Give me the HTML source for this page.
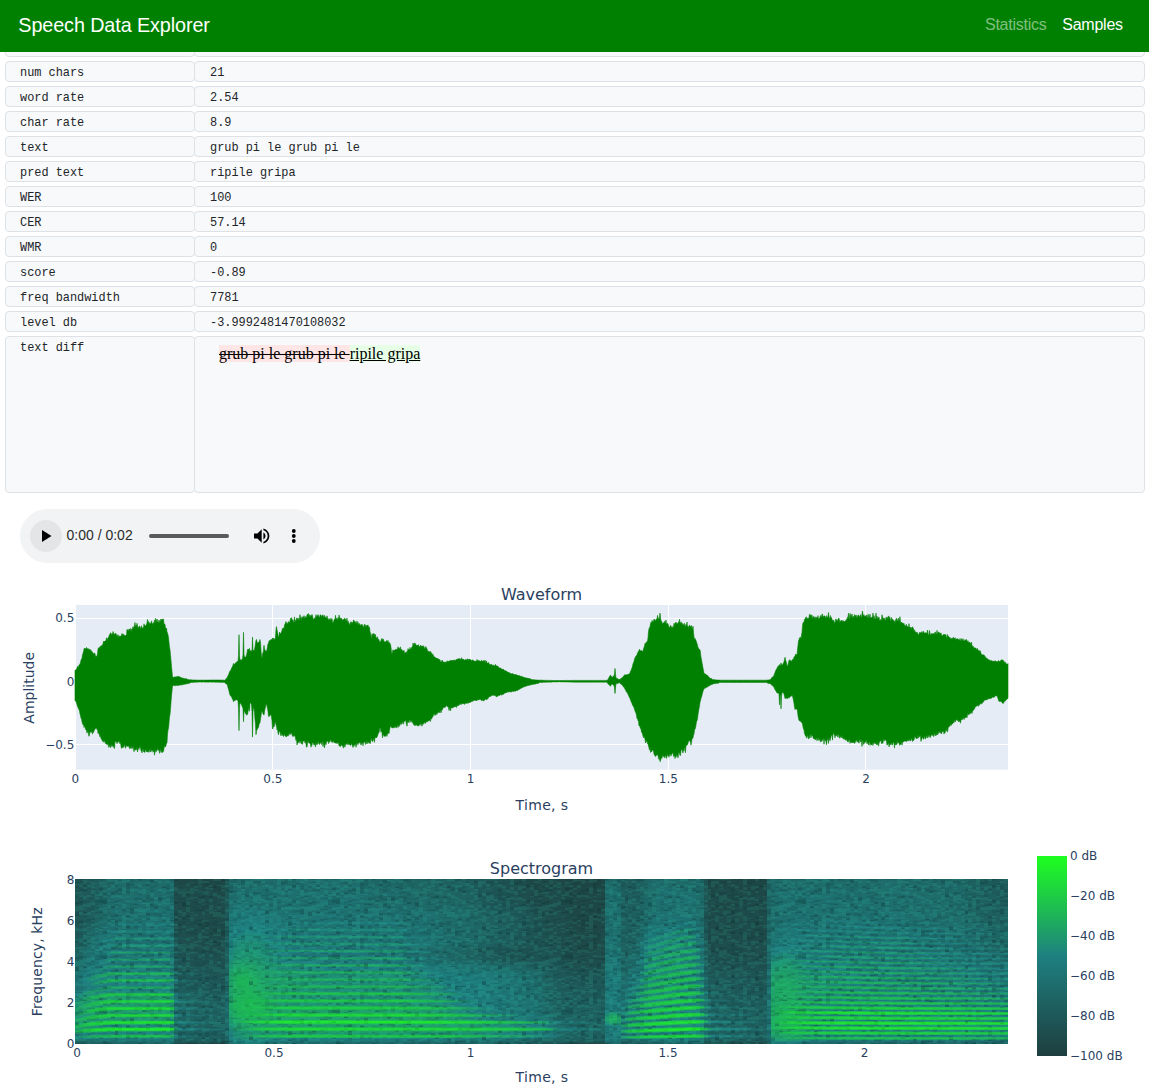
<!DOCTYPE html>
<html lang="en">
<head>
<meta charset="utf-8">
<title>Speech Data Explorer</title>
<style>
html,body{margin:0;padding:0;background:#fff;}
body{width:1149px;height:1085px;position:relative;overflow:hidden;font-family:"Liberation Sans",sans-serif;color:#212529;}
#nav{position:absolute;left:0;top:0;width:1149px;height:52px;background:#008000;z-index:5;}
#brand{position:absolute;left:18.3px;top:11px;font-size:19.8px;line-height:28px;color:#fff;white-space:nowrap;letter-spacing:-0.1px;}
.nl{position:absolute;top:14px;font-size:16px;line-height:22px;white-space:nowrap;}
#n1{left:985px;color:rgba(255,255,255,.5);letter-spacing:-0.25px;}
#n2{left:1062.3px;color:#fff;letter-spacing:-0.25px;}
.c{position:absolute;box-sizing:border-box;height:21px;background:#f8f9fa;border:1px solid #dee2e6;border-radius:4px;font-family:"Liberation Mono",monospace;font-size:11.9px;line-height:19px;color:#212529;white-space:pre;padding:2px 0 0 14px;}
.k{left:5px;width:190px;}
.v{left:194px;width:951px;padding-left:15px;}
#diff{position:absolute;left:219px;top:345px;font-family:"Liberation Serif",serif;font-size:16px;line-height:17px;height:17px;color:#000;white-space:pre;}
#diff del{background:#ffe6e6;text-decoration:line-through;}
#diff ins{background:#e6ffe6;text-decoration:underline;}
#audio{position:absolute;left:20px;top:509px;width:300px;height:54px;border-radius:27px;background:#f1f3f4;}
#audio .pc{position:absolute;left:10px;top:11px;width:32px;height:32px;border-radius:16px;background:#e4e5e6;}
#audio .tm{position:absolute;left:46.5px;top:18px;font-size:14px;line-height:16px;color:#2b2b2b;white-space:nowrap;}
#audio .sl{position:absolute;left:129px;top:25px;width:80px;height:4px;border-radius:2px;background:#5a5a5a;}
svg{position:absolute;left:0;top:0;}
.pt{font-family:"DejaVu Sans","Liberation Sans",sans-serif;fill:#2a3f5f;}
</style>
</head>
<body>
<div id="nav">
  <div id="brand">Speech Data Explorer</div>
  <div class="nl" id="n1">Statistics</div>
  <div class="nl" id="n2">Samples</div>
</div>

<div class="c k" style="top:36px"> </div><div class="c v" style="top:36px"> </div>
<div class="c k" style="top:61px">num chars</div><div class="c v" style="top:61px">21</div>
<div class="c k" style="top:86px">word rate</div><div class="c v" style="top:86px">2.54</div>
<div class="c k" style="top:111px">char rate</div><div class="c v" style="top:111px">8.9</div>
<div class="c k" style="top:136px">text</div><div class="c v" style="top:136px">grub pi le grub pi le</div>
<div class="c k" style="top:161px">pred text</div><div class="c v" style="top:161px">ripile gripa</div>
<div class="c k" style="top:186px">WER</div><div class="c v" style="top:186px">100</div>
<div class="c k" style="top:211px">CER</div><div class="c v" style="top:211px">57.14</div>
<div class="c k" style="top:236px">WMR</div><div class="c v" style="top:236px">0</div>
<div class="c k" style="top:261px">score</div><div class="c v" style="top:261px">-0.89</div>
<div class="c k" style="top:286px">freq bandwidth</div><div class="c v" style="top:286px">7781</div>
<div class="c k" style="top:311px">level db</div><div class="c v" style="top:311px">-3.9992481470108032</div>
<div class="c k" style="top:336px;height:157px">text diff</div><div class="c v" style="top:336px;height:157px"> </div>
<div id="diff"><del>grub pi le grub pi le </del><ins>ripile gripa</ins></div>

<div id="audio">
  <div class="pc"></div>
  <div class="tm">0:00 / 0:02</div>
  <div class="sl"></div>
  <svg width="300" height="54" viewBox="0 0 300 54">
    <path d="M22 21 L22 33 L31.5 27 Z" fill="#000"/>
    <g transform="translate(231.5,16.8) scale(0.85)" fill="#000"><path d="M3 9v6h4l5 5V4L7 9H3zm13.500 3c0-1.770-1.020-3.290-2.500-4.030v8.050c1.480-.730 2.500-2.250 2.500-4.020zM14 3.230v2.060c2.890.860 5 3.540 5 6.710s-2.110 5.850-5 6.710v2.060c4.010-.910 7-4.490 7-8.770s-2.990-7.860-7-8.770z"/></g>
    <circle cx="273.8" cy="22" r="1.9" fill="#000"/><circle cx="273.8" cy="27" r="1.9" fill="#000"/><circle cx="273.8" cy="32" r="1.9" fill="#000"/>
  </svg>
</div>

<!-- PLOTS -->
<svg id="plots" width="1149" height="1085" viewBox="0 0 1149 1085">
  <!-- waveform -->
  <rect x="76" y="605" width="932" height="164.700" fill="#e5ecf6"/>
  <g stroke="#fff" stroke-width="1" fill="none" shape-rendering="crispEdges">
    <path d="M272.500 605V769.700M470.500 605V769.700M668.500 605V769.700M865.500 605V769.700"/>
    <path d="M76 618.500H1008M76 744.500H1008"/>
    <path d="M76 681.500H1008" stroke-width="2"/>
  </g>
  <g id="wave"><path d="M75 670.6 75.5 670 76 669.8 76.5 668.9 77 668.1 77.5 666.4 78 667.3 78.5 666.7 79 664.9 79.5 664.9 80 663.9 80.5 662.6 81 660.3 81.5 659.1 82 658.2 82.5 654.8 83 653.4 83.5 651.6 84 649.3 84.5 648 85 648.5 85.5 648.8 86 649 86.5 647.4 87 648.6 87.5 649.1 88 648.4 88.5 649.3 89 649.4 89.5 648.9 90 650.4 90.5 650 91 649.8 91.5 652.2 92 651.5 92.5 652.5 93 652.8 93.5 653.6 94 654.7 94.5 652.8 95 654 95.5 656 96 656.5 96.5 656.3 97 655.7 97.5 653.7 98 649.3 98.5 647.8 99 649 99.5 646.9 100 648.1 100.5 645.9 101 646.4 101.5 645.6 102 645.8 102.5 645 103 643.7 103.5 641.2 104 641.8 104.5 641.6 105 641.1 105.5 640.7 106 640.4 106.5 637.8 107 641.3 107.5 638.3 108 637.8 108.5 637.8 109 635.9 109.5 634.7 110 634.3 110.5 632.8 111 633.1 111.5 634.5 112 634.5 112.5 634.1 113 631.5 113.5 633.1 114 634.2 114.5 634.4 115 633.5 115.5 633.5 116 633.3 116.5 636.1 117 635.2 117.5 636.4 118 634.6 118.5 637.2 119 637 119.5 635.7 120 636.2 120.5 636.6 121 635.8 121.5 635.1 122 633.5 122.5 635.9 123 633.8 123.5 635.1 124 635.2 124.5 634.9 125 635.9 125.5 635.8 126 635.1 126.5 635.1 127 629.4 127.5 630.3 128 629.8 128.5 631.6 129 628.9 129.5 629.7 130 629.3 130.5 628.4 131 631.9 131.5 629.2 132 629.5 132.5 628.6 133 626.7 133.5 629.3 134 626.7 134.5 625.4 135 622.5 135.5 627.4 136 625.1 136.5 626.4 137 623.2 137.5 625.9 138 628.9 138.5 626.8 139 627.9 139.5 626.1 140 626.4 140.5 628.5 141 628.6 141.5 625.7 142 627.7 142.5 628.4 143 627.5 143.5 627.8 144 623.8 144.5 625.7 145 625.4 145.5 626.1 146 625.2 146.5 624.4 147 623 147.5 619.4 148 622.2 148.5 621.5 149 624.1 149.5 622.6 150 624.6 150.5 623.3 151 623.5 151.5 620.9 152 623 152.5 623.5 153 624.7 153.5 622.6 154 623.4 154.5 620.2 155 623.9 155.5 618.3 156 620 156.5 622.9 157 619 157.5 621.2 158 622.3 158.5 622.8 159 620 159.5 622 160 622.5 160.5 619.9 161 619 161.5 620.5 162 619.3 162.5 620.3 163 618.7 163.5 619.3 164 623.8 164.5 623.9 165 624.5 165.5 627.6 166 629.3 166.5 628 167 631.9 167.5 632.9 168 634.9 168.5 637.6 169 642.8 169.5 646.9 170 649.9 170.5 655.2 171 660.5 171.5 666.5 172 671.5 172.5 676.8 173 677.3 173.5 677.4 174 677.2 174.5 676.9 175 676.9 175.5 676.9 176 676.8 176.5 676.8 177 676.4 177.5 676.5 178 676.4 178.5 676.4 179 676.5 179.5 676.8 180 677.2 180.5 677.3 181 677.4 181.5 677.7 182 678 182.5 678 183 678.2 183.5 678.3 184 678.5 184.5 678.6 185 678.7 185.5 678.7 186 678.8 186.5 678.7 187 678.9 187.5 679.5 188 679.5 188.5 679.6 189 679.7 189.5 679.7 190 679.7 190.5 679.8 191 679.9 191.5 679.8 192 679.9 192.5 679.9 193 679.9 193.5 680 194 680 194.5 680 195 680.1 195.5 680 196 680.1 196.5 680.1 197 680.2 197.5 680.1 198 680.2 198.5 680.2 199 680.1 199.5 680.1 200 680.1 200.5 680.2 201 680.2 201.5 680.1 202 680.1 202.5 680.1 203 680.2 203.5 680.2 204 680.1 204.5 680.2 205 680.1 205.5 680.1 206 680.1 206.5 680.1 207 680 207.5 680.1 208 680 208.5 680.1 209 680.1 209.5 680.1 210 680.1 210.5 680 211 680.1 211.5 680 212 680.1 212.5 680 213 680 213.5 680 214 680 214.5 680 215 679.9 215.5 680 216 680 216.5 680 217 680 217.5 680 218 680 218.5 680.1 219 680 219.5 680 220 680 220.5 680.1 221 680.1 221.5 680.1 222 680.2 222.5 680.1 223 680.2 223.5 680.1 224 680.2 224.5 680.2 225 680 225.5 679.7 226 678.7 226.5 678.2 227 677.8 227.5 677 228 675.6 228.5 674.9 229 673.6 229.5 671.7 230 671.6 230.5 670.6 231 669.5 231.5 668.5 232 667.1 232.5 666.8 233 665.2 233.5 663.4 234 664.7 234.5 664.1 235 663.5 235.5 663.3 236 662.6 236.5 662 237 661.5 237.5 661.4 238 661.8 238.5 655.5 239 634.7 239.5 655.5 240 661.2 240.5 659.6 241 660 241.5 660.6 242 659 242.5 659.4 243 654.2 243.5 632.3 244 654.2 244.5 657.4 245 657 245.5 657.3 246 656.4 246.5 655.1 247 652.9 247.5 649.6 248 649 248.5 649.6 249 648.8 249.5 648.4 250 651.7 250.5 650.6 251 651.6 251.5 650.6 252 651.8 252.5 637.1 253 650.9 253.5 650.2 254 651 254.5 649.8 255 647 255.5 643.3 256 640.3 256.5 639.4 257 641.9 257.5 643.6 258 642.4 258.5 643 259 641.6 259.5 641.5 260 639.5 260.5 642.7 261 650.4 261.5 657.1 262 657.9 262.5 653.2 263 653.5 263.5 650.1 264 645.2 264.5 649.2 265 649.8 265.5 651 266 651.1 266.5 651.4 267 649.5 267.5 646.5 268 643.6 268.5 643.7 269 640.8 269.5 640.7 270 640.4 270.5 640 271 639.8 271.5 639.2 272 640.3 272.5 637.9 273 640.5 273.5 638 274 639.1 274.5 639.8 275 638.6 275.5 637.4 276 629.8 276.5 626.6 277 629.9 277.5 632.1 278 635.2 278.5 637.3 279 635.7 279.5 632.1 280 634.1 280.5 633.7 281 633 281.5 631.8 282 630.4 282.5 628.4 283 629.5 283.5 627.8 284 629.2 284.5 625 285 624.1 285.5 622.9 286 621.5 286.5 624.7 287 622.6 287.5 623.7 288 624.1 288.5 621.7 289 621.7 289.5 622.7 290 621.3 290.5 618.4 291 619.5 291.5 617.7 292 619.4 292.5 619.9 293 619.9 293.5 622.7 294 621.3 294.5 616.9 295 623 295.5 620.4 296 620.8 296.5 618.3 297 618.1 297.5 618.2 298 621.2 298.5 618.3 299 620.7 299.5 618.8 300 614.6 300.5 620.5 301 616.6 301.5 619.9 302 618.2 302.5 617.2 303 616.6 303.5 618.4 304 615.6 304.5 617.8 305 618.8 305.5 616.6 306 617 306.5 618 307 614.8 307.5 614.3 308 613.9 308.5 613.6 309 617.3 309.5 614.8 310 617.5 310.5 615.3 311 615.9 311.5 615.9 312 614.4 312.5 616 313 618.2 313.5 619.7 314 619.1 314.5 618 315 619.1 315.5 616.9 316 614.7 316.5 617.9 317 615.7 317.5 616.1 318 614.6 318.5 616.3 319 616.7 319.5 618 320 614.9 320.5 615 321 615.3 321.5 617 322 615.4 322.5 614.8 323 616.4 323.5 617.4 324 615.1 324.5 615.9 325 616.8 325.5 617.3 326 617.5 326.5 618.6 327 615.8 327.5 618 328 619.3 328.5 620.4 329 618.5 329.5 619.3 330 620.2 330.5 620.1 331 618.2 331.5 621 332 618.7 332.5 622.4 333 622.5 333.5 622.3 334 620.1 334.5 619.3 335 618.9 335.5 615.2 336 619.8 336.5 618.3 337 619.5 337.5 619.6 338 617.6 338.5 620.1 339 614.9 339.5 616.8 340 618.7 340.5 618.3 341 618.6 341.5 618.1 342 619.8 342.5 621.1 343 619.2 343.5 620 344 619.8 344.5 618 345 618.7 345.5 619.1 346 621 346.5 620.8 347 618.1 347.5 622.9 348 620.9 348.5 622.7 349 622.9 349.5 624.8 350 624.7 350.5 622.4 351 621.6 351.5 623.9 352 622 352.5 624.1 353 622.3 353.5 620.1 354 620.4 354.5 621.9 355 621.3 355.5 622.6 356 623.4 356.5 622.9 357 621 357.5 624.4 358 622.3 358.5 625.9 359 623.5 359.5 623.7 360 625.6 360.5 625.2 361 624.5 361.5 626 362 624.1 362.5 626.6 363 625.5 363.5 627.2 364 627.6 364.5 624.1 365 627.8 365.5 624.8 366 627.7 366.5 625.5 367 625.3 367.5 625.4 368 624.9 368.5 627.1 369 627.5 369.5 627.1 370 631.7 370.5 633.3 371 636.3 371.5 638.8 372 633.7 372.5 635.2 373 633.7 373.5 633.5 374 636.2 374.5 633.8 375 635 375.5 634.7 376 638.1 376.5 637.7 377 638.4 377.5 636.8 378 639.8 378.5 639.2 379 639.7 379.5 641.8 380 642.6 380.5 641.2 381 641.1 381.5 638.9 382 638.6 382.5 640 383 638.8 383.5 639.8 384 641.9 384.5 641.7 385 642 385.5 641.8 386 641.9 386.5 640.5 387 641.1 387.5 642.3 388 640.3 388.5 642.9 389 643.1 389.5 642.3 390 644 390.5 644.3 391 647.4 391.5 652.8 392 653.7 392.5 651.9 393 649.7 393.5 651.6 394 650.1 394.5 650.8 395 650.1 395.5 649.3 396 649.9 396.5 649.8 397 648.8 397.5 649.4 398 646.8 398.5 648.7 399 647.9 399.5 649.4 400 647.6 400.5 646.8 401 650.6 401.5 649.5 402 649.5 402.5 651.5 403 650.8 403.5 651.1 404 650.3 404.5 653.2 405 653.5 405.5 652.3 406 653.1 406.5 652.3 407 651.2 407.5 651.6 408 648.6 408.5 650 409 649.2 409.5 650.6 410 647.4 410.5 648.9 411 649.5 411.5 647.9 412 646.8 412.5 647.2 413 643 413.5 644.5 414 645.2 414.5 643.1 415 643.1 415.5 643.9 416 644.7 416.5 645.2 417 646.1 417.5 645 418 646 418.5 644.6 419 647.1 419.5 646.5 420 647.3 420.5 645.1 421 645.9 421.5 646.2 422 646 422.5 645.9 423 647.5 423.5 645.7 424 646.6 424.5 648.6 425 648.6 425.5 647.2 426 646.6 426.5 648.7 427 648.4 427.5 651 428 651.4 428.5 651.3 429 651.3 429.5 651.9 430 652.1 430.5 651.2 431 653.3 431.5 652.8 432 654.4 432.5 653.9 433 654.5 433.5 655.7 434 657.2 434.5 656.9 435 657.1 435.5 657.7 436 657.9 436.5 658.1 437 658.6 437.5 658 438 658.9 438.5 659.1 439 660.1 439.5 659.5 440 659.7 440.5 661.6 441 661.9 441.5 661.9 442 660.1 442.5 660.5 443 661.9 443.5 662 444 662.3 444.5 662.3 445 662 445.5 662.2 446 662.1 446.5 662.4 447 660.8 447.5 661.5 448 660.9 448.5 661.4 449 661.3 449.5 660.9 450 661.1 450.5 660.4 451 660.5 451.5 661 452 660.1 452.5 660.9 453 660.1 453.5 660.1 454 660.7 454.5 660.3 455 660.5 455.5 659.9 456 660.2 456.5 659.1 457 659.6 457.5 659.8 458 658.6 458.5 659.1 459 658.8 459.5 658.4 460 659.1 460.5 659.5 461 658.8 461.5 657.7 462 660 462.5 658.8 463 659.5 463.5 659.5 464 659.5 464.5 660.4 465 659.7 465.5 659.4 466 660 466.5 659.9 467 659.7 467.5 658.7 468 659.2 468.5 660.2 469 659 469.5 659.3 470 659.9 470.5 659.3 471 660.8 471.5 660.5 472 660.4 472.5 660 473 660.1 473.5 660.9 474 660.6 474.5 661.6 475 660.9 475.5 661.3 476 661.1 476.5 661.6 477 659.5 477.5 660.4 478 660.7 478.5 660.5 479 660.5 479.5 661.1 480 660.7 480.5 661.7 481 660.9 481.5 660.4 482 660.6 482.5 661.2 483 661.6 483.5 660.7 484 660.6 484.5 661.8 485 660.1 485.5 661.8 486 662.5 486.5 660.9 487 662.9 487.5 663.1 488 663.6 488.5 662.4 489 663.5 489.5 664.4 490 664.3 490.5 664.8 491 664.2 491.5 664.4 492 665.4 492.5 665.1 493 665.5 493.5 665.2 494 665.3 494.5 665.7 495 666 495.5 664.3 496 665.5 496.5 666 497 665.9 497.5 666.1 498 666.3 498.5 667.3 499 667.5 499.5 667.9 500 668 500.5 668.1 501 668.4 501.5 669.1 502 669 502.5 669.1 503 669.6 503.5 669.6 504 669.8 504.5 670.6 505 670.7 505.5 670.8 506 670.9 506.5 671 507 671.8 507.5 672.2 508 671.9 508.5 672.5 509 672.5 509.5 672.7 510 673.3 510.5 673.5 511 673.7 511.5 673.8 512 673.6 512.5 673.5 513 674.1 513.5 674.3 514 674.3 514.5 674.6 515 674.6 515.5 674.6 516 674.8 516.5 674.8 517 674.9 517.5 675.3 518 675.5 518.5 675.6 519 675.6 519.5 675.7 520 676.1 520.5 676.3 521 676.3 521.5 676.4 522 676.5 522.5 676.7 523 676.9 523.5 677.3 524 677.2 524.5 677.5 525 677.7 525.5 677.8 526 678 526.5 678 527 678.1 527.5 678.3 528 678.3 528.5 678.5 529 678.5 529.5 678.5 530 678.7 530.5 678.8 531 679.6 531.5 679.6 532 679.7 532.5 679.6 533 679.7 533.5 679.7 534 679.8 534.5 679.8 535 679.9 535.5 679.9 536 679.8 536.5 680 537 680 537.5 680.1 538 680 538.5 680.1 539 680.1 539.5 680.2 540 680.2 540.5 680.2 541 680.2 541.5 680.1 542 680.3 542.5 680.3 543 680.3 543.5 680.3 544 680.3 544.5 680.3 545 680.4 545.5 680.3 546 680.4 546.5 680.4 547 680.4 547.5 680.4 548 680.4 548.5 680.4 549 680.4 549.5 680.4 550 680.4 550.5 680.4 551 680.4 551.5 680.4 552 680.5 552.5 680.5 553 680.4 553.5 680.5 554 680.5 554.5 680.4 555 680.5 555.5 680.5 556 680.5 556.5 680.5 557 680.5 557.5 680.5 558 680.5 558.5 680.5 559 680.5 559.5 680.5 560 680.5 560.5 680.5 561 680.5 561.5 680.5 562 680.5 562.5 680.5 563 680.5 563.5 680.5 564 680.5 564.5 680.5 565 680.5 565.5 680.4 566 680.5 566.5 680.5 567 680.5 567.5 680.4 568 680.5 568.5 680.5 569 680.5 569.5 680.4 570 680.4 570.5 680.5 571 680.4 571.5 680.4 572 680.5 572.5 680.4 573 680.4 573.5 680.4 574 680.4 574.5 680.4 575 680.4 575.5 680.4 576 680.4 576.5 680.4 577 680.4 577.5 680.4 578 680.4 578.5 680.4 579 680.4 579.5 680.4 580 680.4 580.5 680.4 581 680.4 581.5 680.4 582 680.4 582.5 680.4 583 680.4 583.5 680.4 584 680.4 584.5 680.4 585 680.4 585.5 680.4 586 680.4 586.5 680.4 587 680.4 587.5 680.4 588 680.4 588.5 680.4 589 680.4 589.5 680.4 590 680.4 590.5 680.4 591 680.4 591.5 680.4 592 680.4 592.5 680.4 593 680.4 593.5 680.4 594 680.4 594.5 680.4 595 680.4 595.5 680.4 596 680.4 596.5 680.4 597 680.4 597.5 680.4 598 680.4 598.5 680.4 599 680.4 599.5 680.4 600 680.4 600.5 680.4 601 680.4 601.5 680.4 602 680.4 602.5 680.4 603 680.4 603.5 680.4 604 680.4 604.5 680.4 605 680.4 605.5 680.4 606 680.4 606.5 680.4 607 680.2 607.5 679.9 608 679.6 608.5 678.3 609 677.4 609.5 676.6 610 675.9 610.5 675 611 675.9 611.5 676.5 612 677.4 612.5 677.1 613 676.5 613.5 676.1 614 676.3 614.5 674.2 615 668.5 615.5 674.2 616 678.3 616.5 678.2 617 678.4 617.5 678.7 618 678.7 618.5 679.5 619 679.5 619.5 679.5 620 679.5 620.5 678.7 621 678.6 621.5 678.3 622 678.1 622.5 677.3 623 676.7 623.5 676.2 624 675.4 624.5 675 625 674.9 625.5 674.8 626 675.1 626.5 674.8 627 674.8 627.5 674.6 628 674.3 628.5 674.2 629 674.1 629.5 673.8 630 673 630.5 671.3 631 670.5 631.5 669.1 632 667.7 632.5 666.3 633 663.9 633.5 662.4 634 661.5 634.5 659.2 635 657.8 635.5 656.9 636 655.7 636.5 656 637 654.9 637.5 652.8 638 653 638.5 651 639 650.7 639.5 649.2 640 650.6 640.5 651.3 641 650.2 641.5 650.8 642 651.1 642.5 651.5 643 650.7 643.5 648.8 644 647.4 644.5 645.9 645 643.5 645.5 644.2 646 642.3 646.5 642.2 647 641.7 647.5 641.1 648 638 648.5 631.6 649 628.9 649.5 627.4 650 626.7 650.5 623.8 651 622.3 651.5 623.4 652 620.4 652.5 620.9 653 622.3 653.5 621.4 654 619.1 654.5 619.3 655 621.3 655.5 620.2 656 619.7 656.5 618.7 657 619.9 657.5 615.4 658 617.5 658.5 618.3 659 619.7 659.5 617.3 660 613.1 660.5 617.6 661 621.3 661.5 621.1 662 622.6 662.5 623.3 663 623.3 663.5 622.9 664 622.9 664.5 621.3 665 623.4 665.5 622.3 666 620 666.5 624.2 667 624.2 667.5 623.4 668 623.4 668.5 625.8 669 626.9 669.5 627.9 670 626.9 670.5 625.1 671 627.6 671.5 627.3 672 626.3 672.5 627.4 673 627.4 673.5 627.1 674 623.3 674.5 626.3 675 623.3 675.5 622.5 676 622.7 676.5 622.6 677 624.5 677.5 623.5 678 623.6 678.5 621.7 679 623.4 679.5 619.2 680 622.8 680.5 624 681 621.8 681.5 624.2 682 622.8 682.5 624.5 683 624.9 683.5 624.4 684 623.6 684.5 623.5 685 626.7 685.5 626 686 624.4 686.5 626 687 622 687.5 627.6 688 626 688.5 628.7 689 626.4 689.5 625.1 690 625.4 690.5 627 691 626.1 691.5 625.7 692 627.5 692.5 630.3 693 626.2 693.5 632.4 694 637.1 694.5 639.5 695 638.4 695.5 639.6 696 640.6 696.5 642.1 697 643.4 697.5 645.4 698 647.2 698.5 648.3 699 649.1 699.5 649.5 700 649.8 700.5 652.8 701 657.4 701.5 659.4 702 662.7 702.5 665 703 668.2 703.5 670.5 704 673.4 704.5 673.7 705 673.6 705.5 674.1 706 674.6 706.5 675 707 675.2 707.5 675.4 708 675.7 708.5 676.7 709 677.2 709.5 677.6 710 678.3 710.5 678.5 711 678.5 711.5 678.6 712 678.7 712.5 679.5 713 679.7 713.5 679.6 714 679.7 714.5 679.7 715 679.8 715.5 679.8 716 679.9 716.5 679.9 717 679.9 717.5 680 718 680 718.5 680.1 719 680 719.5 680.1 720 680.2 720.5 680.2 721 680.2 721.5 680.2 722 680.2 722.5 680.2 723 680.2 723.5 680.2 724 680.2 724.5 680.2 725 680.2 725.5 680.1 726 680.2 726.5 680.2 727 680.2 727.5 680.2 728 680.2 728.5 680.2 729 680.2 729.5 680.2 730 680.2 730.5 680.2 731 680.2 731.5 680.2 732 680.2 732.5 680.2 733 680.2 733.5 680.2 734 680.2 734.5 680.1 735 680.2 735.5 680.2 736 680.2 736.5 680.2 737 680.2 737.5 680.2 738 680.2 738.5 680.2 739 680.2 739.5 680.2 740 680.1 740.5 680.2 741 680.2 741.5 680.2 742 680.2 742.5 680.2 743 680.2 743.5 680.2 744 680.2 744.5 680.1 745 680.2 745.5 680.2 746 680.2 746.5 680.2 747 680.2 747.5 680.2 748 680.2 748.5 680.2 749 680.2 749.5 680.2 750 680.2 750.5 680.2 751 680.2 751.5 680.2 752 680.2 752.5 680.2 753 680.2 753.5 680.2 754 680.2 754.5 680.2 755 680.2 755.5 680.2 756 680.2 756.5 680.2 757 680.2 757.5 680.2 758 680.2 758.5 680.1 759 680.2 759.5 680.2 760 680.2 760.5 680.2 761 680.2 761.5 680.2 762 680.2 762.5 680.2 763 680.2 763.5 680.2 764 680.2 764.5 680.2 765 680.2 765.5 680.2 766 680.2 766.5 680.2 767 680.1 767.5 680 768 679.9 768.5 679.9 769 679.9 769.5 679.8 770 679.8 770.5 679.6 771 678.5 771.5 678.1 772 677.5 772.5 677.1 773 676.7 773.5 676.2 774 675.2 774.5 673.7 775 672.6 775.5 671.1 776 670.1 776.5 668.9 777 668.6 777.5 667 778 666.6 778.5 665.9 779 665.2 779.5 664.5 780 666 780.5 665.5 781 662.9 781.5 664.9 782 664.7 782.5 665.1 783 663.8 783.5 663 784 661.8 784.5 659.7 785 657.3 785.5 659.9 786 661.2 786.5 663.2 787 665.5 787.5 666.4 788 664.7 788.5 662.4 789 660.7 789.5 659.7 790 661.1 790.5 660.6 791 660.6 791.5 661.2 792 661 792.5 659.2 793 659.9 793.5 659.2 794 656.9 794.5 656.6 795 656.5 795.5 654 796 655.2 796.5 654.7 797 654.8 797.5 649.8 798 645.3 798.5 640.8 799 639.8 799.5 637.7 800 639.6 800.5 637 801 639.6 801.5 634.7 802 632.4 802.5 626.3 803 622.5 803.5 622.5 804 622.1 804.5 619.4 805 618.9 805.5 617.7 806 617.6 806.5 616.8 807 619.2 807.5 618.3 808 618.7 808.5 618.2 809 617.5 809.5 614.3 810 614.8 810.5 616.4 811 614.5 811.5 618.3 812 615.2 812.5 618.3 813 618.3 813.5 616.4 814 616.8 814.5 619.1 815 616.7 815.5 617.8 816 619.4 816.5 616.9 817 617.8 817.5 618 818 615.6 818.5 619.9 819 618.1 819.5 618.9 820 617.1 820.5 615.5 821 616.4 821.5 616.9 822 614.1 822.5 614 823 617.8 823.5 616.3 824 616 824.5 615.9 825 616.1 825.5 618.1 826 618.3 826.5 615.6 827 617.7 827.5 616.9 828 616.5 828.5 612.4 829 616.7 829.5 618.6 830 618.1 830.5 615.6 831 618.9 831.5 617.5 832 619.3 832.5 620.3 833 621.1 833.5 620.1 834 621.4 834.5 622.7 835 623.4 835.5 619.9 836 618.7 836.5 621.4 837 620 837.5 621.7 838 619 838.5 618.4 839 618.1 839.5 621.2 840 621.5 840.5 621.6 841 620.4 841.5 621.3 842 620.1 842.5 621.4 843 621.4 843.5 620.9 844 621.1 844.5 621.6 845 621.8 845.5 620.6 846 621.5 846.5 618.9 847 619.6 847.5 617.2 848 617 848.5 613.2 849 618.9 849.5 618.1 850 613.3 850.5 617.8 851 614.8 851.5 618.5 852 613.9 852.5 617.7 853 616.6 853.5 616.5 854 618.4 854.5 614.5 855 616.2 855.5 615.6 856 614.9 856.5 615.7 857 618.6 857.5 616.7 858 615 858.5 615.1 859 616.1 859.5 616.2 860 617.6 860.5 614.6 861 617.5 861.5 616.9 862 613.9 862.5 611 863 614.8 863.5 615.8 864 614.7 864.5 617 865 616.1 865.5 615.8 866 616.9 866.5 615 867 617.9 867.5 617.3 868 614.2 868.5 616 869 618.6 869.5 616.8 870 614.1 870.5 617.8 871 618 871.5 617.4 872 617.4 872.5 616.9 873 613.1 873.5 619.2 874 615.6 874.5 618.7 875 618.8 875.5 619.3 876 613.1 876.5 619.5 877 616.1 877.5 619.1 878 618.4 878.5 617.5 879 616.9 879.5 619.9 880 621.3 880.5 619.5 881 621.6 881.5 618.9 882 614.7 882.5 616.4 883 619.7 883.5 618.3 884 617.9 884.5 618.2 885 620 885.5 621.2 886 617.4 886.5 618.6 887 616.9 887.5 619 888 617.6 888.5 615.9 889 619.2 889.5 616.7 890 617.8 890.5 620.4 891 620.8 891.5 617.5 892 618.8 892.5 620 893 619.6 893.5 620.2 894 621.1 894.5 621.2 895 622.9 895.5 620.3 896 619 896.5 618.2 897 621.6 897.5 620.6 898 618.8 898.5 618.2 899 622.1 899.5 619.4 900 616.7 900.5 622 901 622.6 901.5 622.3 902 623.3 902.5 622.8 903 623.2 903.5 624.1 904 623.3 904.5 625.9 905 625.4 905.5 626.8 906 624.5 906.5 624.6 907 626.8 907.5 626.5 908 626.7 908.5 627.5 909 623.6 909.5 628.6 910 627 910.5 628.4 911 627.1 911.5 629.9 912 627.3 912.5 627.1 913 627.4 913.5 628.9 914 631.4 914.5 629.8 915 632.2 915.5 631.7 916 632.4 916.5 631.9 917 633.5 917.5 632.6 918 634.7 918.5 634.7 919 634 919.5 632.5 920 632.4 920.5 633.1 921 632.4 921.5 633.1 922 631.4 922.5 633.5 923 632.6 923.5 631.3 924 632.9 924.5 633 925 632.9 925.5 633 926 632.6 926.5 633.3 927 632.7 927.5 630 928 634.1 928.5 635.6 929 633.7 929.5 630.4 930 633.3 930.5 635.4 931 634.6 931.5 633.3 932 634.3 932.5 633.6 933 634.2 933.5 633.5 934 634.8 934.5 632.6 935 635.6 935.5 631.9 936 633.8 936.5 634.5 937 630.3 937.5 635 938 632.1 938.5 632 939 632.9 939.5 632.7 940 633.8 940.5 633.5 941 632.8 941.5 634.9 942 636 942.5 635.8 943 635.2 943.5 634.5 944 634.2 944.5 635.7 945 634 945.5 635.7 946 634.8 946.5 638.1 947 637.3 947.5 634.5 948 636.9 948.5 636.3 949 636.7 949.5 638.2 950 637.3 950.5 639.4 951 638.3 951.5 639.6 952 638 952.5 639.5 953 637.7 953.5 637.2 954 638.7 954.5 638.5 955 637.7 955.5 640.2 956 638.4 956.5 639.4 957 638.9 957.5 638.7 958 639.2 958.5 639.4 959 640.1 959.5 640.4 960 638.4 960.5 640.7 961 640.4 961.5 638.6 962 641.3 962.5 639.6 963 638.7 963.5 640.8 964 640.7 964.5 640.9 965 639.5 965.5 640.6 966 639.8 966.5 639.6 967 641.4 967.5 641.7 968 640.6 968.5 643.3 969 641.9 969.5 642.3 970 642.7 970.5 642.9 971 644.5 971.5 642.1 972 646 972.5 646.2 973 645.9 973.5 647 974 647.7 974.5 647.8 975 648.5 975.5 647.9 976 648.1 976.5 649.5 977 649.4 977.5 648.4 978 650.5 978.5 650.7 979 650.2 979.5 652.3 980 650.6 980.5 651.6 981 653.3 981.5 654.3 982 654.8 982.5 654.9 983 654.8 983.5 655.1 984 654.7 984.5 655.6 985 657.3 985.5 656.7 986 658.1 986.5 658.3 987 659 987.5 658.7 988 659 988.5 660 989 660.3 989.5 659.7 990 661 990.5 660.6 991 661.1 991.5 660.7 992 660.5 992.5 661.1 993 661.7 993.5 661.1 994 661 994.5 660.9 995 661.6 995.5 660.7 996 661.9 996.5 661.3 997 662 997.5 661.5 998 661.7 998.5 660.5 999 660.8 999.5 661.6 1000 661.4 1000.5 661 1001 660 1001.5 659.8 1002 661 1002.5 659.9 1003 659.8 1003.5 661 1004 661.6 1004.5 662.1 1005 662.4 1005.5 662.4 1006 663.7 1006.5 664 1007 664.1 1007.5 664.8 1008 663.5 L1008 697.8 1007.5 698.9 1007 699.1 1006.5 699.4 1006 699.4 1005.5 700.9 1005 701.1 1004.5 701.2 1004 701.9 1003.5 703.3 1003 703.3 1002.5 703.1 1002 702.7 1001.5 701.6 1001 701.5 1000.5 701.5 1000 701.3 999.5 701.3 999 701.5 998.5 700 998 698.6 997.5 697 997 696.3 996.5 695.7 996 695.9 995.5 695.7 995 696.1 994.5 697.1 994 696.9 993.5 697.5 993 697.1 992.5 697 992 697.8 991.5 698 991 698.4 990.5 698.7 990 697.9 989.5 698.5 989 698.7 988.5 699.2 988 698.6 987.5 699.4 987 699.4 986.5 699.8 986 699.9 985.5 699.9 985 700 984.5 700.2 984 700.6 983.5 701.9 983 701.5 982.5 703.1 982 703.5 981.5 703.7 981 703.4 980.5 703.6 980 703.9 979.5 705.2 979 704.3 978.5 706.3 978 705.7 977.5 705.6 977 705.7 976.5 705.9 976 706.5 975.5 707 975 707.1 974.5 709.1 974 709.5 973.5 709.9 973 710.5 972.5 711.5 972 713.5 971.5 712 971 712.5 970.5 713 970 714.1 969.5 713.4 969 714.4 968.5 715.1 968 713.6 967.5 714.3 967 717.7 966.5 716.5 966 717.4 965.5 717.9 965 717.2 964.5 718.2 964 719.6 963.5 716.7 963 718.7 962.5 719.6 962 717.7 961.5 719.8 961 720.2 960.5 723.2 960 720.5 959.5 721.6 959 720.7 958.5 721.8 958 719.6 957.5 720.6 957 719.7 956.5 719.8 956 719.9 955.5 721.7 955 720.7 954.5 720.6 954 722.7 953.5 721.7 953 723.1 952.5 724 952 724 951.5 724.1 951 725.7 950.5 723.3 950 725.5 949.5 726.5 949 726.4 948.5 726.8 948 728.8 947.5 732.1 947 728 946.5 731.1 946 729.3 945.5 731.1 945 733.1 944.5 732.3 944 734.1 943.5 730.8 943 731.2 942.5 731.7 942 731.6 941.5 733.9 941 732 940.5 733.3 940 730.2 939.5 732.6 939 732.3 938.5 732.4 938 734.3 937.5 734.8 937 731.9 936.5 735.3 936 733.2 935.5 735.8 935 733.9 934.5 733.2 934 736.3 933.5 736.5 933 733.4 932.5 735.6 932 735 931.5 734.9 931 734.9 930.5 737.5 930 736.1 929.5 734.2 929 737.5 928.5 734.8 928 736.1 927.5 737.9 927 735.2 926.5 736.1 926 738.6 925.5 738.9 925 736.8 924.5 736.2 924 738.9 923.5 739.2 923 738.1 922.5 736.2 922 738.8 921.5 739 921 741.4 920.5 736.7 920 735.5 919.5 736.5 919 737.4 918.5 737.6 918 734.7 917.5 738.5 917 737.2 916.5 738.9 916 738.2 915.5 737.6 915 736.3 914.5 737.5 914 739.9 913.5 740.5 913 740.5 912.5 741.5 912 739 911.5 738.5 911 740.3 910.5 741.1 910 738.9 909.5 738.9 909 741.2 908.5 739.8 908 740.6 907.5 739.4 907 741.4 906.5 741.2 906 741.6 905.5 741.2 905 740.7 904.5 740.9 904 741.6 903.5 742 903 740.9 902.5 742.6 902 745.2 901.5 741.8 901 743.7 900.5 744.5 900 743.9 899.5 745.3 899 741.5 898.5 743.2 898 741.6 897.5 742 897 744 896.5 744.8 896 742.1 895.5 745 895 742.4 894.5 748.1 894 742.2 893.5 742.6 893 743 892.5 745.1 892 744 891.5 742.1 891 745 890.5 744.1 890 742.9 889.5 745.6 889 746.9 888.5 742 888 744.3 887.5 743.9 887 745.2 886.5 741.4 886 740.4 885.5 740.1 885 739.2 884.5 741.1 884 739.3 883.5 738.9 883 743.3 882.5 743.2 882 742.4 881.5 743.7 881 739.9 880.5 741.1 880 741.6 879.5 741.8 879 743.6 878.5 746.1 878 741 877.5 744.7 877 742.8 876.5 744.7 876 744.1 875.5 743.7 875 741.5 874.5 743.2 874 743.5 873.5 742.4 873 745.5 872.5 741.9 872 744.9 871.5 744.8 871 743.9 870.5 743 870 745.4 869.5 741.2 869 742.3 868.5 744.9 868 743.7 867.5 741.4 867 743.8 866.5 740.5 866 740 865.5 742.5 865 742 864.5 742.3 864 744.2 863.5 744.2 863 739.9 862.5 741.4 862 746.4 861.5 741.5 861 740.3 860.5 742.1 860 739.1 859.5 739.5 859 743.2 858.5 741.9 858 742.2 857.5 740.1 857 742.1 856.5 739.7 856 739.9 855.5 741.4 855 743.1 854.5 743.4 854 741.6 853.5 742.7 853 741.7 852.5 743 852 742.1 851.5 742.8 851 741.5 850.5 742.1 850 743.4 849.5 739.7 849 739.4 848.5 741.8 848 741.5 847.5 741.6 847 741 846.5 739 846 739.6 845.5 739.9 845 740 844.5 737.7 844 738.8 843.5 738.9 843 738.6 842.5 738 842 735.5 841.5 737.7 841 734.9 840.5 737.4 840 735 839.5 738.1 839 737.7 838.5 734.5 838 734.3 837.5 737 837 734.2 836.5 735.5 836 735.8 835.5 734.7 835 737.8 834.5 734.7 834 734.8 833.5 732.8 833 733.5 832.5 740.1 832 735 831.5 735.1 831 736.4 830.5 738.4 830 740.8 829.5 739.1 829 738 828.5 743.4 828 737.3 827.5 740 827 740.5 826.5 744.7 826 741.5 825.5 741 825 738.9 824.5 739.1 824 744.3 823.5 738.6 823 738.7 822.5 740.5 822 739.7 821.5 741.5 821 739.6 820.5 742.1 820 739 819.5 739.5 819 740.6 818.5 739 818 737.4 817.5 739.6 817 740.8 816.5 737.3 816 739.8 815.5 739.3 815 739.7 814.5 738.4 814 739 813.5 738.6 813 736.9 812.5 735.3 812 736.1 811.5 733.8 811 737.8 810.5 735.1 810 734.6 809.5 738.2 809 734.6 808.5 739.1 808 736.2 807.5 735.6 807 737.5 806.5 738.1 806 735 805.5 736.2 805 734.5 804.5 733.8 804 729.2 803.5 729.2 803 726.8 802.5 724.1 802 722.9 801.5 722.5 801 720.5 800.5 721.7 800 720.6 799.5 721 799 720.2 798.5 718.5 798 715.6 797.5 711.4 797 708.8 796.5 709 796 708.9 795.5 708.8 795 709.6 794.5 707.1 794 703.2 793.5 700.6 793 698.1 792.5 696.5 792 694.8 791.5 696.1 791 696.3 790.5 696 790 697.1 789.5 697.6 789 697.6 788.5 697.8 788 698.3 787.5 698.5 787 698 786.5 698 786 698.6 785.5 697.9 785 698.4 784.5 695.9 784 694.2 783.5 692.9 783 692.4 782.5 692.4 782 692.8 781.5 696.3 781 708.9 780.5 696.3 780 694.1 779.5 704.8 779 694.1 778.5 693.4 778 692.7 777.5 692.9 777 693.1 776.5 691.9 776 691.1 775.5 690.5 775 689.6 774.5 688.6 774 687.3 773.5 686.8 773 686.1 772.5 685.7 772 685.2 771.5 684.8 771 684.4 770.5 683.8 770 683.7 769.5 683.6 769 683.5 768.5 683.4 768 683.3 767.5 683.2 767 682.5 766.5 682.5 766 682.4 765.5 682.4 765 682.5 764.5 682.4 764 682.5 763.5 682.4 763 682.5 762.5 682.5 762 682.5 761.5 682.4 761 682.5 760.5 682.5 760 682.5 759.5 682.4 759 682.5 758.5 682.5 758 682.5 757.5 682.4 757 682.4 756.5 682.5 756 682.4 755.5 682.4 755 682.5 754.5 682.5 754 682.4 753.5 682.5 753 682.4 752.5 682.4 752 682.5 751.5 682.5 751 682.4 750.5 682.4 750 682.5 749.5 682.4 749 682.4 748.5 682.5 748 682.4 747.5 682.5 747 682.4 746.5 682.4 746 682.4 745.5 682.4 745 682.4 744.5 682.5 744 682.4 743.5 682.4 743 682.4 742.5 682.4 742 682.5 741.5 682.5 741 682.5 740.5 682.5 740 682.4 739.5 682.4 739 682.4 738.5 682.5 738 682.5 737.5 682.4 737 682.4 736.5 682.5 736 682.4 735.5 682.5 735 682.5 734.5 682.5 734 682.5 733.5 682.5 733 682.5 732.5 682.4 732 682.4 731.5 682.4 731 682.4 730.5 682.5 730 682.5 729.5 682.4 729 682.4 728.5 682.4 728 682.5 727.5 682.5 727 682.4 726.5 682.4 726 682.4 725.5 682.4 725 682.4 724.5 682.4 724 682.5 723.5 682.4 723 682.5 722.5 682.4 722 682.5 721.5 682.4 721 682.5 720.5 682.4 720 682.5 719.5 682.5 719 682.5 718.5 683.3 718 683.2 717.5 683.3 717 683.3 716.5 683.3 716 683.5 715.5 683.5 715 683.6 714.5 683.6 714 683.8 713.5 683.8 713 683.9 712.5 684.2 712 684.4 711.5 684.6 711 684.8 710.5 685 710 685.3 709.5 685.7 709 686.1 708.5 686.1 708 686.6 707.5 687 707 687 706.5 687.2 706 687.6 705.5 688.2 705 687.8 704.5 688.5 704 688.8 703.5 690.1 703 691.3 702.5 692.9 702 695 701.5 697.3 701 698.3 700.5 700.8 700 702.1 699.5 706.3 699 708.6 698.5 711.4 698 714.5 697.5 718.5 697 720.9 696.5 721.4 696 725 695.5 727.8 695 729.4 694.5 729.8 694 734.1 693.5 734.9 693 738.1 692.5 738.1 692 739.3 691.5 741.9 691 745.2 690.5 741.7 690 741.5 689.5 740.9 689 740.1 688.5 741.8 688 742.9 687.5 744.7 687 745.3 686.5 745.6 686 744.6 685.5 752.7 685 746.7 684.5 748.3 684 751.1 683.5 749.6 683 753 682.5 751.5 682 749.2 681.5 749.6 681 750.8 680.5 755.4 680 755.6 679.5 753.8 679 752.3 678.5 753.4 678 757.9 677.5 755 677 756.3 676.5 753.3 676 757.2 675.5 755.9 675 758.6 674.5 755 674 755.6 673.5 756.4 673 753.2 672.5 752.4 672 753.9 671.5 754 671 756.1 670.5 754.6 670 754.1 669.5 754.9 669 757.3 668.5 755.6 668 756 667.5 753.8 667 756.1 666.5 758.3 666 758.1 665.5 754.4 665 756 664.5 757.6 664 757.2 663.5 756.7 663 755.2 662.5 755 662 758.3 661.5 756.7 661 759.2 660.5 760.5 660 761.8 659.5 757.4 659 759.4 658.5 758.1 658 755.6 657.5 753.7 657 755.5 656.5 755 656 755.2 655.5 756.5 655 756.1 654.5 754.8 654 754.5 653.5 750.6 653 750.4 652.5 750 652 750.7 651.5 752 651 751.5 650.5 752.5 650 746.4 649.5 750.1 649 747.9 648.5 745.9 648 744.1 647.5 743.7 647 740.8 646.5 741.1 646 742.2 645.5 743 645 738.8 644.5 738 644 735.6 643.5 737.8 643 736.1 642.5 733.7 642 732.9 641.5 731.9 641 729 640.5 728.4 640 727 639.5 725.4 639 725.9 638.5 721.2 638 720.7 637.5 718.3 637 718.7 636.5 715.3 636 713.2 635.5 712.1 635 710.9 634.5 709.2 634 707.7 633.5 706.7 633 705.4 632.5 705.3 632 702.9 631.5 702.7 631 701.1 630.5 700.3 630 698.3 629.5 697.8 629 696.6 628.5 695.5 628 694 627.5 693.6 627 692.2 626.5 692 626 691 625.5 689.8 625 689.2 624.5 688.1 624 687.3 623.5 686.9 623 686 622.5 685.5 622 684.9 621.5 684.4 621 684.1 620.5 683.7 620 683.5 619.5 682.4 619 682.5 618.5 683.2 618 683.4 617.5 683.5 617 683.6 616.5 683.6 616 683.8 615.5 687.9 615 693.5 614.5 687.9 614 685.3 613.5 685.1 613 684.7 612.5 684.2 612 684.1 611.5 684.6 611 685.3 610.5 686.3 610 685.6 609.5 685.3 609 684.7 608.5 684.2 608 683.8 607.5 683.3 607 682.5 606.5 682.2 606 682.2 605.5 682.2 605 682.2 604.5 682.2 604 682.3 603.5 682.3 603 682.2 602.5 682.3 602 682.2 601.5 682.2 601 682.3 600.5 682.2 600 682.2 599.5 682.2 599 682.2 598.5 682.2 598 682.2 597.5 682.3 597 682.2 596.5 682.2 596 682.2 595.5 682.2 595 682.3 594.5 682.2 594 682.3 593.5 682.2 593 682.2 592.5 682.2 592 682.3 591.5 682.2 591 682.2 590.5 682.3 590 682.3 589.5 682.3 589 682.3 588.5 682.2 588 682.2 587.5 682.2 587 682.2 586.5 682.2 586 682.2 585.5 682.2 585 682.2 584.5 682.2 584 682.2 583.5 682.2 583 682.2 582.5 682.3 582 682.3 581.5 682.2 581 682.3 580.5 682.2 580 682.3 579.5 682.3 579 682.2 578.5 682.2 578 682.3 577.5 682.2 577 682.3 576.5 682.2 576 682.2 575.5 682.2 575 682.2 574.5 682.2 574 682.2 573.5 682.2 573 682.2 572.5 682.2 572 682.1 571.5 682.2 571 682.1 570.5 682.1 570 682.1 569.5 682.2 569 682 568.5 682.1 568 682 567.5 682.1 567 682.1 566.5 682.1 566 682 565.5 682 565 682 564.5 682 564 682 563.5 682 563 682 562.5 682 562 682 561.5 682 561 681.9 560.5 681.9 560 681.9 559.5 681.8 559 681.9 558.5 681.9 558 681.9 557.5 682 557 682 556.5 682 556 681.9 555.5 682 555 682 554.5 682 554 682.1 553.5 682 553 682 552.5 682 552 682.1 551.5 682.2 551 682.2 550.5 682.1 550 682.2 549.5 682.2 549 682.1 548.5 682.2 548 682.2 547.5 682.2 547 682.2 546.5 682.2 546 682.3 545.5 682.3 545 682.2 544.5 682.3 544 682.4 543.5 682.3 543 682.4 542.5 682.4 542 682.4 541.5 682.4 541 682.5 540.5 682.4 540 682.4 539.5 682.6 539 683.1 538.5 683.3 538 683.4 537.5 683.4 537 683.6 536.5 683.6 536 683.9 535.5 684 535 684.1 534.5 684.1 534 684.2 533.5 684.3 533 684.5 532.5 684.4 532 684.5 531.5 684.7 531 684.7 530.5 685 530 685 529.5 685.1 529 685.4 528.5 685.5 528 685.5 527.5 685.5 527 685.7 526.5 686.3 526 686 525.5 686.2 525 686.5 524.5 686.7 524 686.8 523.5 687.1 523 687.3 522.5 687.5 522 687.8 521.5 688.2 521 688.2 520.5 688.6 520 688.9 519.5 689.3 519 689.3 518.5 689.6 518 690.3 517.5 690.3 517 690.9 516.5 690.5 516 690.5 515.5 691.2 515 691.1 514.5 691 514 691.5 513.5 691.5 513 691.1 512.5 691.2 512 691.7 511.5 691.9 511 691.7 510.5 692.1 510 691.5 509.5 692 509 691.7 508.5 691.9 508 692.2 507.5 691.8 507 692.6 506.5 692.5 506 692.9 505.5 692.7 505 693 504.5 693 504 693.9 503.5 694.2 503 694.3 502.5 694.5 502 694.8 501.5 695.2 501 694.4 500.5 694.6 500 695.3 499.5 695.6 499 694.9 498.5 695.4 498 696 497.5 696.6 497 695.8 496.5 696.8 496 696.6 495.5 695.7 495 695.6 494.5 695.2 494 695.7 493.5 695.1 493 695.3 492.5 695.3 492 695.2 491.5 695.7 491 696.4 490.5 696.1 490 696.8 489.5 696.5 489 696.7 488.5 697.7 488 698.6 487.5 698 487 699.7 486.5 699 486 699.6 485.5 698.8 485 699.6 484.5 700.2 484 700.7 483.5 700.8 483 700.5 482.5 699.8 482 700.9 481.5 700.4 481 700 480.5 699.5 480 699.1 479.5 699.3 479 700 478.5 700.1 478 699.4 477.5 700.1 477 699.9 476.5 701 476 699.9 475.5 700.5 475 699.8 474.5 700.3 474 700.9 473.5 700.6 473 700.8 472.5 701.5 472 700.6 471.5 702 471 701.4 470.5 701.7 470 703 469.5 701.8 469 702 468.5 703.3 468 702.2 467.5 703.2 467 703.3 466.5 703 466 703.7 465.5 702.5 465 703.4 464.5 704.3 464 704.2 463.5 703.4 463 703.5 462.5 703.6 462 704.3 461.5 704.1 461 703.7 460.5 703.3 460 705.1 459.5 704.3 459 704.9 458.5 705 458 706 457.5 704.5 457 705.9 456.5 707.5 456 705.8 455.5 706.7 455 707.1 454.5 706.7 454 706.4 453.5 707.3 453 707.4 452.5 708 452 708 451.5 707.1 451 708.6 450.5 710.8 450 708.2 449.5 708.3 449 710.5 448.5 707.3 448 706.7 447.5 706.7 447 706 446.5 704.9 446 706.4 445.5 706.8 445 707.5 444.5 707.3 444 707.2 443.5 707.6 443 708 442.5 709.5 442 709.5 441.5 711.1 441 712.9 440.5 710.5 440 710.7 439.5 712.7 439 711.9 438.5 712.7 438 712.1 437.5 712.7 437 714.4 436.5 713.1 436 714.7 435.5 713.7 435 715.6 434.5 713.7 434 714 433.5 714.9 433 716.3 432.5 717.3 432 717.9 431.5 719.1 431 717.3 430.5 721.5 430 720 429.5 720.5 429 719.8 428.5 721.1 428 721.4 427.5 721.1 427 722.2 426.5 720.6 426 722.2 425.5 723.4 425 722.7 424.5 721.4 424 723.6 423.5 722.7 423 724.5 422.5 723.1 422 726.2 421.5 724.3 421 723.7 420.5 723.2 420 725.6 419.5 724.3 419 724.9 418.5 726.1 418 725.6 417.5 726.2 417 724.9 416.5 724.7 416 725.2 415.5 724 415 725.9 414.5 724.3 414 725.2 413.5 724.1 413 723.3 412.5 722.6 412 721.3 411.5 720.1 411 722.4 410.5 720.7 410 720.3 409.5 720.6 409 722.8 408.5 721.9 408 721.3 407.5 722.5 407 726.2 406.5 724.1 406 722 405.5 719.6 405 721.2 404.5 721.2 404 721.2 403.5 724.2 403 720.8 402.5 721.9 402 724 401.5 724.3 401 722.7 400.5 723.2 400 725.3 399.5 724.4 399 726.6 398.5 725.4 398 727.5 397.5 724.5 397 726 396.5 727.8 396 727.8 395.5 726.9 395 726.5 394.5 727.6 394 726.3 393.5 728.2 393 727.2 392.5 728 392 727.9 391.5 727.6 391 725.6 390.5 726.8 390 727.6 389.5 729.9 389 733.6 388.5 732.7 388 733.6 387.5 732.9 387 736.5 386.5 735.2 386 734.4 385.5 736.2 385 736.2 384.5 736.2 384 736.2 383.5 733.9 383 735.4 382.5 737.8 382 732.3 381.5 731 381 732.2 380.5 729.3 380 727.6 379.5 729.7 379 732.8 378.5 732.2 378 734.5 377.5 735.7 377 736.9 376.5 737.9 376 737 375.5 737.9 375 737 374.5 742.3 374 738.3 373.5 739.4 373 741 372.5 741.6 372 740.7 371.5 738.9 371 738.6 370.5 743 370 743.7 369.5 742.6 369 742.6 368.5 741.2 368 743.3 367.5 740.6 367 744 366.5 742.2 366 740.6 365.5 744.5 365 741.9 364.5 742.1 364 742.3 363.5 742.2 363 745.8 362.5 742.6 362 743.3 361.5 743.7 361 745.1 360.5 743.2 360 742.1 359.5 742.8 359 743.3 358.5 742 358 744.8 357.5 742.9 357 742.8 356.5 744.9 356 747.2 355.5 744.1 355 744.6 354.5 744.6 354 746.3 353.5 744.7 353 747.5 352.5 745.5 352 744.6 351.5 742.8 351 745.3 350.5 745.4 350 744 349.5 744.8 349 744.1 348.5 742.9 348 745 347.5 742.2 347 744.3 346.5 744.3 346 743.8 345.5 743.8 345 747.2 344.5 746 344 744.2 343.5 747.9 343 747.6 342.5 744.8 342 745.9 341.5 744.3 341 744.9 340.5 746.5 340 745.5 339.5 746.3 339 745.8 338.5 742 338 743.3 337.5 742.5 337 743.7 336.5 742.9 336 742.4 335.5 743 335 743.3 334.5 742.3 334 742.3 333.5 739.9 333 742.5 332.5 740.4 332 742.5 331.5 740.2 331 741.5 330.5 739.3 330 740.4 329.5 742.3 329 740.6 328.5 743.6 328 741.4 327.5 740.8 327 741.7 326.5 741.1 326 744.8 325.5 743.4 325 743.7 324.5 747.9 324 745 323.5 741 323 746.5 322.5 742.1 322 741.2 321.5 744.6 321 742.2 320.5 742.9 320 742.9 319.5 744.6 319 743.9 318.5 742.6 318 741.5 317.5 744.5 317 741.4 316.5 744.7 316 742.1 315.5 746.9 315 745.6 314.5 743 314 745 313.5 743.3 313 743 312.5 742.1 312 745.3 311.5 744.8 311 747.2 310.5 744.7 310 743.2 309.5 743 309 743.2 308.5 742.4 308 740.6 307.5 743.6 307 747.3 306.5 747 306 744.4 305.5 741.1 305 743 304.5 740.6 304 740.9 303.5 740.9 303 740.9 302.5 744.4 302 743.8 301.5 743.9 301 740.7 300.5 741 300 743.2 299.5 741 299 741 298.5 742.5 298 743.1 297.5 742.2 297 745 296.5 738.5 296 740.5 295.5 738.3 295 735.7 294.5 736.1 294 735.2 293.5 736.3 293 736.6 292.5 736.2 292 734.5 291.5 732.2 291 734 290.5 731.9 290 734.9 289.5 733.3 289 732.9 288.5 735.8 288 735.6 287.5 735.9 287 734.9 286.5 737 286 735.7 285.5 736.4 285 735.9 284.5 733.7 284 735.1 283.5 736.5 283 734.7 282.5 735.5 282 734.3 281.5 733.1 281 735.9 280.5 734 280 731.6 279.5 731.8 279 730.5 278.5 734.8 278 733.1 277.5 728.2 277 729.9 276.5 725.8 276 725 275.5 722.3 275 721.9 274.5 724.9 274 726.9 273.5 724.8 273 728.4 272.5 729 272 720.8 271.5 717.1 271 714.2 270.5 715.2 270 715.2 269.5 715.7 269 716.8 268.5 715.9 268 711.1 267.5 708.4 267 706.2 266.5 704.1 266 704.2 265.5 707.4 265 708.8 264.5 711.7 264 715.1 263.5 714.4 263 713.7 262.5 712.5 262 710.8 261.5 712.3 261 715.9 260.5 719.1 260 722.6 259.5 723.5 259 724.4 258.5 727.5 258 727.3 257.5 729.2 257 729.6 256.5 730.6 256 734.7 255.5 724 255 719.6 254.5 712.4 254 707.7 253.5 707.6 253 711.9 252.5 737.1 252 711.9 251.5 704.7 251 703.4 250.5 702.8 250 703 249.5 711.2 249 707.5 248.5 709.4 248 711.8 247.5 714.6 247 714.1 246.5 715.3 246 713.1 245.5 713.8 245 712.5 244.5 710.9 244 710.6 243.5 721.8 243 708.5 242.5 707.2 242 705.9 241.5 704.5 241 704.2 240.5 703.3 240 702.4 239.5 708.3 239 730.6 238.5 708.3 238 701.1 237.5 700.1 237 699.9 236.5 699.8 236 699.9 235.5 699.8 235 700.7 234.5 699.9 234 700.9 233.5 701.8 233 699.8 232.5 699.3 232 697.7 231.5 697.1 231 696.3 230.5 695.7 230 695.1 229.5 693.2 229 691.1 228.5 689.2 228 687.5 227.5 685.4 227 684.3 226.5 684.1 226 683.8 225.5 683.5 225 682.4 224.5 682.4 224 682.4 223.5 682.4 223 682.4 222.5 682.3 222 682.3 221.5 682.4 221 682.4 220.5 682.4 220 682.3 219.5 682.3 219 682.3 218.5 682.3 218 682.3 217.5 682.3 217 682.2 216.5 682.2 216 682.3 215.5 682.3 215 682.2 214.5 682.2 214 682.3 213.5 682.1 213 682.1 212.5 682.2 212 682.2 211.5 682.2 211 682.1 210.5 682.1 210 682.2 209.5 682.1 209 682.3 208.5 682.2 208 682.1 207.5 682.2 207 682.2 206.5 682.1 206 682.2 205.5 682.2 205 682.1 204.5 682.2 204 682.1 203.5 682.1 203 682.1 202.5 682.1 202 682.2 201.5 682.1 201 682.2 200.5 682.1 200 682.1 199.5 682.1 199 682.1 198.5 682.2 198 682.1 197.5 682.2 197 682.2 196.5 682.2 196 682.2 195.5 682.3 195 682.4 194.5 682.3 194 682.3 193.5 682.4 193 682.4 192.5 682.4 192 682.5 191.5 682.4 191 682.4 190.5 682.4 190 683.1 189.5 683.2 189 683.4 188.5 683.4 188 683.6 187.5 683.7 187 683.7 186.5 683.8 186 684 185.5 684.1 185 684.2 184.5 684.3 184 684.3 183.5 684.5 183 684.5 182.5 684.8 182 684.6 181.5 684.9 181 685 180.5 685 180 685.1 179.5 685.1 179 685.2 178.5 685.4 178 685.4 177.5 685.4 177 685.5 176.5 685.3 176 685.5 175.5 685.7 175 685.4 174.5 685.5 174 685.3 173.5 685.5 173 685.7 172.5 686 172 690.9 171.5 695.8 171 702 170.5 708.6 170 714.6 169.5 716.7 169 722.8 168.5 728.3 168 730.1 167.5 734.3 167 742.6 166.5 743.4 166 745.2 165.5 747 165 745.3 164.5 746.7 164 748 163.5 751.5 163 750.9 162.5 752.1 162 752.9 161.5 749.8 161 752.3 160.5 747.9 160 751.4 159.5 753.3 159 749.5 158.5 750.2 158 750.3 157.5 747.5 157 750.6 156.5 750 156 752.2 155.5 749.3 155 751.8 154.5 755.2 154 749.4 153.5 751.6 153 752.2 152.5 749.2 152 751.1 151.5 748.6 151 751.9 150.5 751.9 150 748.4 149.5 750.1 149 752.2 148.5 749.7 148 752.3 147.5 751 147 752 146.5 751.7 146 749.9 145.5 748.8 145 752.3 144.5 752.3 144 751.8 143.5 751.5 143 748.9 142.5 749.5 142 752.9 141.5 750.9 141 750.9 140.5 746.9 140 747.7 139.5 745.3 139 749.5 138.5 747.9 138 748.8 137.5 752 137 746.7 136.5 749.9 136 748.8 135.5 750.1 135 750 134.5 748.6 134 751.7 133.5 748.3 133 745.9 132.5 748.3 132 748.6 131.5 745.1 131 748.7 130.5 748.1 130 746.7 129.5 748.6 129 746.7 128.5 745.8 128 746.5 127.5 745.8 127 746.5 126.5 745.7 126 745.7 125.5 748.3 125 745.3 124.5 744.3 124 747.3 123.5 747.1 123 746.1 122.5 748.1 122 747.1 121.5 748.4 121 746.2 120.5 742.2 120 743.7 119.5 743.1 119 740.2 118.5 741.9 118 742.3 117.5 742.2 117 743.7 116.5 741.7 116 741.4 115.5 741.6 115 741.8 114.5 748.6 114 744.8 113.5 747.4 113 743.9 112.5 746 112 746.6 111.5 743.4 111 746.9 110.5 747.5 110 745.3 109.5 745.5 109 747.4 108.5 746.7 108 743.6 107.5 744.6 107 743.8 106.5 744.3 106 743.9 105.5 743.5 105 740.8 104.5 740.6 104 742.5 103.5 740.6 103 741.3 102.5 741.2 102 740.1 101.5 738.6 101 738.8 100.5 734.8 100 736.9 99.5 735.1 99 734.2 98.5 731.9 98 733.3 97.5 728.9 97 729.7 96.5 727.5 96 728.5 95.5 728.5 95 728.6 94.5 730.2 94 730.9 93.5 732.6 93 730.6 92.5 734.1 92 732.6 91.5 731.9 91 731.7 90.5 732.3 90 731.8 89.5 734.5 89 736.3 88.5 734.5 88 730.8 87.5 731.2 87 733.1 86.5 729.9 86 730.2 85.5 728.9 85 727 84.5 726.2 84 727.5 83.5 723.8 83 724.9 82.5 723.2 82 721.9 81.5 718.3 81 718.5 80.5 715.4 80 714 79.5 711.2 79 709.3 78.5 709.1 78 707.1 77.5 706.7 77 704.8 76.5 702.7 76 702.3 75.5 699.9 75 700.7Z" fill="#008000" stroke="#008000" stroke-width="0.6" stroke-linejoin="round"/></g><!--/wave-->
  <g class="pt" font-size="12" text-anchor="middle">
    <text x="75.200" y="782.800">0</text><text x="272.900" y="782.800">0.5</text><text x="470.600" y="782.800">1</text><text x="668.300" y="782.800">1.5</text><text x="866" y="782.800">2</text>
  </g>
  <g class="pt" font-size="12" text-anchor="end">
    <text x="74.300" y="622.300">0.5</text><text x="74.300" y="685.600">0</text><text x="74.300" y="748.500">−0.5</text>
  </g>
  <text class="pt" font-size="16" text-anchor="middle" x="541.500" y="599.500">Waveform</text>
  <text class="pt" font-size="14" text-anchor="middle" x="541.900" y="810" letter-spacing="0.35">Time, s</text>
  <text class="pt" font-size="14" text-anchor="middle" transform="translate(34,687.800) rotate(-90)">Amplitude</text>

  <!-- spectrogram -->
  <g id="spec"><defs><clipPath id="spc"><rect x="75" y="879" width="933" height="165"/></clipPath></defs><g clip-path="url(#spc)"><rect x="75" y="879" width="933" height="165" fill="#1e7373"/><g transform="translate(75,879.5) scale(3.95339,1)" shape-rendering="crispEdges" fill="none" stroke-width="1"><path stroke="#1e4545" d="M34 0h4M124 0h10M165 0h10M36 1h2M125 1h9M169 1h6M37 2h1M125 2h9M173 2h2M125 3h9M125 4h9M126 5h7M126 6h7M128 7h4M130 8h2"/><path stroke="#1e4848" d="M26 0h8M115 0h9M160 0h5M26 1h10M115 1h10M160 1h9M26 2h11M115 2h10M160 2h13M26 3h12M116 3h6M123 3h2M160 3h15M26 4h12M116 4h5M123 4h2M160 4h15M27 5h11M117 5h3M123 5h3M133 5h1M160 5h15M29 6h9M117 6h2M124 6h2M133 6h1M160 6h15M31 7h7M124 7h4M132 7h2M160 7h15M33 8h5M124 8h6M132 8h2M162 8h13M34 9h4M124 9h10M164 9h11M34 10h4M124 10h10M166 10h9M35 11h3M124 11h10M167 11h8M35 12h3M124 12h10M168 12h7M36 13h2M125 13h9M169 13h6M36 14h2M125 14h9M171 14h4M37 15h1M125 15h9M172 15h3M37 16h1M125 16h9M173 16h2M125 17h9M174 17h1M125 18h9M125 19h9M125 20h9M125 21h9M125 22h9M125 23h9M125 24h9M125 25h9M125 26h9M125 27h9M125 28h9M125 29h8M126 30h7M126 31h7M126 32h7M126 33h7M126 34h7M126 35h7M126 36h7M126 37h7M126 38h7M126 39h7M126 40h7M126 41h7M126 42h7M126 43h7M126 44h7M126 45h7M126 46h7M126 47h7M126 48h7M126 49h7M126 50h7M126 51h7M127 52h5M128 53h4M129 54h3M130 55h2M131 56h1"/><path stroke="#1e4b4b" d="M25 0h1M113 0h2M25 1h1M113 1h2M25 2h1M113 2h2M25 3h1M114 3h2M122 3h1M25 4h1M114 4h2M121 4h2M25 5h2M114 5h3M120 5h3M25 6h4M114 6h3M119 6h5M25 7h6M114 7h10M25 8h8M115 8h9M160 8h2M26 9h8M115 9h9M160 9h4M26 10h8M115 10h9M160 10h6M26 11h9M115 11h9M160 11h7M26 12h9M115 12h9M160 12h8M26 13h10M115 13h10M160 13h9M26 14h10M115 14h10M160 14h11M26 15h11M115 15h10M160 15h12M26 16h11M115 16h10M160 16h13M26 17h12M115 17h10M160 17h14M26 18h12M116 18h9M160 18h15M26 19h12M116 19h6M123 19h2M160 19h15M26 20h12M116 20h6M123 20h2M160 20h15M26 21h12M116 21h6M123 21h2M160 21h15M26 22h12M116 22h6M123 22h2M160 22h15M26 23h12M116 23h6M123 23h2M160 23h15M26 24h12M117 24h4M123 24h2M160 24h15M26 25h12M117 25h3M123 25h2M160 25h15M26 26h12M123 26h2M160 26h15M26 27h12M123 27h2M160 27h15M26 28h12M123 28h2M160 28h15M26 29h12M123 29h2M133 29h1M160 29h15M26 30h12M123 30h3M133 30h1M160 30h15M27 31h11M123 31h3M133 31h1M160 31h15M27 32h11M123 32h3M133 32h1M160 32h15M27 33h11M123 33h3M133 33h1M160 33h15M27 34h11M123 34h3M133 34h1M160 34h15M27 35h11M123 35h3M133 35h1M160 35h15M27 36h11M123 36h3M133 36h1M160 36h15M28 37h10M123 37h3M133 37h1M160 37h15M29 38h9M123 38h3M133 38h1M160 38h15M28 39h10M123 39h3M133 39h1M160 39h15M28 40h10M123 40h3M133 40h1M160 40h15M28 41h10M123 41h3M133 41h1M160 41h15M28 42h10M123 42h3M133 42h1M160 42h15M29 43h9M123 43h3M133 43h1M160 43h15M29 44h9M123 44h3M133 44h1M160 44h15M31 45h7M124 45h2M133 45h1M160 45h15M30 46h8M124 46h2M133 46h1M160 46h15M29 47h9M124 47h2M133 47h1M160 47h15M30 48h8M124 48h2M133 48h1M160 48h15M30 49h8M124 49h2M133 49h1M160 49h15M30 50h8M124 50h2M133 50h1M160 50h15M31 51h7M124 51h2M133 51h1M160 51h15M33 52h5M124 52h3M132 52h2M160 52h15M33 53h5M124 53h4M132 53h2M160 53h15M32 54h6M124 54h5M132 54h2M160 54h15M32 55h6M124 55h6M132 55h2M162 55h13M33 56h5M124 56h7M132 56h2M163 56h12M34 57h4M124 57h10M165 57h10M35 58h3M124 58h10M166 58h9M37 59h1M124 59h10M167 59h8M36 60h2M125 60h9M169 60h6M36 61h2M125 61h9M170 61h5M37 62h1M125 62h9M172 62h3M125 63h9M174 63h1M125 64h9M125 65h9M125 66h9M126 67h7M126 68h7M126 69h7M126 70h7M126 71h7M127 72h5M128 73h4M130 74h2M131 75h1"/><path stroke="#1e4e4e" d="M109 0h4M110 1h3M110 2h3M111 3h3M111 4h3M112 5h2M112 6h2M112 7h2M113 8h2M25 9h1M113 9h2M25 10h1M113 10h2M25 11h1M113 11h2M25 12h1M113 12h2M25 13h1M113 13h2M25 14h1M113 14h2M25 15h1M113 15h2M25 16h1M113 16h2M25 17h1M113 17h2M25 18h1M113 18h3M25 19h1M113 19h3M122 19h1M25 20h1M114 20h2M122 20h1M25 21h1M114 21h2M122 21h1M25 22h1M114 22h2M122 22h1M25 23h1M114 23h2M122 23h1M114 24h3M121 24h2M25 25h1M115 25h2M120 25h3M25 26h1M115 26h8M25 27h1M116 27h7M25 28h1M116 28h7M25 29h1M116 29h7M25 30h1M117 30h6M26 31h1M117 31h6M26 32h1M118 32h5M25 33h2M118 33h5M25 34h2M118 34h5M25 35h2M118 35h5M25 36h2M118 36h5M25 37h3M118 37h5M26 38h3M118 38h5M26 39h2M118 39h5M25 40h3M119 40h4M25 41h3M119 41h4M25 42h3M119 42h4M25 43h4M119 43h4M26 44h3M119 44h4M26 45h5M119 45h5M26 46h4M119 46h5M25 47h4M119 47h5M25 48h5M119 48h5M25 49h5M119 49h5M25 50h5M119 50h5M26 51h5M119 51h5M28 52h5M119 52h5M27 53h6M120 53h4M26 54h6M120 54h4M26 55h6M120 55h4M160 55h2M26 56h7M120 56h4M160 56h3M26 57h8M121 57h3M160 57h5M27 58h8M121 58h3M160 58h6M30 59h7M121 59h3M160 59h7M29 60h7M122 60h3M160 60h9M26 61h10M122 61h3M160 61h10M26 62h11M122 62h3M160 62h12M26 63h12M123 63h2M160 63h14M26 64h12M123 64h2M160 64h15M29 65h9M123 65h2M160 65h15M32 66h6M123 66h2M160 66h15M31 67h7M123 67h3M133 67h1M160 67h15M27 68h11M123 68h3M133 68h1M160 68h15M28 69h10M123 69h3M133 69h1M160 69h15M29 70h9M123 70h3M133 70h1M161 70h14M30 71h8M124 71h2M133 71h1M161 71h14M32 72h6M124 72h3M132 72h2M160 72h15M35 73h3M124 73h4M132 73h2M160 73h15M34 74h4M124 74h6M132 74h2M161 74h14M33 75h5M124 75h7M132 75h2M163 75h12M34 76h4M124 76h10M165 76h10M35 77h3M124 77h10M168 77h7M36 78h2M125 78h9M170 78h5M37 79h1M125 79h9M172 79h3M125 80h9M174 80h1M125 81h9M125 82h9M126 83h7M126 84h7M128 85h4M131 86h1M27 164h11M126 164h8M160 164h15"/><path stroke="#1e5252" d="M0 0h3M106 0h3M159 0h1M0 1h2M106 1h4M159 1h1M0 2h2M107 2h3M159 2h1M0 3h2M107 3h4M159 3h1M0 4h2M107 4h4M159 4h1M0 5h1M108 5h4M159 5h1M0 6h1M108 6h4M159 6h1M0 7h1M109 7h3M159 7h1M109 8h4M109 9h4M110 10h3M110 11h3M110 12h3M110 13h3M110 14h3M110 15h3M110 16h3M110 17h3M110 18h3M111 19h2M111 20h3M111 21h3M111 22h3M111 23h3M25 24h1M112 24h2M113 25h2M113 26h2M113 27h3M114 28h2M114 29h2M115 30h2M25 31h1M115 31h2M25 32h1M115 32h3M116 33h2M116 34h2M116 35h2M116 36h2M116 37h2M25 38h1M116 38h2M25 39h1M116 39h2M116 40h3M116 41h3M116 42h3M116 43h3M25 44h1M116 44h3M116 45h3M116 46h3M116 47h3M116 48h3M116 49h3M116 50h3M116 51h3M26 52h2M116 52h3M26 53h1M116 53h4M25 54h1M117 54h3M25 55h1M117 55h3M25 56h1M117 56h3M25 57h1M117 57h4M26 58h1M117 58h4M28 59h2M117 59h4M27 60h2M117 60h5M25 61h1M117 61h5M25 62h1M117 62h5M25 63h1M117 63h6M25 64h1M117 64h6M26 65h3M117 65h6M29 66h3M118 66h5M27 67h4M118 67h5M26 68h1M118 68h5M25 69h3M113 69h3M118 69h5M25 70h4M112 70h4M119 70h4M160 70h1M25 71h5M111 71h6M119 71h5M160 71h1M27 72h5M112 72h4M119 72h5M30 73h5M112 73h4M120 73h4M29 74h5M112 74h4M120 74h4M160 74h1M26 75h7M112 75h4M121 75h3M160 75h3M26 76h8M112 76h4M121 76h3M160 76h5M26 77h9M113 77h2M121 77h3M161 77h7M26 78h10M113 78h2M122 78h3M161 78h9M28 79h9M113 79h1M122 79h3M160 79h12M31 80h7M123 80h2M160 80h14M30 81h8M123 81h2M160 81h15M26 82h12M123 82h2M160 82h15M26 83h12M123 83h3M133 83h1M160 83h15M27 84h11M123 84h3M133 84h1M161 84h14M28 85h10M124 85h4M132 85h2M164 85h11M32 86h6M124 86h7M132 86h2M161 86h14M35 87h3M124 87h10M160 87h15M34 88h4M124 88h10M162 88h13M34 89h4M125 89h9M165 89h10M35 90h3M125 90h9M168 90h7M37 91h1M126 91h8M172 91h3M129 92h4M28 163h10M127 163h7M160 163h15M25 164h2M122 164h4"/><path stroke="#1e5555" d="M3 0h1M38 0h1M104 0h2M2 1h2M38 1h1M104 1h2M2 2h2M38 2h1M104 2h3M2 3h2M38 3h1M104 3h3M2 4h2M38 4h1M104 4h3M1 5h3M38 5h1M105 5h3M1 6h2M105 6h3M1 7h2M105 7h4M0 8h3M106 8h3M159 8h1M0 9h3M106 9h3M159 9h1M0 10h3M106 10h4M159 10h1M0 11h3M106 11h4M159 11h1M0 12h2M106 12h4M159 12h1M0 13h2M106 13h4M159 13h1M0 14h2M106 14h4M159 14h1M0 15h2M106 15h4M159 15h1M0 16h2M107 16h3M159 16h1M0 17h2M107 17h3M159 17h1M0 18h2M107 18h3M159 18h1M0 19h2M107 19h4M159 19h1M0 20h2M107 20h4M159 20h1M0 21h2M107 21h4M159 21h1M0 22h2M107 22h4M159 22h1M0 23h2M108 23h3M159 23h1M0 24h2M108 24h4M159 24h1M0 25h2M109 25h4M159 25h1M0 26h2M110 26h3M159 26h1M0 27h2M111 27h2M159 27h1M0 28h1M111 28h3M159 28h1M0 29h1M112 29h2M159 29h1M0 30h1M113 30h2M159 30h1M0 31h1M113 31h2M159 31h1M0 32h1M114 32h1M159 32h1M0 33h1M114 33h2M159 33h1M0 34h1M114 34h2M159 34h1M0 35h1M114 35h2M159 35h1M0 36h1M114 36h2M159 36h1M0 37h1M114 37h2M159 37h1M0 38h1M114 38h2M159 38h1M0 39h1M114 39h2M159 39h1M0 40h1M114 40h2M159 40h1M0 41h1M114 41h2M159 41h1M0 42h1M114 42h2M159 42h1M0 43h1M114 43h2M159 43h1M0 44h1M114 44h2M159 44h1M0 45h1M114 45h2M159 45h1M0 46h1M25 46h1M114 46h2M159 46h1M114 47h2M159 47h1M114 48h2M114 49h2M114 50h2M159 50h1M25 51h1M114 51h2M159 51h1M114 52h2M159 52h1M114 53h2M159 53h1M115 54h2M115 55h2M115 56h2M115 57h2M115 58h2M27 59h1M115 59h2M26 60h1M115 60h2M115 61h2M115 62h2M115 63h2M115 64h2M115 65h2M27 66h2M114 66h4M26 67h1M113 67h5M25 68h1M111 68h7M110 69h3M116 69h2M109 70h3M116 70h3M108 71h3M117 71h2M26 72h1M108 72h4M116 72h3M28 73h2M108 73h4M116 73h4M26 74h3M108 74h4M116 74h4M25 75h1M109 75h3M116 75h5M25 76h1M109 76h3M116 76h5M25 77h1M109 77h4M115 77h6M160 77h1M25 78h1M109 78h4M115 78h7M160 78h1M26 79h2M110 79h3M114 79h8M29 80h2M113 80h3M118 80h5M27 81h3M119 81h4M25 82h1M120 82h3M25 83h1M121 83h2M25 84h2M121 84h2M160 84h1M25 85h3M122 85h2M161 85h3M27 86h5M122 86h2M160 86h1M30 87h5M122 87h2M28 88h6M123 88h1M160 88h2M26 89h8M123 89h2M160 89h5M26 90h9M123 90h2M160 90h8M26 91h11M123 91h3M161 91h11M26 92h12M123 92h6M133 92h1M163 92h12M31 93h7M123 93h11M161 93h14M37 94h1M124 94h10M160 94h15M35 95h3M124 95h10M160 95h15M30 96h8M124 96h10M160 96h15M30 97h8M125 97h9M160 97h15M31 98h7M126 98h8M163 98h12M33 99h5M130 99h4M168 99h7M37 100h1M171 100h4M170 101h5M172 102h3M25 163h3M122 163h5M118 164h4M159 164h1"/><path stroke="#1e5858" d="M4 0h1M102 0h2M138 0h3M231 0h5M4 1h1M102 1h2M139 1h2M232 1h4M4 2h1M102 2h2M139 2h1M233 2h3M4 3h1M103 3h1M139 3h1M234 3h2M4 4h1M103 4h1M235 4h1M4 5h1M103 5h2M235 5h1M3 6h1M38 6h1M103 6h2M3 7h1M38 7h1M103 7h2M3 8h1M38 8h1M104 8h2M3 9h1M38 9h1M104 9h2M3 10h1M38 10h1M104 10h2M3 11h1M38 11h1M104 11h2M2 12h2M38 12h1M104 12h2M2 13h2M38 13h1M104 13h2M2 14h2M38 14h1M104 14h2M2 15h2M38 15h1M104 15h2M2 16h2M38 16h1M104 16h3M2 17h2M38 17h1M104 17h3M2 18h2M38 18h1M104 18h3M2 19h2M38 19h1M104 19h3M2 20h2M38 20h1M104 20h3M2 21h2M38 21h1M104 21h3M2 22h2M38 22h1M104 22h3M2 23h2M38 23h1M104 23h4M2 24h2M38 24h1M105 24h3M2 25h2M38 25h1M105 25h4M2 26h2M38 26h1M106 26h4M2 27h2M38 27h1M107 27h4M1 28h3M38 28h1M108 28h3M1 29h3M38 29h1M108 29h4M1 30h3M38 30h1M109 30h4M1 31h3M38 31h1M110 31h3M1 32h3M38 32h1M111 32h3M1 33h2M38 33h1M111 33h3M1 34h2M38 34h1M111 34h3M1 35h2M38 35h1M111 35h3M1 36h2M38 36h1M111 36h3M1 37h2M38 37h1M112 37h2M1 38h2M38 38h1M112 38h2M1 39h2M38 39h1M112 39h2M1 40h2M38 40h1M112 40h2M1 41h2M38 41h1M112 41h2M1 42h2M112 42h2M1 43h2M112 43h2M1 44h1M112 44h2M1 45h1M25 45h1M112 45h2M1 46h1M112 46h2M0 47h2M112 47h2M0 48h2M112 48h2M159 48h1M0 49h2M112 49h2M159 49h1M0 50h2M112 50h2M0 51h1M112 51h2M0 52h1M112 52h2M0 53h1M112 53h2M0 54h1M113 54h2M159 54h1M0 55h1M113 55h2M159 55h1M0 56h1M113 56h2M0 57h1M113 57h2M159 57h1M25 58h1M113 58h2M159 58h1M26 59h1M113 59h2M159 59h1M113 60h2M159 60h1M113 61h2M159 61h1M113 62h2M113 63h2M113 64h2M112 65h3M159 65h1M26 66h1M111 66h3M159 66h1M109 67h4M159 67h1M108 68h3M159 68h1M106 69h4M105 70h4M105 71h3M105 72h3M27 73h1M105 73h3M159 73h1M105 74h3M105 75h4M105 76h4M105 77h4M106 78h3M107 79h3M27 80h2M109 80h4M116 80h2M26 81h1M112 81h7M113 82h7M118 83h3M118 84h3M119 85h3M26 86h1M120 86h2M28 87h2M120 87h2M26 88h2M121 88h2M25 89h1M121 89h2M25 90h1M121 90h2M25 91h1M121 91h2M160 91h1M121 92h2M161 92h2M29 93h2M122 93h1M33 94h4M122 94h2M31 95h4M122 95h2M26 96h4M122 96h2M26 97h4M122 97h3M26 98h5M123 98h3M161 98h2M26 99h7M123 99h7M163 99h5M31 100h6M123 100h11M163 100h8M36 101h2M123 101h11M160 101h10M32 102h6M123 102h11M160 102h12M27 103h11M124 103h10M160 103h15M27 104h11M124 104h10M160 104h15M27 105h11M124 105h10M161 105h14M28 106h10M126 106h8M166 106h9M31 107h7M128 107h6M170 107h5M34 108h4M131 108h3M162 108h13M33 109h5M133 109h1M160 109h15M33 110h5M162 110h13M34 111h4M165 111h10M35 112h3M169 112h6M37 113h1M172 113h3M31 162h7M133 162h1M160 162h15M118 163h4M159 163h1M0 164h2M38 164h1M113 164h5M138 164h4"/><path stroke="#1e5c5c" d="M5 0h1M100 0h2M141 0h2M229 0h2M5 1h1M100 1h2M138 1h1M141 1h2M229 1h3M5 2h1M100 2h2M138 2h1M140 2h3M229 2h4M5 3h1M100 3h3M138 3h1M140 3h2M229 3h5M101 4h2M138 4h4M230 4h5M101 5h2M138 5h4M230 5h5M4 6h1M101 6h2M138 6h4M230 6h6M4 7h1M101 7h2M138 7h4M230 7h6M4 8h1M102 8h2M138 8h4M230 8h6M4 9h1M102 9h2M138 9h3M231 9h5M4 10h1M102 10h2M138 10h3M231 10h5M4 11h1M102 11h2M139 11h2M231 11h5M4 12h1M102 12h2M139 12h2M232 12h4M4 13h1M102 13h2M139 13h2M232 13h4M4 14h1M102 14h2M139 14h2M232 14h4M4 15h1M102 15h2M139 15h2M233 15h3M4 16h1M102 16h2M139 16h1M233 16h3M4 17h1M102 17h2M139 17h1M233 17h3M4 18h1M102 18h2M139 18h1M233 18h3M4 19h1M103 19h1M139 19h1M234 19h2M4 20h1M103 20h1M139 20h1M234 20h2M4 21h1M103 21h1M139 21h1M234 21h2M4 22h1M103 22h1M139 22h1M234 22h2M4 23h1M103 23h1M139 23h1M234 23h2M4 24h1M103 24h2M139 24h1M234 24h2M4 25h1M103 25h2M139 25h1M235 25h1M4 26h1M104 26h2M139 26h1M234 26h2M4 27h1M104 27h3M139 27h1M234 27h2M4 28h1M105 28h3M234 28h2M4 29h1M105 29h3M235 29h1M106 30h3M235 30h1M106 31h4M235 31h1M107 32h4M235 32h1M3 33h1M108 33h3M235 33h1M3 34h1M108 34h3M3 35h1M108 35h3M3 36h1M108 36h3M235 36h1M3 37h1M108 37h4M235 37h1M3 38h1M108 38h4M3 39h1M108 39h4M3 40h1M108 40h4M3 41h1M108 41h4M3 42h1M38 42h1M108 42h4M3 43h1M38 43h1M108 43h4M2 44h2M38 44h1M108 44h4M2 45h1M38 45h1M108 45h4M2 46h1M38 46h1M108 46h4M2 47h1M38 47h1M108 47h4M2 48h1M38 48h1M108 48h4M2 49h1M38 49h1M108 49h4M2 50h1M38 50h1M109 50h3M1 51h1M38 51h1M109 51h3M1 52h1M38 52h1M109 52h3M1 53h1M25 53h1M38 53h1M109 53h3M1 54h1M38 54h1M109 54h4M1 55h1M38 55h1M109 55h4M1 56h1M38 56h1M109 56h4M159 56h1M1 57h1M38 57h1M109 57h4M0 58h1M38 58h1M110 58h3M0 59h1M38 59h1M110 59h3M0 60h1M38 60h1M110 60h3M0 61h1M38 61h1M110 61h3M0 62h1M38 62h1M110 62h3M159 62h1M0 63h1M38 63h1M110 63h3M0 64h1M38 64h1M110 64h3M0 65h1M25 65h1M38 65h1M108 65h4M38 66h1M107 66h4M38 67h1M106 67h3M38 68h1M105 68h3M38 69h1M104 69h2M159 69h1M103 70h2M103 71h2M103 72h2M159 72h1M26 73h1M103 73h2M103 74h2M159 74h1M103 75h2M159 75h1M103 76h2M159 76h1M103 77h2M104 78h2M104 79h3M26 80h1M106 80h3M159 80h1M108 81h4M159 81h1M111 82h2M159 82h1M113 83h5M115 84h3M116 85h3M160 85h1M117 86h3M27 87h1M118 87h2M159 87h1M118 88h3M159 88h1M119 89h2M119 90h2M120 91h1M25 92h1M120 92h1M27 93h2M120 93h2M160 93h1M31 94h2M121 94h1M29 95h2M121 95h1M121 96h1M121 97h1M121 98h2M160 98h1M121 99h2M161 99h2M29 100h2M121 100h2M161 100h2M32 101h4M121 101h2M30 102h2M121 102h2M26 103h1M122 103h2M26 104h1M122 104h2M26 105h1M122 105h2M160 105h1M26 106h2M122 106h4M163 106h3M27 107h4M122 107h6M165 107h5M29 108h5M122 108h9M160 108h2M28 109h5M123 109h10M26 110h7M123 110h11M160 110h2M26 111h8M123 111h11M160 111h5M26 112h9M123 112h11M161 112h8M26 113h11M123 113h11M166 113h6M33 114h5M124 114h10M170 114h5M124 115h10M164 115h11M35 116h3M124 116h10M160 116h15M30 117h8M125 117h9M160 117h15M30 118h8M127 118h7M160 118h15M31 119h7M129 119h5M161 119h14M32 120h6M131 120h3M168 120h7M133 121h1M172 121h3M172 122h3M165 123h10M35 124h3M167 124h8M36 125h2M170 125h5M37 126h1M173 126h2M37 159h1M172 159h3M36 160h2M170 160h5M35 161h3M169 161h6M25 162h6M123 162h10M0 163h2M38 163h1M114 163h4M138 163h4M2 164h2M108 164h5M142 164h1"/><path stroke="#1e5f5f" d="M6 0h1M94 0h6M143 0h1M227 0h2M6 1h1M95 1h5M143 1h1M227 1h2M6 2h1M96 2h4M227 2h2M97 3h3M142 3h1M228 3h1M5 4h1M98 4h3M142 4h1M228 4h2M5 5h1M99 5h2M142 5h1M228 5h2M5 6h1M99 6h2M142 6h1M228 6h2M5 7h1M99 7h2M142 7h1M228 7h2M5 8h1M99 8h3M142 8h1M229 8h1M5 9h1M100 9h2M141 9h2M229 9h2M5 10h1M100 10h2M141 10h2M229 10h2M5 11h1M100 11h2M138 11h1M141 11h2M229 11h2M5 12h1M100 12h2M138 12h1M141 12h2M229 12h3M5 13h1M100 13h2M138 13h1M141 13h2M229 13h3M5 14h1M100 14h2M138 14h1M141 14h2M229 14h3M5 15h1M100 15h2M138 15h1M141 15h2M229 15h4M5 16h1M100 16h2M138 16h1M140 16h3M229 16h4M5 17h1M100 17h2M138 17h1M140 17h2M229 17h4M5 18h1M100 18h2M138 18h1M140 18h2M229 18h4M5 19h1M100 19h3M138 19h1M140 19h2M229 19h5M5 20h1M100 20h3M138 20h1M140 20h2M229 20h5M5 21h1M100 21h3M138 21h1M140 21h2M229 21h5M100 22h3M138 22h1M140 22h2M229 22h5M101 23h2M138 23h1M140 23h2M229 23h5M101 24h2M138 24h1M140 24h2M230 24h4M102 25h1M138 25h1M140 25h2M230 25h5M102 26h2M138 26h1M140 26h2M229 26h5M103 27h1M138 27h1M140 27h2M229 27h5M103 28h2M138 28h4M229 28h5M103 29h2M138 29h4M230 29h5M4 30h1M104 30h2M138 30h4M230 30h5M4 31h1M104 31h2M138 31h4M230 31h5M4 32h1M104 32h3M138 32h4M230 32h5M4 33h1M105 33h3M138 33h4M230 33h5M4 34h1M105 34h3M138 34h4M230 34h6M4 35h1M105 35h3M138 35h4M230 35h6M4 36h1M105 36h3M138 36h4M230 36h5M4 37h1M105 37h3M138 37h4M230 37h5M4 38h1M105 38h3M138 38h4M230 38h6M4 39h1M105 39h3M138 39h4M232 39h4M4 40h1M105 40h3M138 40h4M233 40h3M4 41h1M105 41h3M138 41h4M231 41h5M4 42h1M105 42h3M138 42h4M233 42h3M4 43h1M105 43h3M138 43h4M235 43h1M105 44h3M138 44h4M3 45h1M105 45h3M138 45h4M3 46h1M105 46h3M138 46h4M3 47h1M105 47h3M138 47h4M3 48h1M105 48h3M138 48h4M105 49h3M138 49h4M105 50h4M138 50h4M2 51h1M105 51h4M138 51h4M2 52h1M25 52h1M105 52h4M138 52h4M2 53h1M105 53h4M138 53h3M2 54h1M105 54h4M138 54h3M2 55h1M105 55h4M138 55h3M106 56h3M138 56h3M106 57h3M138 57h3M1 58h1M106 58h4M139 58h2M1 59h1M106 59h4M139 59h2M1 60h1M25 60h1M106 60h4M139 60h1M1 61h1M106 61h4M139 61h1M1 62h1M107 62h3M139 62h1M1 63h1M107 63h3M139 63h1M159 63h1M1 64h1M106 64h4M139 64h1M159 64h1M1 65h1M105 65h3M139 65h1M0 66h1M104 66h3M0 67h1M25 67h1M104 67h2M0 68h1M103 68h2M0 69h1M102 69h2M38 70h1M101 70h2M38 71h1M101 71h2M25 72h1M38 72h1M101 72h2M38 73h1M101 73h2M38 74h1M101 74h2M38 75h1M101 75h2M38 76h1M101 76h2M38 77h1M102 77h1M38 78h1M102 78h2M25 79h1M38 79h1M102 79h2M159 79h1M38 80h1M103 80h3M38 81h1M105 81h3M38 82h1M107 82h4M38 83h1M110 83h3M159 83h1M38 84h1M112 84h3M38 85h1M114 85h2M115 86h2M26 87h1M116 87h2M116 88h2M117 89h2M159 89h1M118 90h1M159 90h1M118 91h2M119 92h1M160 92h1M26 93h1M119 93h1M29 94h2M119 94h2M159 94h1M28 95h1M120 95h1M159 95h1M25 96h1M120 96h1M159 96h1M25 97h1M120 97h1M159 97h1M25 98h1M120 98h1M25 99h1M120 99h1M28 100h1M120 100h1M31 101h1M120 101h1M28 102h2M120 102h1M25 103h1M121 103h1M25 104h1M121 104h1M25 105h1M121 105h1M25 106h1M121 106h1M161 106h2M26 107h1M121 107h1M161 107h4M27 108h2M121 108h1M26 109h2M121 109h2M25 110h1M121 110h2M25 111h1M121 111h2M25 112h1M121 112h2M160 112h1M121 113h2M163 113h3M30 114h3M122 114h2M166 114h4M35 115h3M122 115h2M161 115h3M31 116h4M122 116h2M26 117h4M122 117h3M26 118h4M122 118h5M26 119h5M122 119h7M160 119h1M27 120h5M122 120h9M165 120h3M34 121h4M123 121h10M170 121h2M123 122h11M167 122h5M35 123h3M123 123h11M160 123h5M28 124h7M123 124h11M160 124h7M27 125h9M123 125h11M160 125h10M27 126h10M123 126h11M160 126h13M29 127h9M124 127h10M167 127h8M124 128h10M172 128h3M124 129h10M172 129h3M125 130h9M161 130h14M30 131h8M127 131h7M160 131h15M30 132h8M129 132h5M160 132h15M31 133h7M131 133h3M161 133h14M32 134h6M132 134h2M169 134h6M132 135h2M174 135h1M133 136h1M174 136h1M133 137h1M169 137h6M32 138h6M133 138h1M161 138h14M32 139h6M133 139h1M161 139h14M32 140h6M161 140h14M33 141h5M170 141h5M172 144h3M32 145h6M162 145h13M31 146h7M133 146h1M161 146h14M30 147h8M133 147h1M161 147h14M32 148h6M171 148h4M174 151h1M29 152h9M131 152h3M161 152h14M26 153h12M129 153h5M161 153h14M26 154h12M128 154h6M161 154h14M27 155h11M128 155h6M167 155h8M32 156h6M132 156h2M174 156h1M34 157h4M132 157h2M29 158h9M128 158h6M171 158h4M26 159h11M124 159h10M160 159h12M26 160h10M123 160h11M160 160h10M26 161h9M123 161h11M160 161h9M120 162h3M2 163h2M109 163h5M142 163h1M4 164h3M104 164h4M143 164h1M175 164h1M229 164h7"/><path stroke="#1e6262" d="M7 0h1M39 0h1M85 0h9M144 0h1M158 0h1M175 0h1M225 0h2M7 1h1M39 1h1M88 1h7M144 1h1M175 1h1M226 1h1M7 2h1M89 2h7M143 2h1M175 2h1M226 2h1M6 3h2M89 3h8M143 3h1M175 3h1M226 3h2M6 4h1M90 4h8M143 4h1M175 4h1M226 4h2M6 5h1M91 5h8M143 5h1M175 5h1M226 5h2M6 6h1M92 6h7M143 6h1M227 6h1M6 7h1M93 7h6M143 7h1M227 7h1M6 8h1M94 8h5M143 8h1M227 8h2M6 9h1M94 9h6M143 9h1M227 9h2M6 10h1M95 10h5M143 10h1M227 10h2M6 11h1M95 11h5M143 11h1M227 11h2M6 12h1M95 12h5M143 12h1M227 12h2M6 13h1M95 13h5M143 13h1M227 13h2M6 14h1M96 14h4M143 14h1M227 14h2M6 15h1M96 15h4M227 15h2M6 16h1M96 16h4M227 16h2M6 17h1M96 17h4M142 17h1M227 17h2M6 18h1M96 18h4M142 18h1M228 18h1M6 19h1M97 19h3M142 19h1M228 19h1M97 20h3M142 20h1M228 20h1M97 21h3M142 21h1M228 21h1M5 22h1M97 22h3M142 22h1M228 22h1M5 23h1M98 23h3M142 23h1M228 23h1M5 24h1M99 24h2M142 24h1M228 24h2M5 25h1M99 25h3M142 25h1M228 25h2M5 26h1M100 26h2M142 26h1M228 26h1M5 27h1M100 27h3M142 27h1M228 27h1M5 28h1M101 28h2M142 28h1M228 28h1M5 29h1M101 29h2M142 29h1M228 29h2M5 30h1M102 30h2M142 30h1M228 30h2M5 31h1M102 31h2M142 31h1M228 31h2M5 32h1M103 32h1M142 32h1M228 32h2M5 33h1M103 33h2M142 33h1M228 33h2M5 34h1M103 34h2M142 34h1M228 34h2M5 35h1M103 35h2M142 35h1M228 35h2M5 36h1M103 36h2M142 36h1M228 36h2M5 37h1M103 37h2M142 37h1M228 37h2M5 38h1M103 38h2M142 38h1M228 38h2M5 39h1M103 39h2M142 39h1M229 39h3M5 40h1M103 40h2M142 40h1M229 40h4M5 41h1M103 41h2M142 41h1M229 41h2M103 42h2M142 42h1M229 42h4M103 43h2M142 43h1M229 43h6M4 44h1M103 44h2M142 44h1M234 44h2M4 45h1M103 45h2M142 45h1M235 45h1M103 46h2M142 46h1M232 46h4M103 47h2M142 47h1M233 47h3M103 48h2M142 48h1M235 48h1M3 49h1M103 49h2M142 49h1M3 50h1M103 50h2M142 50h1M3 51h1M103 51h2M3 52h1M103 52h2M3 53h1M103 53h2M141 53h1M103 54h2M141 54h2M104 55h1M141 55h2M2 56h1M104 56h2M141 56h1M2 57h1M104 57h2M141 57h1M2 58h1M104 58h2M138 58h1M141 58h1M2 59h1M25 59h1M104 59h2M138 59h1M141 59h1M2 60h1M104 60h2M138 60h1M140 60h2M2 61h1M104 61h2M138 61h1M140 61h2M232 61h4M2 62h1M104 62h3M138 62h1M140 62h2M229 62h7M104 63h3M138 63h1M140 63h2M234 63h2M104 64h2M138 64h1M140 64h1M103 65h2M138 65h1M140 65h1M1 66h1M103 66h1M138 66h3M232 66h4M1 67h1M102 67h2M138 67h3M230 67h6M1 68h1M101 68h2M138 68h4M1 69h1M100 69h2M138 69h4M0 70h2M99 70h2M138 70h3M0 71h1M98 71h3M138 71h2M159 71h1M0 72h1M99 72h2M138 72h2M0 73h1M99 73h2M138 73h2M25 74h1M99 74h2M138 74h2M99 75h2M138 75h3M99 76h2M139 76h2M99 77h3M139 77h1M99 78h3M139 78h1M100 79h2M101 80h2M25 81h1M103 81h2M104 82h3M106 83h4M108 84h4M111 85h3M25 86h1M38 86h1M113 86h2M38 87h1M114 87h2M38 88h1M114 88h2M38 89h1M115 89h2M38 90h1M116 90h2M38 91h1M117 91h1M38 92h1M117 92h2M38 93h1M118 93h1M28 94h1M38 94h1M118 94h1M26 95h2M38 95h1M119 95h1M38 96h1M119 96h1M38 97h1M119 97h1M38 98h1M119 98h1M38 99h1M119 99h1M26 100h2M38 100h1M119 100h1M160 100h1M29 101h2M119 101h1M159 101h1M27 102h1M119 102h1M159 102h1M120 103h1M159 103h1M120 104h1M159 104h1M120 105h1M120 106h1M120 107h1M26 108h1M120 108h1M120 109h1M159 109h1M120 110h1M159 110h1M120 111h1M159 111h1M120 112h1M25 113h1M120 113h1M162 113h1M28 114h2M121 114h1M164 114h2M32 115h3M121 115h1M160 115h1M30 116h1M121 116h1M121 117h1M121 118h1M121 119h1M26 120h1M121 120h1M163 120h2M31 121h3M121 121h2M168 121h2M36 122h2M121 122h2M161 122h6M32 123h3M121 123h2M26 124h2M121 124h2M26 125h1M121 125h2M26 126h1M121 126h2M26 127h3M122 127h2M165 127h2M34 128h4M122 128h2M170 128h2M122 129h2M170 129h2M34 130h4M122 130h3M160 130h1M26 131h4M122 131h5M26 132h4M122 132h7M26 133h5M122 133h9M160 133h1M26 134h6M123 134h9M166 134h3M33 135h5M123 135h9M172 135h2M124 136h9M172 136h2M33 137h5M123 137h10M161 137h8M26 138h6M123 138h10M160 138h1M26 139h6M123 139h10M160 139h1M26 140h6M123 140h11M160 140h1M27 141h6M124 141h10M167 141h3M36 142h2M132 142h2M173 142h2M174 143h1M36 144h2M132 144h2M169 144h3M27 145h5M125 145h9M160 145h2M26 146h5M125 146h8M160 146h1M26 147h4M126 147h7M160 147h1M28 148h4M129 148h5M168 148h3M36 151h2M171 151h3M26 152h3M126 152h5M160 152h1M25 153h1M124 153h5M160 153h1M25 154h1M123 154h5M160 154h1M26 155h1M124 155h4M164 155h3M30 156h2M128 156h4M172 156h2M30 157h4M128 157h4M174 157h1M26 158h3M124 158h4M169 158h2M25 159h1M122 159h2M25 160h1M121 160h2M25 161h1M121 161h2M38 162h1M116 162h4M138 162h3M159 162h1M4 163h2M105 163h4M143 163h1M175 163h1M230 163h6M7 164h3M98 164h6M144 164h2M158 164h1M220 164h9"/><path stroke="#1e6666" d="M8 0h4M40 0h1M78 0h7M145 0h1M176 0h1M216 0h9M8 1h3M40 1h1M83 1h5M145 1h1M158 1h1M176 1h1M217 1h9M8 2h2M39 2h1M83 2h6M144 2h2M158 2h1M176 2h1M218 2h8M8 3h1M39 3h1M76 3h13M144 3h1M158 3h1M176 3h1M220 3h6M7 4h2M39 4h1M76 4h14M144 4h1M158 4h1M223 4h3M7 5h2M39 5h1M77 5h14M144 5h1M158 5h1M223 5h3M7 6h2M39 6h1M82 6h10M144 6h1M158 6h1M175 6h1M224 6h3M7 7h2M39 7h1M84 7h9M144 7h1M158 7h1M175 7h1M225 7h2M7 8h2M39 8h1M86 8h8M144 8h1M158 8h1M175 8h1M225 8h2M7 9h1M39 9h1M86 9h8M144 9h1M158 9h1M175 9h1M225 9h2M7 10h1M86 10h9M144 10h1M158 10h1M175 10h1M225 10h2M7 11h1M87 11h8M144 11h1M175 11h1M225 11h2M7 12h1M87 12h8M144 12h1M175 12h1M226 12h1M7 13h1M88 13h7M175 13h1M226 13h1M7 14h1M88 14h8M175 14h1M226 14h1M7 15h1M88 15h8M143 15h1M175 15h1M226 15h1M7 16h1M89 16h7M143 16h1M175 16h1M226 16h1M7 17h1M89 17h7M143 17h1M175 17h1M226 17h1M89 18h7M143 18h1M175 18h1M226 18h2M89 19h8M143 19h1M175 19h1M226 19h2M6 20h1M89 20h8M143 20h1M175 20h1M226 20h2M6 21h1M90 21h7M143 21h1M175 21h1M226 21h2M6 22h1M90 22h7M143 22h1M175 22h1M226 22h2M6 23h1M90 23h8M143 23h1M175 23h1M226 23h2M6 24h1M92 24h7M143 24h1M175 24h1M226 24h2M6 25h1M93 25h6M143 25h1M175 25h1M226 25h2M6 26h1M95 26h5M143 26h1M175 26h1M226 26h2M6 27h1M97 27h3M143 27h1M175 27h1M226 27h2M6 28h1M98 28h3M143 28h1M175 28h1M226 28h2M6 29h1M99 29h2M143 29h1M175 29h1M227 29h1M6 30h1M99 30h3M143 30h1M175 30h1M226 30h2M6 31h1M100 31h2M143 31h1M175 31h1M226 31h2M6 32h1M100 32h3M143 32h1M175 32h1M226 32h2M6 33h1M101 33h2M143 33h1M175 33h1M226 33h2M6 34h1M101 34h2M143 34h1M175 34h1M227 34h1M6 35h1M101 35h2M143 35h1M175 35h1M227 35h1M6 36h1M101 36h2M143 36h1M175 36h1M226 36h2M6 37h1M101 37h2M143 37h1M175 37h1M226 37h2M6 38h1M101 38h2M143 38h1M175 38h1M226 38h2M6 39h1M101 39h2M143 39h1M175 39h1M228 39h1M6 40h1M101 40h2M143 40h1M227 40h2M101 41h2M143 41h1M227 41h2M5 42h1M101 42h2M143 42h1M227 42h2M5 43h1M101 43h2M143 43h1M227 43h2M5 44h1M101 44h2M143 44h1M231 44h3M5 45h2M101 45h2M143 45h1M230 45h5M4 46h2M101 46h2M143 46h1M228 46h4M4 47h2M101 47h2M143 47h1M228 47h5M4 48h1M101 48h2M143 48h1M230 48h5M4 49h1M101 49h2M4 50h1M101 50h2M101 51h2M142 51h1M232 51h4M101 52h2M142 52h1M232 52h4M101 53h2M142 53h1M234 53h2M3 54h1M102 54h1M3 55h1M102 55h2M3 56h1M102 56h2M142 56h1M233 56h3M3 57h1M102 57h2M142 57h1M230 57h6M3 58h1M102 58h2M232 58h4M3 59h1M102 59h2M102 60h2M142 60h1M102 61h2M142 61h1M224 61h8M102 62h2M142 62h1M222 62h7M2 63h1M102 63h2M231 63h3M2 64h1M102 64h2M141 64h1M2 65h1M101 65h2M141 65h1M2 66h1M25 66h1M100 66h3M141 66h1M223 66h9M2 67h1M100 67h2M141 67h2M223 67h7M2 68h1M99 68h2M233 68h3M96 69h4M93 70h6M141 70h1M159 70h1M1 71h1M93 71h5M140 71h1M231 71h5M1 72h1M95 72h4M140 72h1M232 72h4M1 73h1M94 73h5M140 73h1M0 74h2M93 74h6M140 74h2M0 75h1M93 75h6M141 75h1M0 76h1M93 76h6M138 76h1M0 77h1M94 77h5M138 77h1M140 77h1M0 78h1M95 78h4M138 78h1M0 79h1M96 79h4M138 79h2M0 80h1M98 80h3M138 80h2M0 81h1M100 81h3M138 81h4M102 82h2M138 82h3M103 83h3M138 83h2M105 84h3M138 84h2M107 85h4M138 85h2M110 86h3M138 86h1M159 86h1M111 87h3M138 87h2M25 88h1M112 88h2M138 88h3M113 89h2M138 89h2M114 90h2M138 90h2M115 91h2M138 91h1M116 92h1M116 93h2M27 94h1M117 94h1M139 94h1M118 95h1M139 95h1M118 96h1M118 97h1M118 98h1M118 99h1M160 99h1M118 100h1M28 101h1M38 101h1M118 101h1M26 102h1M38 102h1M38 103h1M119 103h1M38 104h1M119 104h1M38 105h1M119 105h1M38 106h1M119 106h1M38 107h1M119 107h1M38 108h1M119 108h1M38 109h1M119 109h1M38 110h1M119 110h1M38 111h1M119 111h1M38 112h1M119 112h1M38 113h1M119 113h1M161 113h1M27 114h1M38 114h1M119 114h2M161 114h3M31 115h1M38 115h1M120 115h1M28 116h2M38 116h1M120 116h1M159 116h1M120 117h1M159 117h1M120 118h1M159 118h1M120 119h1M120 120h1M162 120h1M30 121h1M120 121h1M165 121h3M34 122h2M120 122h1M30 123h2M120 123h1M159 123h1M120 124h1M159 124h1M120 125h1M159 125h1M120 126h1M120 127h2M163 127h2M31 128h3M121 128h1M168 128h2M36 129h2M121 129h1M166 129h4M31 130h3M121 130h1M121 131h1M121 132h1M121 133h1M121 134h2M164 134h2M31 135h2M122 135h1M170 135h2M35 136h3M123 136h1M170 136h2M31 137h2M122 137h1M160 137h1M121 138h2M121 139h2M121 140h2M26 141h1M122 141h2M165 141h2M33 142h3M129 142h3M172 142h1M132 143h2M173 143h1M33 144h3M129 144h3M164 144h5M26 145h1M123 145h2M25 146h1M123 146h2M25 147h1M123 147h3M27 148h1M127 148h2M166 148h2M37 149h1M174 149h1M33 151h3M132 151h2M170 151h1M124 152h2M123 153h1M122 154h1M25 155h1M122 155h2M162 155h2M28 156h2M38 156h1M126 156h2M171 156h1M29 157h1M38 157h1M126 157h2M172 157h2M38 158h1M123 158h1M166 158h3M38 159h1M120 159h2M159 159h1M38 160h1M119 160h2M159 160h1M38 161h1M118 161h3M159 161h1M0 162h3M111 162h5M141 162h2M6 163h4M100 163h5M144 163h1M158 163h1M221 163h9M10 164h13M24 164h1M90 164h8M134 164h1M146 164h1M157 164h1M199 164h21"/><path stroke="#1e6969" d="M12 0h13M41 0h5M73 0h5M134 0h1M137 0h1M146 0h3M152 0h1M157 0h1M177 0h8M194 0h22M11 1h14M41 1h4M82 1h1M134 1h1M146 1h2M157 1h1M177 1h1M182 1h6M200 1h17M10 2h13M24 2h1M40 2h2M73 2h10M134 2h1M146 2h2M157 2h1M177 2h1M205 2h13M9 3h1M40 3h2M72 3h4M134 3h1M145 3h2M157 3h1M177 3h1M212 3h8M9 4h1M40 4h1M72 4h4M134 4h1M145 4h2M157 4h1M176 4h2M214 4h9M9 5h10M40 5h1M73 5h4M134 5h1M145 5h2M157 5h1M176 5h2M211 5h12M9 6h9M40 6h1M73 6h9M134 6h1M145 6h2M157 6h1M176 6h1M212 6h12M9 7h7M40 7h1M76 7h8M134 7h1M145 7h1M157 7h1M176 7h1M213 7h12M9 8h5M40 8h1M83 8h3M134 8h1M145 8h1M176 8h1M216 8h9M8 9h3M40 9h1M83 9h3M145 9h1M176 9h1M218 9h7M8 10h1M39 10h1M75 10h11M145 10h1M176 10h1M216 10h9M8 11h1M39 11h1M75 11h12M145 11h1M158 11h1M176 11h1M216 11h9M8 12h3M39 12h1M75 12h12M145 12h1M158 12h1M176 12h1M217 12h9M8 13h3M39 13h1M75 13h13M144 13h2M158 13h1M176 13h1M218 13h8M8 14h3M39 14h1M78 14h10M144 14h2M158 14h1M176 14h1M220 14h6M8 15h3M39 15h1M84 15h4M144 15h2M158 15h1M176 15h1M218 15h8M8 16h2M39 16h1M84 16h5M144 16h1M158 16h1M176 16h1M218 16h8M8 17h1M39 17h1M76 17h13M144 17h1M158 17h1M176 17h1M219 17h7M7 18h2M39 18h1M76 18h13M144 18h2M158 18h1M176 18h1M220 18h6M7 19h3M39 19h1M76 19h13M144 19h2M158 19h1M176 19h1M222 19h4M7 20h3M76 20h13M144 20h1M158 20h1M176 20h1M221 20h5M7 21h3M82 21h8M144 21h1M158 21h1M176 21h1M220 21h6M7 22h3M85 22h5M144 22h1M158 22h1M220 22h6M7 23h2M85 23h5M144 23h1M158 23h1M221 23h5M7 24h1M83 24h9M144 24h1M158 24h1M223 24h3M7 25h1M83 25h10M144 25h1M158 25h1M222 25h4M7 26h1M9 26h1M88 26h7M144 26h1M158 26h1M221 26h5M7 27h3M89 27h8M144 27h1M158 27h1M221 27h5M7 28h3M91 28h7M144 28h1M158 28h1M222 28h4M7 29h3M92 29h7M144 29h1M158 29h1M224 29h3M7 30h2M94 30h5M144 30h1M158 30h1M223 30h3M7 31h1M95 31h5M144 31h1M158 31h1M222 31h4M7 32h1M97 32h3M144 32h1M158 32h1M222 32h4M7 33h1M98 33h3M144 33h1M158 33h1M223 33h3M7 34h3M98 34h3M144 34h1M158 34h1M225 34h2M7 35h3M99 35h2M144 35h1M158 35h1M224 35h3M7 36h2M99 36h2M144 36h1M158 36h1M223 36h3M7 37h1M99 37h2M144 37h1M158 37h1M223 37h3M7 38h1M99 38h2M144 38h1M158 38h1M224 38h2M7 39h1M99 39h2M144 39h1M158 39h1M226 39h2M99 40h2M144 40h1M158 40h1M175 40h1M225 40h2M6 41h1M99 41h2M158 41h1M175 41h1M223 41h4M6 42h1M8 42h1M99 42h2M158 42h1M175 42h1M224 42h3M6 43h2M99 43h2M158 43h1M175 43h1M225 43h2M6 44h2M99 44h2M158 44h1M175 44h1M228 44h3M99 45h2M158 45h1M175 45h1M227 45h3M6 46h1M99 46h2M158 46h1M175 46h1M224 46h4M99 47h2M158 47h1M175 47h1M224 47h4M5 48h1M99 48h2M175 48h1M227 48h3M99 49h2M143 49h1M175 49h1M233 49h3M99 50h2M175 50h1M232 50h4M4 51h1M99 51h2M158 51h1M175 51h1M225 51h7M4 52h1M6 52h1M99 52h2M158 52h1M175 52h1M225 52h7M4 53h2M99 53h2M143 53h1M158 53h1M175 53h1M229 53h5M4 54h2M99 54h3M143 54h1M158 54h1M175 54h1M235 54h1M4 55h1M99 55h3M175 55h1M235 55h1M4 56h1M100 56h2M175 56h1M225 56h8M100 57h2M175 57h1M223 57h7M100 58h2M142 58h1M158 58h1M175 58h1M229 58h3M100 59h2M142 59h1M175 59h1M3 60h1M100 60h2M143 60h1M175 60h1M3 61h1M100 61h2M175 61h1M211 61h13M3 62h1M100 62h2M175 62h1M215 62h7M3 63h1M100 63h2M142 63h1M175 63h1M229 63h2M3 64h1M100 64h2M175 64h1M3 65h1M99 65h2M175 65h1M97 66h3M142 66h1M175 66h1M209 66h14M94 67h6M175 67h1M216 67h7M91 68h8M142 68h1M175 68h1M231 68h2M2 69h1M88 69h8M175 69h1M2 70h1M88 70h5M2 71h1M92 71h1M141 71h1M222 71h9M2 72h1M93 72h2M141 72h1M225 72h7M2 73h1M25 73h1M93 73h1M141 73h2M234 73h2M2 74h1M88 74h5M142 74h1M1 75h1M87 75h6M1 76h1M87 76h6M141 76h1M235 76h1M1 77h1M89 77h5M159 77h1M235 77h1M1 78h1M93 78h2M140 78h1M159 78h1M1 79h1M94 79h2M140 79h1M1 80h1M25 80h1M95 80h3M140 80h3M1 81h1M95 81h5M0 82h2M98 82h4M0 83h2M100 83h3M140 83h1M0 84h1M102 84h3M0 85h1M104 85h3M0 86h1M106 86h4M139 86h1M0 87h1M107 87h4M140 87h2M0 88h1M108 88h4M0 89h1M110 89h3M111 90h3M112 91h3M139 91h1M113 92h3M138 92h1M114 93h2M138 93h2M141 93h1M26 94h1M115 94h2M138 94h1M140 94h1M116 95h2M138 95h1M117 96h1M138 96h2M117 97h1M138 97h1M117 98h1M138 98h1M117 99h1M138 99h1M117 100h1M138 100h3M27 101h1M117 101h1M138 101h2M118 102h1M138 102h1M118 103h1M138 103h1M118 104h1M118 105h1M118 106h1M160 106h1M25 107h1M118 107h1M138 107h2M160 107h1M118 108h1M138 108h1M159 108h1M118 109h1M118 110h1M118 111h1M118 112h1M118 113h1M26 114h1M118 114h1M29 115h2M119 115h1M27 116h1M119 116h1M38 117h1M119 117h1M25 118h1M38 118h1M119 118h1M25 119h1M38 119h1M119 119h1M38 120h1M119 120h1M161 120h1M28 121h2M38 121h1M119 121h1M163 121h2M32 122h2M38 122h1M119 122h1M29 123h1M38 123h1M119 123h1M38 124h1M119 124h1M25 125h1M38 125h1M119 125h1M25 126h1M38 126h1M119 126h1M38 127h1M119 127h1M162 127h1M30 128h1M38 128h1M119 128h2M167 128h1M34 129h2M38 129h1M120 129h1M163 129h3M30 130h1M38 130h1M120 130h1M38 131h1M120 131h1M159 131h1M25 132h1M38 132h1M120 132h1M159 132h1M25 133h1M38 133h1M119 133h2M38 134h1M119 134h2M163 134h1M29 135h2M38 135h1M121 135h1M169 135h1M32 136h3M38 136h1M122 136h1M169 136h1M29 137h2M38 137h1M121 137h1M38 138h1M119 138h2M159 138h1M25 139h1M38 139h1M120 139h1M159 139h1M25 140h1M38 140h1M120 140h1M159 140h1M38 141h1M163 141h2M31 142h2M38 142h1M127 142h2M171 142h1M35 143h4M131 143h1M171 143h2M31 144h2M38 144h1M127 144h2M161 144h3M38 145h1M122 145h1M38 146h1M122 146h1M38 147h1M26 148h1M38 148h1M125 148h2M165 148h1M34 149h3M38 149h1M133 149h1M173 149h1M38 150h1M174 150h1M31 151h2M38 151h1M131 151h1M168 151h2M25 152h1M38 152h1M123 152h1M38 153h1M122 153h1M38 154h1M121 154h1M159 154h1M38 155h1M138 155h1M161 155h1M26 156h2M124 156h2M170 156h1M28 157h1M124 157h2M171 157h1M122 158h1M164 158h2M118 159h2M116 160h3M138 160h2M0 161h3M114 161h4M138 161h5M3 162h3M107 162h4M143 162h1M232 162h4M10 163h11M92 163h8M134 163h1M145 163h2M157 163h1M206 163h15M23 164h1M54 164h36M135 164h3M147 164h10M187 164h12"/><path stroke="#1e6c6c" d="M46 0h8M59 0h14M135 0h2M149 0h3M153 0h4M185 0h9M45 1h10M71 1h11M135 1h3M148 1h9M178 1h4M188 1h12M23 2h1M42 2h31M135 2h3M148 2h9M178 2h27M10 3h11M24 3h1M42 3h30M135 3h3M147 3h10M178 3h34M10 4h15M41 4h31M135 4h3M147 4h10M178 4h36M19 5h6M41 5h32M135 5h3M147 5h10M178 5h33M18 6h7M41 6h11M67 6h6M135 6h3M147 6h10M177 6h15M197 6h15M16 7h9M41 7h5M71 7h5M136 7h2M146 7h8M177 7h18M202 7h11M14 8h11M41 8h5M80 8h3M137 8h1M146 8h3M151 8h2M157 8h1M177 8h23M209 8h7M11 9h14M41 9h2M72 9h11M134 9h1M137 9h1M146 9h2M151 9h1M156 9h2M177 9h5M187 9h18M210 9h8M9 10h1M40 10h2M71 10h4M134 10h1M137 10h1M146 10h2M156 10h2M177 10h6M193 10h23M9 11h6M24 11h1M40 11h2M71 11h4M134 11h1M146 11h2M155 11h3M177 11h11M199 11h17M11 12h14M40 12h2M71 12h4M134 12h1M146 12h2M157 12h1M177 12h1M182 12h10M204 12h13M11 13h14M40 13h1M71 13h4M134 13h1M146 13h2M157 13h1M177 13h1M185 13h12M211 13h7M11 14h14M40 14h1M73 14h5M134 14h1M146 14h2M157 14h1M177 14h1M190 14h13M212 14h8M11 15h14M40 15h1M83 15h1M134 15h1M146 15h2M157 15h1M177 15h1M195 15h23M10 16h13M24 16h1M40 16h1M82 16h2M134 16h1M145 16h3M157 16h1M177 16h1M200 16h18M9 17h1M40 17h1M72 17h4M134 17h1M145 17h2M157 17h1M177 17h1M205 17h14M9 18h1M40 18h1M72 18h4M134 18h1M146 18h1M157 18h1M177 18h1M212 18h8M10 19h15M72 19h4M134 19h1M146 19h1M157 19h1M177 19h1M198 19h1M214 19h8M10 20h15M39 20h1M72 20h4M134 20h1M145 20h2M157 20h1M177 20h1M200 20h21M10 21h15M39 21h1M74 21h8M134 21h1M145 21h2M157 21h1M177 21h1M203 21h17M10 22h13M24 22h1M39 22h1M83 22h2M134 22h1M145 22h2M157 22h1M176 22h2M207 22h13M9 23h9M39 23h1M83 23h2M134 23h1M145 23h2M157 23h1M176 23h2M213 23h8M8 24h1M39 24h1M73 24h10M134 24h1M145 24h2M157 24h1M176 24h2M216 24h7M8 25h2M39 25h1M73 25h10M134 25h1M145 25h2M157 25h1M176 25h2M209 25h13M8 26h1M10 26h11M39 26h1M74 26h14M134 26h1M145 26h2M157 26h1M176 26h2M206 26h15M10 27h12M39 27h1M74 27h15M134 27h1M145 27h1M157 27h1M176 27h2M209 27h12M10 28h12M82 28h9M134 28h1M145 28h2M157 28h1M176 28h2M214 28h8M10 29h11M85 29h7M134 29h1M145 29h2M157 29h1M176 29h2M217 29h7M9 30h5M87 30h7M134 30h1M145 30h2M157 30h1M176 30h2M210 30h13M8 31h1M88 31h7M134 31h1M145 31h2M157 31h1M176 31h2M209 31h13M8 32h1M89 32h8M134 32h1M145 32h1M157 32h1M176 32h2M210 32h12M8 33h11M91 33h7M134 33h1M145 33h1M157 33h1M176 33h2M215 33h8M10 34h10M91 34h7M134 34h1M145 34h1M176 34h2M218 34h7M10 35h10M91 35h8M134 35h1M145 35h1M176 35h2M211 35h13M9 36h10M91 36h8M134 36h1M145 36h2M157 36h1M176 36h2M210 36h13M8 37h3M91 37h8M134 37h1M145 37h2M157 37h1M176 37h2M211 37h12M8 38h1M91 38h8M134 38h1M145 38h1M157 38h1M176 38h1M217 38h7M91 39h8M134 39h1M145 39h1M157 39h1M176 39h1M222 39h4M7 40h1M9 40h7M91 40h8M134 40h1M157 40h1M176 40h2M215 40h10M7 41h11M92 41h7M134 41h1M144 41h1M176 41h1M211 41h12M7 42h1M9 42h8M92 42h7M134 42h1M144 42h1M176 42h1M212 42h12M8 43h9M92 43h7M134 43h1M144 43h1M176 43h1M220 43h5M92 44h7M134 44h1M144 44h1M157 44h1M176 44h1M226 44h2M7 45h1M92 45h7M134 45h1M144 45h1M157 45h1M176 45h1M222 45h5M92 46h7M134 46h1M144 46h1M157 46h1M176 46h1M212 46h12M6 47h1M92 47h7M134 47h1M144 47h1M176 47h1M213 47h11M9 48h6M92 48h7M134 48h1M158 48h1M176 48h1M223 48h4M5 49h1M8 49h7M92 49h7M134 49h1M176 49h1M230 49h3M5 50h1M7 50h1M9 50h5M93 50h6M134 50h1M143 50h1M158 50h1M176 50h1M227 50h5M5 51h3M93 51h6M134 51h1M143 51h1M176 51h1M213 51h12M5 52h1M93 52h6M134 52h1M143 52h1M157 52h1M215 52h10M6 53h1M93 53h6M134 53h1M157 53h1M225 53h4M93 54h6M134 54h1M232 54h3M5 55h1M9 55h3M94 55h5M134 55h1M143 55h1M230 55h5M8 56h3M94 56h6M134 56h1M213 56h12M4 57h1M94 57h6M214 57h9M4 58h1M95 58h5M226 58h3M6 59h1M95 59h5M143 59h1M158 59h1M234 59h2M5 60h1M95 60h5M158 60h1M232 60h4M4 61h1M95 61h5M158 61h1M202 61h9M4 62h1M9 62h1M96 62h4M211 62h4M4 63h1M9 63h1M96 63h4M227 63h2M95 64h5M142 64h1M94 65h5M142 65h1M158 65h1M234 65h2M3 66h1M92 66h5M143 66h1M158 66h1M202 66h7M3 67h1M88 67h6M158 67h1M212 67h4M3 68h1M84 68h7M158 68h1M228 68h3M3 69h1M83 69h5M142 69h1M3 70h1M85 70h3M175 70h1M3 71h1M90 71h2M175 71h1M206 71h16M3 72h1M142 72h1M175 72h1M217 72h8M91 73h2M158 73h1M175 73h1M231 73h3M85 74h3M158 74h1M175 74h1M2 75h1M84 75h3M158 75h1M175 75h1M2 76h1M84 76h3M175 76h1M227 76h8M2 77h1M86 77h3M141 77h1M175 77h1M227 77h8M2 78h1M91 78h2M175 78h1M234 78h2M2 79h1M141 79h2M175 79h1M2 80h1M93 80h2M175 80h1M2 81h1M90 81h5M175 81h1M230 81h6M92 82h6M141 82h1M175 82h1M229 82h7M95 83h5M175 83h1M1 84h1M98 84h4M140 84h1M159 84h1M175 84h1M1 85h1M101 85h3M175 85h1M1 86h1M103 86h3M140 86h3M175 86h1M232 86h4M1 87h1M25 87h1M104 87h3M231 87h5M1 88h1M105 88h3M141 88h1M1 89h1M106 89h4M140 89h1M0 90h1M107 90h4M0 91h1M109 91h3M159 91h1M235 91h1M110 92h3M139 92h1M233 92h3M25 93h1M112 93h2M140 93h1M159 93h1M113 94h2M114 95h2M140 95h1M115 96h2M115 97h2M139 97h1M235 97h1M115 98h2M115 99h2M139 99h1M141 99h1M116 100h1M26 101h1M116 101h1M116 102h2M139 102h1M116 103h2M116 104h2M138 104h1M116 105h2M138 105h1M117 106h1M138 106h3M117 107h1M117 108h1M25 109h1M117 109h1M138 109h1M117 110h1M117 111h1M117 112h1M138 112h3M117 113h1M138 113h2M160 113h1M117 114h1M138 114h1M28 115h1M117 115h2M26 116h1M118 116h1M25 117h1M118 117h1M118 118h1M118 119h1M138 119h2M25 120h1M118 120h1M138 120h1M27 121h1M118 121h1M161 121h2M30 122h2M118 122h1M160 122h1M28 123h1M118 123h1M25 124h1M118 124h1M118 125h1M138 125h2M118 126h1M138 126h1M159 126h1M25 127h1M118 127h1M161 127h1M29 128h1M118 128h1M165 128h2M32 129h2M119 129h1M161 129h2M29 130h1M118 130h2M159 130h1M25 131h1M118 131h2M138 131h2M118 132h2M118 133h1M159 133h1M25 134h1M118 134h1M161 134h2M28 135h1M120 135h1M168 135h1M31 136h1M121 136h1M167 136h2M28 137h1M120 137h1M138 137h2M25 138h1M117 138h2M117 139h3M118 140h2M121 141h1M162 141h1M30 142h1M126 142h1M170 142h1M33 143h2M129 143h2M138 143h2M170 143h1M30 144h1M126 144h1M25 145h1M121 145h1M159 145h1M121 146h1M159 146h1M122 147h1M159 147h1M123 148h2M163 148h2M32 149h2M131 149h2M138 149h1M172 149h1M37 150h1M173 150h1M30 151h1M129 151h2M165 151h3M122 152h1M159 152h1M121 153h1M159 153h1M121 155h1M139 155h1M123 156h1M169 156h1M26 157h2M123 157h1M170 157h1M121 158h1M161 158h3M116 159h2M113 160h3M140 160h3M3 161h2M110 161h4M143 161h1M6 162h3M103 162h4M144 162h1M158 162h1M175 162h1M224 162h8M21 163h4M56 163h36M135 163h3M147 163h10M187 163h19M51 164h3M185 164h2"/><path stroke="#1e7070" d="M54 0h5M55 1h16M21 3h3M52 6h15M192 6h5M46 7h25M135 7h1M154 7h3M195 7h7M46 8h11M70 8h10M135 8h2M149 8h2M153 8h4M200 8h9M43 9h29M135 9h2M148 9h3M152 9h4M182 9h5M205 9h5M10 10h15M42 10h29M135 10h2M148 10h8M183 10h10M15 11h9M42 11h29M135 11h3M148 11h7M188 11h11M42 12h29M135 12h3M148 12h9M178 12h4M192 12h12M41 13h30M135 13h3M148 13h9M178 13h7M197 13h14M41 14h11M62 14h11M135 14h3M148 14h9M178 14h12M203 14h9M41 15h12M73 15h10M135 15h3M148 15h7M156 15h1M178 15h17M23 16h1M41 16h41M135 16h3M148 16h6M155 16h2M178 16h22M10 17h9M24 17h1M41 17h31M135 17h3M147 17h10M178 17h27M10 18h15M41 18h31M135 18h3M147 18h10M178 18h34M40 19h4M45 19h27M135 19h3M147 19h10M178 19h20M199 19h15M40 20h2M48 20h24M135 20h3M147 20h10M178 20h22M40 21h2M70 21h4M135 21h3M147 21h8M156 21h1M178 21h14M194 21h9M23 22h1M40 22h1M82 22h1M135 22h3M147 22h7M156 22h1M178 22h17M201 22h6M18 23h7M40 23h1M49 23h6M73 23h10M135 23h3M147 23h6M156 23h1M178 23h23M206 23h7M9 24h1M24 24h1M40 24h1M50 24h23M135 24h3M147 24h5M155 24h2M178 24h30M209 24h7M10 25h12M24 25h1M40 25h1M50 25h23M135 25h3M147 25h5M153 25h4M178 25h31M21 26h4M51 26h23M135 26h3M147 26h4M153 26h4M178 26h12M196 26h10M22 27h3M52 27h22M135 27h3M146 27h4M152 27h5M178 27h16M201 27h8M22 28h3M39 28h1M71 28h11M135 28h3M147 28h3M151 28h4M178 28h21M209 28h5M21 29h4M39 29h1M83 29h2M135 29h3M147 29h2M150 29h3M178 29h27M211 29h6M14 30h11M39 30h1M83 30h4M135 30h3M147 30h5M156 30h1M178 30h6M188 30h22M9 31h1M24 31h1M39 31h1M53 31h35M135 31h3M147 31h5M155 31h2M178 31h10M196 31h13M9 32h6M24 32h1M39 32h1M53 32h36M135 32h3M146 32h5M154 32h3M178 32h14M202 32h8M19 33h6M39 33h1M54 33h37M135 33h3M146 33h4M153 33h4M178 33h20M210 33h5M20 34h5M59 34h32M135 34h3M146 34h4M152 34h4M157 34h1M178 34h26M212 34h6M20 35h5M79 35h12M135 35h3M146 35h3M152 35h2M157 35h1M178 35h5M189 35h22M19 36h6M85 36h6M135 36h3M147 36h1M151 36h2M178 36h7M197 36h13M11 37h14M85 37h6M135 37h3M147 37h1M150 37h2M156 37h1M178 37h12M203 37h8M83 38h8M135 38h3M146 38h1M149 38h2M156 38h1M177 38h18M212 38h5M8 39h1M24 39h1M63 39h28M135 39h3M146 39h1M149 39h1M155 39h2M177 39h3M183 39h18M217 39h5M8 40h1M16 40h9M64 40h27M135 40h3M145 40h1M148 40h1M154 40h3M178 40h3M191 40h24M18 41h7M67 41h25M135 41h3M145 41h1M147 41h2M153 41h2M157 41h1M177 41h5M199 41h12M17 42h8M83 42h9M135 42h3M146 42h2M152 42h1M177 42h10M205 42h7M17 43h8M87 43h5M135 43h3M145 43h2M157 43h1M177 43h2M180 43h13M216 43h4M8 44h1M24 44h1M88 44h4M135 44h3M145 44h2M177 44h1M184 44h15M223 44h3M86 45h6M135 45h3M145 45h1M177 45h2M193 45h15M209 45h13M7 46h1M74 46h18M135 46h3M156 46h1M177 46h4M200 46h12M9 47h16M74 47h18M135 47h3M154 47h2M157 47h1M177 47h8M207 47h6M6 48h1M8 48h1M15 48h10M76 48h16M135 48h3M177 48h1M182 48h9M220 48h3M6 49h2M15 49h10M85 49h7M135 49h3M158 49h1M177 49h1M186 49h11M227 49h3M6 50h1M8 50h1M14 50h11M88 50h5M135 50h3M177 50h1M194 50h10M222 50h5M89 51h4M135 51h3M177 51h1M201 51h12M88 52h5M136 52h2M144 52h1M176 52h2M209 52h6M83 53h10M136 53h2M156 53h1M176 53h1M183 53h6M222 53h3M10 54h6M24 54h1M83 54h10M136 54h2M176 54h1M186 54h9M230 54h2M12 55h13M83 55h11M136 55h2M158 55h1M176 55h1M194 55h9M225 55h5M5 56h1M11 56h14M86 56h8M137 56h1M143 56h1M176 56h1M201 56h12M7 57h1M9 57h16M90 57h4M134 57h1M137 57h1M143 57h1M158 57h1M209 57h5M6 58h2M91 58h4M134 58h1M137 58h1M143 58h1M224 58h2M4 59h2M90 59h5M134 59h1M157 59h1M187 59h7M231 59h3M4 60h1M88 60h7M134 60h1M157 60h1M195 60h8M227 60h5M5 61h1M88 61h7M134 61h1M143 61h1M201 61h1M10 62h15M88 62h8M134 62h1M208 62h3M8 63h1M10 63h13M24 63h1M89 63h7M134 63h1M225 63h2M4 64h1M10 64h9M24 64h1M91 64h4M134 64h1M233 64h3M6 65h1M92 65h2M134 65h1M143 65h1M196 65h7M230 65h4M5 66h2M90 66h2M134 66h1M201 66h1M4 67h2M83 67h5M134 67h1M143 67h1M157 67h1M209 67h3M4 68h1M82 68h2M134 68h1M226 68h2M4 69h1M9 69h8M82 69h1M134 69h1M4 70h1M8 70h8M84 70h1M134 70h1M142 70h1M198 70h3M233 70h3M10 71h1M89 71h1M134 71h1M142 71h1M201 71h5M6 72h1M92 72h1M134 72h1M143 72h1M158 72h1M212 72h5M3 73h1M90 73h1M134 73h1M143 73h1M228 73h3M3 74h1M5 74h1M84 74h1M134 74h1M3 75h1M82 75h2M142 75h1M3 76h1M9 76h2M83 76h1M216 76h11M3 77h1M8 77h3M84 77h2M219 77h8M3 78h1M90 78h1M141 78h1M231 78h3M3 79h1M93 79h1M143 79h1M92 80h1M158 80h1M87 81h3M142 81h1M158 81h1M220 81h10M2 82h1M87 82h5M158 82h1M222 82h7M2 83h2M9 83h1M89 83h6M141 83h1M233 83h3M2 84h2M9 84h1M92 84h6M2 85h1M95 85h6M140 85h3M159 85h1M2 86h1M99 86h4M224 86h8M2 87h1M99 87h5M158 87h1M175 87h1M224 87h7M2 88h1M99 88h6M158 88h1M175 88h1M102 89h4M158 89h1M175 89h1M1 90h1M104 90h3M140 90h1M175 90h1M1 91h1M105 91h4M175 91h1M227 91h8M0 92h1M107 92h3M140 92h3M175 92h1M226 92h7M0 93h1M108 93h4M175 93h1M109 94h4M141 94h1M175 94h1M25 95h1M111 95h3M175 95h1M112 96h3M175 96h1M229 96h7M113 97h2M175 97h1M228 97h7M113 98h2M139 98h1M159 98h1M175 98h1M113 99h2M140 99h1M175 99h1M25 100h1M113 100h3M141 100h1M175 100h1M113 101h3M140 101h1M175 101h1M232 101h4M114 102h2M175 102h1M230 102h6M114 103h2M175 103h1M114 104h2M175 104h1M114 105h2M139 105h1M141 105h1M159 105h1M175 105h1M114 106h3M141 106h1M0 107h1M114 107h3M232 107h4M0 108h1M25 108h1M114 108h3M139 108h1M0 109h1M115 109h2M115 110h2M138 110h1M115 111h2M138 111h1M115 112h2M159 112h1M235 112h1M115 113h2M115 114h2M160 114h1M27 115h1M115 115h2M138 115h1M115 116h3M116 117h2M116 118h2M138 118h4M116 119h2M159 119h1M116 120h2M26 121h1M116 121h2M29 122h1M116 122h2M27 123h1M116 123h2M116 124h2M138 124h1M141 124h1M116 125h2M117 126h1M117 127h1M28 128h1M117 128h1M163 128h2M30 129h2M117 129h2M27 130h2M117 130h1M141 130h1M117 131h1M116 132h2M138 132h1M115 133h3M115 134h3M27 135h1M166 135h2M29 136h2M164 136h3M27 137h1M114 138h3M138 138h1M115 139h2M116 140h2M25 141h1M120 141h1M161 141h1M29 142h1M124 142h2M168 142h2M31 143h2M127 143h2M169 143h1M28 144h2M124 144h2M121 147h1M162 148h1M31 149h1M130 149h1M139 149h1M171 149h1M34 150h3M132 150h2M172 150h1M175 150h1M29 151h1M127 151h2M163 151h2M175 151h1M175 152h1M120 154h1M175 154h1M120 155h1M140 155h2M160 155h1M175 155h1M122 156h1M138 156h1M167 156h2M175 156h1M122 157h1M169 157h1M175 157h1M25 158h1M175 158h1M113 159h3M175 159h1M1 160h6M108 160h5M143 160h1M175 160h1M5 161h2M105 161h5M144 161h1M158 161h1M175 161h1M230 161h6M9 162h7M95 162h8M134 162h1M145 162h2M157 162h1M212 162h12M51 163h5M186 163h1M39 164h1M49 164h2M184 164h1"/><path stroke="#1e7676" d="M58 22h5M43 27h2M42 28h6M41 29h7M52 29h24M155 29h1M41 30h7M154 30h1M41 31h7M40 32h9M40 33h9M40 34h3M45 34h5M40 35h2M47 35h8M155 35h1M40 36h1M48 36h6M71 36h12M154 36h1M40 37h1M48 37h3M54 37h24M82 37h1M153 37h3M194 37h6M10 38h14M48 38h3M152 38h3M199 38h10M23 39h1M48 39h3M151 39h3M204 39h8M49 40h2M150 40h3M183 40h3M39 41h1M49 41h3M150 41h2M185 41h5M192 41h4M39 42h1M56 42h14M149 42h1M151 42h1M154 42h1M190 42h2M201 42h2M39 43h1M83 43h2M148 43h1M150 43h1M195 43h2M210 43h3M39 44h1M84 44h2M147 44h1M149 44h1M156 44h1M181 44h1M201 44h2M215 44h4M39 45h1M50 45h3M72 45h11M146 45h1M181 45h1M186 45h4M8 46h1M24 46h1M39 46h1M50 46h3M148 46h1M154 46h1M182 46h2M196 46h2M8 47h1M51 47h2M145 47h1M147 47h1M149 47h1M153 47h1M187 47h2M203 47h2M51 48h3M148 48h1M157 48h1M193 48h1M214 48h3M71 49h11M144 49h1M147 49h1M153 49h1M179 49h2M182 49h1M199 49h2M222 49h3M85 50h1M144 50h2M151 50h1M180 50h1M189 50h2M8 51h1M86 51h2M150 51h1M181 51h1M197 51h2M52 52h15M84 52h1M145 52h1M156 52h1M185 52h2M205 52h1M7 53h1M52 53h2M149 53h1M155 53h1M191 53h2M217 53h2M52 54h2M144 54h1M148 54h1M178 54h1M182 54h1M198 54h1M224 54h3M6 55h1M52 55h3M147 55h1M178 55h2M189 55h2M205 55h12M6 56h2M75 56h8M146 56h1M152 56h1M158 56h1M180 56h1M198 56h1M86 57h1M145 57h1M178 57h1M182 57h3M205 57h1M88 58h1M157 58h1M177 58h4M190 58h1M218 58h3M7 59h1M85 59h2M177 59h1M183 59h1M197 59h1M226 59h3M53 60h3M177 60h1M189 60h2M205 60h17M6 61h1M9 61h1M53 61h3M154 61h1M177 61h2M198 61h1M8 62h1M54 62h3M153 62h2M176 62h2M180 62h2M205 62h1M5 63h1M7 63h1M78 63h5M143 63h1M176 63h1M181 63h3M188 63h2M220 63h2M5 64h2M87 64h1M143 64h1M158 64h1M176 64h1M183 64h1M195 64h2M228 64h3M89 65h1M188 65h3M204 65h2M215 65h10M86 66h2M198 66h1M6 67h1M54 67h12M68 67h13M156 67h1M9 68h1M18 68h6M54 68h10M143 68h1M156 68h1M184 68h4M222 68h2M5 69h1M8 69h1M55 69h14M153 69h2M184 69h2M194 69h2M230 69h3M80 70h2M188 70h3M203 70h2M223 70h5M6 71h1M8 71h1M87 71h1M143 71h2M198 71h1M4 72h2M7 72h1M89 72h1M206 72h2M87 73h2M135 73h1M157 73h1M223 73h3M56 74h26M135 74h1M156 74h1M185 74h9M233 74h3M5 75h1M11 75h13M57 75h24M135 75h2M155 75h2M188 75h6M201 75h2M227 75h5M8 76h1M58 76h23M135 76h2M153 76h2M198 76h3M4 77h1M81 77h2M135 77h3M142 77h1M207 77h5M4 78h1M6 78h1M8 78h2M21 78h3M88 78h1M135 78h3M225 78h3M4 79h2M7 79h1M91 79h1M135 79h3M189 79h3M235 79h1M4 80h1M6 80h1M89 80h2M135 80h3M191 80h11M231 80h5M83 81h2M135 81h3M199 81h5M10 82h13M24 82h1M82 82h2M135 82h3M142 82h1M155 82h2M209 82h5M4 83h1M21 83h4M83 83h2M135 83h3M154 83h1M228 83h2M20 84h5M84 84h3M135 84h3M142 84h1M6 85h1M9 85h1M12 85h13M90 85h2M135 85h3M197 85h3M3 86h1M5 86h1M93 86h2M135 86h3M200 86h11M3 87h2M93 87h1M135 87h3M211 87h5M3 88h3M89 88h4M135 88h3M230 88h3M3 89h2M24 89h1M89 89h6M135 89h3M156 89h1M3 90h1M9 90h5M24 90h1M91 90h7M135 90h3M141 90h1M154 90h1M3 91h1M8 91h1M24 91h1M93 91h8M134 91h1M136 91h2M141 91h3M202 91h12M2 92h1M96 92h7M134 92h1M136 92h2M159 92h1M213 92h6M2 93h1M99 93h5M134 93h1M137 93h1M233 93h3M1 94h1M25 94h1M102 94h4M134 94h1M137 94h1M1 95h1M104 95h3M134 95h1M137 95h1M141 95h1M157 95h1M105 96h4M134 96h1M157 96h1M204 96h15M106 97h3M134 97h1M140 97h1M215 97h7M0 98h1M106 98h3M134 98h1M140 98h1M143 98h1M0 99h1M106 99h4M134 99h1M0 100h1M106 100h4M134 100h1M0 101h1M106 101h4M134 101h1M158 101h1M208 101h15M0 102h1M107 102h3M134 102h1M217 102h7M107 103h3M134 103h1M157 103h1M1 104h1M107 104h4M134 104h1M142 104h2M1 105h2M107 105h4M134 105h1M107 106h4M134 106h1M212 106h14M108 107h3M134 107h1M220 107h6M108 108h3M1 109h1M108 109h4M139 109h1M108 110h4M0 111h1M108 111h4M139 111h2M217 111h13M108 112h4M223 112h5M109 113h4M25 114h1M109 114h4M109 115h4M109 116h4M138 116h1M158 116h1M222 116h11M109 117h4M138 117h1M141 117h1M158 117h1M225 117h5M109 118h4M158 118h1M109 119h4M140 119h1M109 120h4M139 120h1M109 121h4M160 121h1M227 121h9M27 122h1M109 122h4M228 122h5M109 123h4M142 123h2M158 123h1M109 124h4M158 124h1M109 125h4M140 125h1M158 125h1M109 126h4M109 127h4M234 127h2M110 128h3M28 129h1M111 129h3M110 130h4M139 130h1M142 130h1M109 131h4M140 131h1M158 131h1M108 132h4M158 132h1M108 133h3M109 134h2M160 134h1M116 135h2M163 135h1M27 136h1M119 136h1M138 136h1M140 136h1M161 136h1M116 137h2M140 137h1M110 138h2M158 138h1M110 139h2M158 139h1M111 140h3M118 141h2M26 142h1M141 142h1M143 142h1M165 142h2M29 143h1M125 143h1M165 143h2M175 143h1M26 144h1M122 144h1M120 147h1M121 148h1M142 148h1M175 148h1M28 149h1M127 149h1M169 149h1M31 150h1M129 150h1M134 150h1M170 150h1M26 151h2M124 151h2M134 151h1M120 152h1M134 152h1M119 153h1M134 153h1M5 154h3M117 154h2M134 154h1M142 154h2M158 154h1M0 155h1M119 155h1M134 155h1M143 155h1M0 156h1M25 156h1M121 156h1M134 156h1M164 156h2M121 157h1M134 157h1M166 157h1M134 158h1M160 158h1M105 159h4M134 159h1M11 160h14M96 160h7M134 160h1M137 160h1M146 160h2M157 160h1M11 161h14M91 161h9M134 161h1M137 161h1M146 161h4M157 161h1M189 161h31M52 162h30M186 162h2M40 163h1M46 163h3M183 163h2M42 164h4M177 164h6"/><path stroke="#1e7979" d="M43 34h2M42 35h5M41 36h7M54 36h17M155 36h1M41 37h7M78 37h4M40 38h8M40 39h8M40 40h9M40 41h2M46 41h3M190 41h2M40 42h1M48 42h8M150 42h1M156 42h1M192 42h4M197 42h4M40 43h1M82 43h1M149 43h1M153 43h1M156 43h1M197 43h3M205 43h5M40 44h1M48 44h8M83 44h1M148 44h1M152 44h1M203 44h3M210 44h5M9 45h1M24 45h1M48 45h2M147 45h2M151 45h1M155 45h1M182 45h4M9 46h11M48 46h2M146 46h2M150 46h1M184 46h3M194 46h2M39 47h1M49 47h2M146 47h1M189 47h2M202 47h1M39 48h1M49 48h2M145 48h2M152 48h1M155 48h2M194 48h2M212 48h2M39 49h1M59 49h12M145 49h1M181 49h1M201 49h1M218 49h4M39 50h1M84 50h1M147 50h1M152 50h1M157 50h1M181 50h1M186 50h3M9 51h15M39 51h1M85 51h1M146 51h1M151 51h1M182 51h1M196 51h1M8 52h1M39 52h1M50 52h2M67 52h11M83 52h1M149 52h2M187 52h1M203 52h2M24 53h1M39 53h1M50 53h2M148 53h1M193 53h1M214 53h3M7 54h2M50 54h2M147 54h1M179 54h3M199 54h2M221 54h3M7 55h1M51 55h1M144 55h1M180 55h1M186 55h3M63 56h12M153 56h1M181 56h1M196 56h2M85 57h1M144 57h1M146 57h1M151 57h1M185 57h2M204 57h1M8 58h1M24 58h1M86 58h2M145 58h1M150 58h1M191 58h2M216 58h2M52 59h13M84 59h1M149 59h1M178 59h5M198 59h2M223 59h3M7 60h1M51 60h2M144 60h1M155 60h1M178 60h2M186 60h3M52 61h1M179 61h2M196 61h2M6 62h1M52 62h2M147 62h1M178 62h2M182 62h3M204 62h1M6 63h1M66 63h12M146 63h1M152 63h1M177 63h4M190 63h1M217 63h3M86 64h1M144 64h2M177 64h1M181 64h2M197 64h2M225 64h3M24 65h1M87 65h2M176 65h2M186 65h2M206 65h9M7 66h1M85 66h1M144 66h1M176 66h2M196 66h2M53 67h1M176 67h1M204 67h2M6 68h1M53 68h1M154 68h1M176 68h1M182 68h2M188 68h2M219 68h3M53 69h2M143 69h1M183 69h1M196 69h1M227 69h3M5 70h3M66 70h14M143 70h1M186 70h2M205 70h18M5 71h1M86 71h1M196 71h2M88 72h1M144 72h1M205 72h1M86 73h1M184 73h4M221 73h2M6 74h1M54 74h2M143 74h1M184 74h1M194 74h2M230 74h3M9 75h1M54 75h3M154 75h1M186 75h2M203 75h2M221 75h6M5 76h1M54 76h4M196 76h2M5 77h1M7 77h1M69 77h12M205 77h2M5 78h1M86 78h2M144 78h1M223 78h2M89 79h2M186 79h3M192 79h2M232 79h3M88 80h1M143 80h1M157 80h1M187 80h4M202 80h2M226 80h5M59 81h24M156 81h1M197 81h2M5 82h1M9 82h1M23 82h1M60 82h22M206 82h3M8 83h1M63 83h20M142 83h1M153 83h1M225 83h3M4 84h1M7 84h1M83 84h1M143 84h2M4 85h1M8 85h1M88 85h2M191 85h6M200 85h2M230 85h6M4 86h1M7 86h1M92 86h1M143 86h1M158 86h1M197 86h3M6 87h1M91 87h2M207 87h4M86 88h3M142 88h1M227 88h3M10 89h14M86 89h3M155 89h1M14 90h10M87 90h4M153 90h1M196 90h5M235 90h1M9 91h15M89 91h4M135 91h1M198 91h4M7 92h1M24 92h1M92 92h4M135 92h1M143 92h1M208 92h5M6 93h1M95 93h4M135 93h2M230 93h3M2 94h1M96 94h6M135 94h2M97 95h7M135 95h2M1 96h1M100 96h5M135 96h3M155 96h2M199 96h5M1 97h1M102 97h4M135 97h3M141 97h1M143 97h2M153 97h3M210 97h5M1 98h1M102 98h4M135 98h3M233 98h3M1 99h1M102 99h4M135 99h3M159 99h1M1 100h1M103 100h3M135 100h3M1 101h1M25 101h1M103 101h3M135 101h3M141 101h1M201 101h7M1 102h1M103 102h4M135 102h3M140 102h1M157 102h1M212 102h5M1 103h1M103 103h4M135 103h3M156 103h1M2 104h1M103 104h4M135 104h3M140 104h2M153 104h3M104 105h3M135 105h3M2 106h1M6 106h1M104 106h3M135 106h3M202 106h10M2 107h1M5 107h2M104 107h4M135 107h3M214 107h6M2 108h3M104 108h4M134 108h4M158 108h1M2 109h2M104 109h4M134 109h4M157 109h1M1 110h3M104 110h4M134 110h1M136 110h2M139 110h1M143 110h1M157 110h1M1 111h2M105 111h3M134 111h1M136 111h2M157 111h1M203 111h14M0 112h1M105 112h3M134 112h1M137 112h1M216 112h7M105 113h4M134 113h1M137 113h1M105 114h4M134 114h1M137 114h1M105 115h4M134 115h1M137 115h1M139 115h1M25 116h1M105 116h4M134 116h1M137 116h1M203 116h19M105 117h4M134 117h1M137 117h1M139 117h1M143 117h1M157 117h1M220 117h5M105 118h4M134 118h1M137 118h1M157 118h1M105 119h4M134 119h1M137 119h1M105 120h4M134 120h1M137 120h1M106 121h3M134 121h1M137 121h1M203 121h2M206 121h21M26 122h1M106 122h3M134 122h1M137 122h2M159 122h1M223 122h5M105 123h4M134 123h1M137 123h2M105 124h4M134 124h1M137 124h1M157 124h1M105 125h4M134 125h1M137 125h1M157 125h1M105 126h4M134 126h1M137 126h1M139 126h1M228 126h8M105 127h4M134 127h1M137 127h2M230 127h4M108 128h2M134 128h1M137 128h1M27 129h1M109 129h2M134 129h1M137 129h1M143 129h2M107 130h3M134 130h1M158 130h1M106 131h3M134 131h1M105 132h3M105 133h3M107 134h2M114 135h2M144 135h2M161 135h2M26 136h1M118 136h1M139 136h1M114 137h2M107 138h3M107 139h3M109 140h2M158 140h1M116 141h2M160 141h1M122 142h1M138 142h3M164 142h1M28 143h1M123 143h2M163 143h2M118 145h2M158 145h1M118 146h2M158 146h1M119 147h1M134 147h1M158 147h1M134 148h1M143 148h1M160 148h1M27 149h1M125 149h2M134 149h1M137 149h1M141 149h1M167 149h2M30 150h1M127 150h2M135 150h4M168 150h2M123 151h1M135 151h3M135 152h3M158 152h1M8 153h1M24 153h1M117 153h2M135 153h3M158 153h1M3 154h1M8 154h10M24 154h1M115 154h2M135 154h3M139 154h3M144 154h1M3 155h1M117 155h2M135 155h3M144 155h1M135 156h3M139 156h1M162 156h2M189 156h10M225 156h11M25 157h1M135 157h3M164 157h2M118 158h2M135 158h3M9 159h10M24 159h1M101 159h4M135 159h3M157 159h1M67 160h29M135 160h2M148 160h9M54 161h37M135 161h2M150 161h7M187 161h2M39 162h1M50 162h2M185 162h1M41 163h5M176 163h2M182 163h1"/><path stroke="#1e7d7d" d="M42 41h4M41 42h7M155 42h1M196 42h1M41 43h13M64 43h18M154 43h1M200 43h5M41 44h7M56 44h19M82 44h1M206 44h4M10 45h12M40 45h8M20 46h4M40 46h8M153 46h1M187 46h7M40 47h3M45 47h4M150 47h1M152 47h1M191 47h2M199 47h3M40 48h2M46 48h3M149 48h1M196 48h2M209 48h3M40 49h1M50 49h9M148 49h1M151 49h1M154 49h1M157 49h1M202 49h2M213 49h5M40 50h1M83 50h1M150 50h1M182 50h4M48 51h4M84 51h1M183 51h2M194 51h2M24 52h1M48 52h2M78 52h5M188 52h2M201 52h2M8 53h1M48 53h2M145 53h1M194 53h1M211 53h3M39 54h1M48 54h2M153 54h1M201 54h2M217 54h4M39 55h1M49 55h2M146 55h1M148 55h1M152 55h1M155 55h1M157 55h1M181 55h1M183 55h3M39 56h1M56 56h7M144 56h2M147 56h1M182 56h1M194 56h2M39 57h1M84 57h1M187 57h1M202 57h2M10 58h10M39 58h1M85 58h1M193 58h1M213 58h3M39 59h1M50 59h2M65 59h11M83 59h1M150 59h1M156 59h1M200 59h1M220 59h3M24 60h1M39 60h1M50 60h1M148 60h2M180 60h1M184 60h2M7 61h2M39 61h1M50 61h2M147 61h2M181 61h1M195 61h1M7 62h1M50 62h2M146 62h1M155 62h1M185 62h1M203 62h1M57 63h9M145 63h1M153 63h1M158 63h1M191 63h2M214 63h3M84 64h2M151 64h1M178 64h3M199 64h1M222 64h3M8 65h1M86 65h1M150 65h1M157 65h1M178 65h2M184 65h2M51 66h13M84 66h1M149 66h1M178 66h3M195 66h1M7 67h1M51 67h2M148 67h1M177 67h8M203 67h1M51 68h2M147 68h1M177 68h5M190 68h1M216 68h3M6 69h2M51 69h2M146 69h1M155 69h1M176 69h2M181 69h2M197 69h2M225 69h2M57 70h9M145 70h1M152 70h1M176 70h1M184 70h2M85 71h1M151 71h1M158 71h1M176 71h1M195 71h1M24 72h1M87 72h1M150 72h1M204 72h1M7 73h1M85 73h1M149 73h1M182 73h2M188 73h2M218 73h3M52 74h2M148 74h1M183 74h1M196 74h2M227 74h3M6 75h1M52 75h2M143 75h1M147 75h1M184 75h2M205 75h16M52 76h2M143 76h1M146 76h1M155 76h1M195 76h1M6 77h1M57 77h12M143 77h3M152 77h1M204 77h1M85 78h1M184 78h4M220 78h3M88 79h1M184 79h2M194 79h2M229 79h3M86 80h2M185 80h2M204 80h2M207 80h1M214 80h12M6 81h1M54 81h5M195 81h2M55 82h5M154 82h1M205 82h1M5 83h1M56 83h7M145 83h1M155 83h1M222 83h3M5 84h2M67 84h16M152 84h1M186 84h8M232 84h4M5 85h1M87 85h1M187 85h4M202 85h2M225 85h5M91 86h1M195 86h2M89 87h2M205 87h2M84 88h2M156 88h1M225 88h2M9 89h1M83 89h3M142 89h1M146 89h1M154 89h1M4 90h1M8 90h1M84 90h3M142 90h1M144 90h1M155 90h1M191 90h5M201 90h2M229 90h6M7 91h1M85 91h4M144 91h1M152 91h1M196 91h2M3 92h1M6 92h1M10 92h14M90 92h2M206 92h2M5 93h1M93 93h2M227 93h3M5 94h1M93 94h3M142 94h1M2 95h1M92 95h5M195 95h6M234 95h2M2 96h1M93 96h7M141 96h1M197 96h2M2 97h1M24 97h1M94 97h8M142 97h1M157 97h1M206 97h4M2 98h1M24 98h1M95 98h7M152 98h1M230 98h3M2 99h1M24 99h1M95 99h7M97 100h6M142 100h1M97 101h6M198 101h3M96 102h7M207 102h5M2 103h2M96 103h7M140 103h1M144 103h1M155 103h1M233 103h3M3 104h1M24 104h1M97 104h6M156 104h2M8 105h1M24 105h1M97 105h7M152 105h1M5 106h1M7 106h1M24 106h1M98 106h6M159 106h1M198 106h4M3 107h2M99 107h5M141 107h1M159 107h1M209 107h5M5 108h1M99 108h5M140 108h1M4 109h1M99 109h5M145 109h1M24 110h1M99 110h5M135 110h1M141 110h2M144 110h1M155 110h2M9 111h1M24 111h1M100 111h5M135 111h1M143 111h1M153 111h4M199 111h4M1 112h1M24 112h1M100 112h5M135 112h2M152 112h1M211 112h5M0 113h2M100 113h5M135 113h2M0 114h1M102 114h3M135 114h2M102 115h3M135 115h2M146 115h1M101 116h4M135 116h2M139 116h1M144 116h1M198 116h5M100 117h5M135 117h2M140 117h1M156 117h1M214 117h6M100 118h5M135 118h2M142 118h1M153 118h4M100 119h5M135 119h2M152 119h1M101 120h4M135 120h2M25 121h1M103 121h3M135 121h2M147 121h1M197 121h6M205 121h1M104 122h2M135 122h2M145 122h1M218 122h5M102 123h3M135 123h2M139 123h1M141 123h1M101 124h4M135 124h2M142 124h1M156 124h1M101 125h4M135 125h2M153 125h4M101 126h4M135 126h2M151 126h2M196 126h32M103 127h2M135 127h2M149 127h1M226 127h4M106 128h2M135 128h2M146 128h1M160 128h1M26 129h1M107 129h2M135 129h2M138 129h1M142 129h1M105 130h2M135 130h3M103 131h3M137 131h1M156 131h2M201 131h1M103 132h2M134 132h1M139 132h1M157 132h1M103 133h2M138 133h1M150 133h1M158 133h1M105 134h2M147 134h2M112 135h2M116 136h2M143 136h1M160 136h1M112 137h2M105 138h2M157 138h1M105 139h2M157 139h1M106 140h3M115 141h1M145 141h3M121 142h1M144 142h1M162 142h2M27 143h1M141 143h1M161 143h2M121 144h1M116 145h2M24 146h1M116 146h2M134 146h1M6 147h1M24 147h1M117 147h2M137 147h1M120 148h1M135 148h4M141 148h1M144 148h1M26 149h1M124 149h1M135 149h2M165 149h2M29 150h1M126 150h1M166 150h2M122 151h1M160 151h1M189 151h5M119 152h1M7 153h1M9 153h15M115 153h2M18 154h6M113 154h2M145 154h3M157 154h1M4 155h1M115 155h2M145 155h1M159 155h1M1 156h1M120 156h1M161 156h1M188 156h1M199 156h26M120 157h1M162 157h2M230 157h6M116 158h2M7 159h2M19 159h5M97 159h4M138 159h1M155 159h2M51 160h16M39 161h1M51 161h3M186 161h1M40 162h1M47 162h3M184 162h1M178 163h4"/><path stroke="#1e8080" d="M54 43h10M155 43h1M75 44h7M153 44h3M22 45h2M152 45h3M151 46h2M43 47h2M151 47h1M193 47h6M42 48h4M150 48h2M198 48h11M41 49h9M149 49h2M204 49h9M41 50h8M82 50h1M148 50h2M153 50h1M40 51h8M52 51h4M83 51h1M147 51h1M149 51h1M156 51h1M185 51h9M9 52h1M40 52h8M146 52h1M148 52h1M190 52h2M199 52h2M9 53h15M40 53h8M146 53h2M150 53h1M154 53h1M195 53h2M208 53h3M40 54h3M45 54h3M145 54h2M149 54h1M203 54h2M212 54h5M40 55h2M46 55h3M145 55h1M156 55h1M182 55h1M40 56h1M49 56h7M151 56h1M154 56h1M183 56h3M191 56h3M40 57h1M83 57h1M150 57h1M152 57h1M157 57h1M188 57h2M200 57h2M9 58h1M20 58h4M40 58h1M49 58h2M84 58h1M146 58h1M149 58h1M151 58h1M194 58h2M210 58h3M8 59h1M47 59h3M76 59h7M145 59h1M201 59h2M215 59h5M8 60h1M48 60h2M181 60h3M48 61h2M144 61h1M153 61h1M182 61h1M192 61h3M39 62h1M48 62h2M144 62h1M152 62h1M156 62h2M186 62h2M201 62h2M39 63h1M51 63h6M144 63h1M193 63h1M212 63h2M39 64h1M83 64h1M146 64h1M200 64h2M218 64h4M9 65h15M39 65h1M85 65h1M145 65h1M180 65h4M39 66h1M49 66h2M64 66h12M83 66h1M156 66h1M181 66h1M192 66h3M24 67h1M39 67h1M49 67h2M144 67h1M155 67h1M185 67h1M202 67h1M7 68h2M39 68h1M50 68h1M148 68h1M191 68h2M213 68h3M39 69h1M50 69h1M147 69h1M178 69h3M199 69h2M221 69h4M39 70h1M52 70h5M144 70h1M146 70h1M153 70h1M158 70h1M177 70h3M183 70h1M39 71h1M84 71h1M145 71h1M177 71h3M192 71h3M8 72h1M86 72h1M176 72h8M202 72h2M51 73h14M84 73h1M176 73h2M180 73h2M190 73h1M215 73h3M7 74h1M24 74h1M51 74h1M176 74h1M181 74h2M198 74h1M224 74h3M7 75h2M51 75h1M176 75h1M183 75h1M6 76h2M51 76h1M145 76h1M192 76h3M53 77h4M153 77h1M202 77h2M84 78h1M151 78h1M183 78h1M188 78h2M217 78h3M8 79h1M24 79h1M87 79h1M150 79h1M183 79h1M196 79h2M226 79h3M7 80h1M85 80h1M149 80h1M184 80h1M206 80h1M208 80h6M52 81h2M143 81h1M147 81h2M193 81h2M6 82h1M52 82h3M146 82h1M203 82h2M6 83h2M53 83h3M143 83h1M157 83h1M184 83h3M219 83h3M57 84h10M153 84h1M184 84h2M194 84h2M229 84h3M86 85h1M144 85h1M151 85h1M185 85h2M204 85h21M24 86h1M89 86h2M149 86h1M193 86h2M88 87h1M148 87h1M157 87h1M204 87h1M6 88h1M59 88h25M147 88h1M222 88h3M5 89h1M60 89h23M186 89h8M232 89h4M63 90h21M143 90h1M145 90h1M156 90h2M187 90h4M203 90h2M223 90h6M4 91h1M83 91h2M153 91h1M194 91h2M8 92h2M88 92h2M204 92h2M3 93h1M92 93h1M149 93h1M158 93h1M225 93h2M3 94h2M91 94h2M148 94h1M3 95h2M88 95h4M142 95h1M146 95h2M156 95h1M191 95h4M201 95h2M228 95h6M3 96h1M24 96h1M88 96h5M142 96h1M145 96h1M154 96h1M194 96h3M3 97h1M9 97h9M89 97h5M156 97h1M205 97h1M8 98h10M89 98h6M153 98h1M227 98h3M6 99h2M91 99h4M150 99h1M2 100h1M5 100h2M94 100h3M149 100h1M193 100h9M233 100h3M2 101h1M94 101h3M147 101h1M195 101h3M2 102h3M91 102h5M141 102h1M146 102h1M205 102h2M24 103h1M91 103h5M141 103h3M145 103h1M154 103h1M230 103h3M8 104h15M91 104h6M3 105h1M7 105h1M9 105h15M91 105h6M143 105h1M153 105h1M195 105h5M3 106h1M8 106h16M93 106h5M142 106h1M150 106h1M196 106h2M96 107h3M148 107h1M206 107h3M96 108h3M147 108h1M233 108h3M94 109h5M140 109h1M10 110h13M93 110h6M140 110h1M8 111h1M10 111h14M93 111h7M196 111h3M2 112h1M7 112h9M93 112h7M142 112h1M151 112h1M153 112h1M206 112h5M6 113h1M24 113h1M96 113h4M141 113h1M150 113h1M159 113h1M1 114h1M99 114h3M140 114h1M148 114h1M0 115h1M25 115h1M99 115h3M0 116h1M96 116h5M143 116h1M157 116h1M195 116h3M94 117h6M155 117h1M208 117h6M94 118h6M94 119h6M141 119h1M151 119h1M153 119h1M158 119h1M97 120h4M149 120h2M101 121h2M139 121h1M194 121h3M102 122h2M144 122h1M212 122h6M25 123h1M99 123h3M140 123h1M96 124h5M155 124h1M96 125h5M97 126h4M153 126h1M158 126h1M192 126h4M100 127h3M148 127h1M221 127h5M105 128h1M138 128h1M147 128h1M106 129h1M103 130h2M100 131h3M135 131h2M141 131h1M192 131h9M202 131h13M229 131h7M100 132h3M137 132h1M152 132h5M232 132h4M100 133h3M134 133h1M151 133h4M103 134h2M149 134h1M25 135h1M111 135h1M143 135h1M146 135h1M114 136h2M190 136h14M25 137h1M111 137h1M141 137h1M234 137h2M103 138h2M139 138h1M156 138h1M103 139h2M152 139h5M104 140h2M149 140h7M113 141h2M148 141h1M189 141h14M161 142h1M26 143h1M122 143h1M159 144h1M114 145h2M134 145h1M157 145h1M8 146h3M114 146h2M157 146h1M189 146h4M5 147h1M7 147h2M115 147h2M135 147h2M147 147h2M157 147h1M139 148h2M145 148h3M123 149h1M142 149h1M164 149h1M27 150h2M124 150h2M165 150h1M188 151h1M194 151h8M117 152h2M157 152h1M6 153h1M113 153h2M149 153h5M156 153h2M2 154h1M39 154h1M108 154h5M148 154h9M5 155h1M39 155h1M113 155h2M146 155h1M39 156h1M119 156h1M187 156h1M39 157h1M161 157h1M217 157h13M39 158h1M115 158h1M0 159h3M5 159h2M39 159h1M50 159h47M153 159h2M39 160h1M49 160h2M48 161h3M185 161h1M41 162h6M176 162h1M183 162h1"/><path stroke="#1e867b" d="M155 49h2M49 50h5M62 50h20M156 50h1M56 51h19M82 51h1M148 51h1M152 51h1M10 52h14M147 52h1M151 52h1M155 52h1M192 52h7M197 53h11M43 54h2M205 54h7M42 55h4M41 56h8M148 56h1M157 56h1M186 56h5M41 57h9M79 57h4M147 57h1M190 57h3M198 57h2M41 58h8M51 58h3M83 58h1M196 58h2M205 58h5M24 59h1M40 59h7M148 59h1M203 59h3M211 59h4M9 60h15M40 60h8M145 60h1M147 60h1M154 60h1M40 61h8M146 61h1M183 61h9M40 62h3M45 62h3M145 62h1M148 62h1M188 62h2M199 62h2M40 63h2M47 63h4M147 63h1M151 63h1M154 63h1M194 63h2M209 63h3M40 64h1M150 64h1M152 64h1M202 64h2M214 64h4M40 65h1M48 65h3M84 65h1M149 65h1M151 65h1M8 66h1M24 66h1M40 66h1M47 66h2M76 66h7M148 66h1M150 66h1M182 66h3M188 66h4M8 67h2M47 67h2M147 67h1M149 67h1M186 67h3M200 67h2M48 68h2M144 68h1M146 68h1M153 68h1M193 68h1M210 68h3M48 69h2M144 69h2M152 69h1M156 69h2M201 69h1M216 69h5M49 70h3M151 70h1M180 70h3M83 71h1M150 71h1M180 71h2M189 71h3M9 72h15M39 72h1M85 72h1M149 72h1M157 72h1M184 72h3M200 72h2M8 73h1M39 73h1M49 73h2M65 73h13M82 73h2M144 73h1M148 73h1M178 73h2M191 73h2M212 73h3M39 74h1M49 74h2M147 74h1M155 74h1M177 74h4M199 74h2M220 74h4M39 75h1M49 75h2M146 75h1M177 75h2M181 75h2M39 76h1M49 76h2M144 76h1M156 76h2M176 76h3M189 76h3M39 77h1M50 77h3M158 77h1M176 77h2M180 77h4M201 77h1M39 78h1M83 78h1M150 78h1M158 78h1M176 78h1M180 78h3M190 78h1M213 78h4M9 79h13M39 79h1M86 79h1M144 79h1M149 79h1M176 79h1M181 79h2M198 79h1M223 79h3M50 80h12M84 80h1M148 80h1M183 80h1M7 81h1M24 81h1M50 81h2M190 81h3M7 82h2M50 82h2M143 82h1M147 82h1M201 82h2M51 83h2M144 83h1M146 83h1M156 83h1M183 83h1M187 83h2M216 83h3M52 84h5M145 84h1M158 84h1M183 84h1M196 84h2M226 84h3M84 85h2M150 85h1M184 85h1M8 86h1M88 86h1M150 86h1M190 86h3M7 87h1M86 87h2M143 87h1M149 87h1M202 87h2M24 88h1M53 88h6M185 88h1M219 88h3M6 89h1M8 89h1M54 89h6M143 89h1M145 89h1M184 89h2M194 89h2M229 89h3M5 90h1M7 90h1M56 90h7M185 90h2M205 90h18M5 91h2M61 91h22M191 91h3M4 92h2M86 92h2M150 92h2M203 92h1M4 93h1M7 93h1M90 93h2M143 93h1M222 93h3M6 94h1M89 94h2M147 94h1M157 94h1M186 94h7M232 94h4M84 95h4M186 95h5M203 95h2M219 95h9M4 96h1M10 96h10M83 96h5M143 96h2M146 96h1M192 96h2M8 97h1M18 97h6M83 97h6M203 97h2M3 98h1M7 98h1M18 98h6M83 98h6M151 98h1M224 98h3M9 99h15M88 99h3M143 99h1M151 99h1M93 100h1M148 100h1M189 100h4M202 100h2M226 100h7M4 101h2M92 101h2M142 101h1M148 101h1M193 101h2M87 102h4M145 102h1M156 102h1M204 102h1M10 103h14M83 103h8M227 103h3M23 104h1M83 104h8M144 104h1M6 105h1M83 105h8M151 105h1M158 105h1M191 105h4M200 105h3M232 105h4M4 106h1M90 106h3M193 106h3M7 107h1M94 107h2M149 107h1M204 107h2M6 108h1M94 108h2M141 108h1M146 108h1M229 108h4M90 109h4M141 109h1M144 109h1M146 109h1M9 110h1M23 110h1M84 110h2M88 110h5M154 110h1M192 110h9M3 111h1M84 111h2M88 111h5M193 111h3M16 112h8M88 112h5M154 112h1M158 112h1M205 112h1M5 113h1M7 113h1M93 113h3M149 113h1M233 113h3M5 114h1M97 114h2M147 114h1M159 114h1M98 115h1M145 115h1M147 115h1M158 115h1M191 115h8M94 116h2M140 116h3M145 116h1M192 116h3M0 117h1M89 117h5M154 117h1M206 117h2M89 118h5M152 118h1M90 119h4M154 119h1M0 120h1M95 120h2M140 120h1M159 120h1M189 120h6M0 121h1M100 121h1M146 121h1M148 121h1M190 121h4M100 122h2M139 122h1M146 122h1M207 122h5M97 123h2M144 123h1M92 124h4M93 125h3M141 125h1M152 125h1M187 125h5M93 126h4M150 126h1M154 126h1M189 126h3M98 127h2M150 127h1M215 127h6M25 128h1M103 128h2M145 128h1M105 129h1M139 129h1M141 129h1M145 129h1M159 129h1M25 130h1M101 130h2M143 130h1M97 131h3M155 131h1M189 131h3M215 131h14M97 132h3M135 132h2M228 132h4M97 133h3M137 133h1M149 133h1M155 133h1M102 134h1M134 134h1M146 134h1M109 135h2M138 135h1M142 135h1M160 135h1M112 136h2M188 136h2M204 136h32M109 137h2M158 137h1M229 137h5M100 138h3M100 139h3M138 139h1M24 140h1M101 140h3M148 140h1M156 140h2M111 141h2M144 141h1M149 141h1M188 141h1M203 141h33M120 142h1M145 142h1M25 144h1M120 144h1M139 144h1M111 145h3M156 145h1M11 146h13M110 146h4M135 146h1M137 146h1M151 146h6M188 146h1M193 146h9M9 147h15M113 147h2M146 147h1M149 147h8M3 148h1M119 148h1M148 148h1M122 149h1M162 149h2M26 150h1M39 150h1M123 150h1M163 150h2M39 151h1M121 151h1M187 151h1M202 151h34M39 152h1M114 152h3M39 153h1M108 153h5M148 153h1M154 153h2M101 154h7M6 155h1M24 155h1M108 155h5M147 155h1M118 156h1M140 156h1M186 156h1M0 157h1M119 157h1M187 157h5M199 157h18M40 158h1M113 158h2M159 158h1M3 159h2M40 159h2M46 159h4M139 159h1M152 159h1M40 160h2M45 160h4M40 161h8M184 161h1M177 162h2M180 162h3"/><path stroke="#1e8d76" d="M54 50h8M154 50h1M75 51h7M154 52h1M151 53h1M153 53h1M150 54h1M152 54h1M149 55h3M149 56h2M50 57h4M55 57h24M148 57h2M153 57h1M193 57h5M54 58h20M82 58h1M147 58h2M156 58h1M198 58h7M9 59h1M146 59h2M151 59h1M155 59h1M206 59h5M146 60h1M150 60h1M145 61h1M149 61h1M43 62h2M190 62h9M42 63h5M196 63h3M203 63h6M41 64h11M70 64h13M157 64h1M204 64h10M41 65h7M51 65h3M83 65h1M146 65h1M9 66h1M41 66h6M145 66h1M185 66h3M10 67h14M40 67h7M154 67h1M189 67h3M197 67h3M40 68h8M194 68h3M205 68h5M40 69h8M202 69h3M211 69h5M40 70h9M154 70h1M40 71h3M75 71h8M146 71h1M152 71h1M182 71h7M40 72h2M46 72h6M84 72h1M145 72h1M151 72h1M187 72h2M198 72h2M24 73h1M40 73h2M46 73h3M78 73h4M150 73h1M156 73h1M193 73h2M208 73h4M8 74h16M40 74h1M46 74h3M144 74h1M149 74h1M201 74h2M214 74h6M40 75h1M47 75h2M144 75h1M148 75h1M153 75h1M179 75h2M47 76h2M147 76h1M152 76h1M179 76h10M48 77h2M146 77h1M151 77h1M154 77h1M178 77h2M184 77h3M199 77h2M79 78h4M145 78h1M177 78h3M191 78h2M210 78h3M22 79h2M85 79h1M177 79h4M199 79h3M218 79h5M8 80h1M24 80h1M39 80h1M48 80h2M62 80h15M83 80h1M176 80h3M180 80h3M8 81h5M39 81h1M48 81h2M155 81h1M176 81h2M186 81h4M39 82h1M48 82h2M145 82h1M153 82h1M176 82h2M180 82h3M199 82h2M39 83h1M49 83h2M152 83h1M176 83h1M181 83h2M189 83h2M212 83h4M39 84h1M49 84h3M151 84h1M154 84h1M176 84h1M181 84h2M198 84h2M222 84h4M83 85h1M158 85h1M182 85h2M9 86h15M86 86h2M187 86h3M51 87h2M85 87h1M200 87h2M7 88h1M50 88h3M143 88h1M146 88h1M148 88h1M183 88h2M186 88h3M215 88h4M7 89h1M50 89h4M147 89h1M183 89h1M196 89h2M226 89h3M6 90h1M51 90h5M152 90h1M183 90h2M55 91h6M151 91h1M154 91h1M158 91h1M188 91h3M84 92h2M201 92h2M89 93h1M148 93h1M150 93h1M218 93h4M87 94h2M184 94h2M193 94h2M229 94h3M5 95h1M59 95h25M184 95h2M205 95h14M9 96h1M20 96h4M58 96h25M189 96h3M59 97h24M145 97h1M152 97h1M201 97h2M61 98h22M144 98h1M154 98h1M158 98h1M221 98h3M3 99h1M5 99h1M8 99h1M86 99h2M185 99h8M232 99h4M3 100h2M91 100h2M186 100h3M204 100h22M3 101h1M90 101h2M189 101h4M62 102h16M83 102h4M142 102h1M147 102h1M202 102h2M4 103h1M9 103h1M60 103h23M223 103h4M4 104h1M60 104h23M152 104h1M187 104h3M4 105h2M61 105h22M154 105h1M187 105h4M203 105h2M224 105h8M87 106h3M149 106h1M151 106h1M190 106h3M24 107h1M93 107h1M142 107h1M202 107h2M93 108h1M226 108h3M5 109h1M86 109h4M142 109h2M4 110h1M60 110h24M86 110h2M187 110h5M201 110h2M230 110h6M60 111h24M86 111h2M152 111h1M189 111h4M6 112h1M62 112h26M203 112h2M2 113h1M9 113h15M91 113h2M229 113h4M4 114h1M96 114h1M141 114h1M149 114h1M1 115h1M4 115h1M96 115h2M140 115h1M186 115h5M199 115h2M1 116h3M92 116h2M188 116h4M1 117h2M59 117h30M204 117h2M0 118h2M24 118h1M59 118h30M234 118h2M0 119h2M24 119h1M71 119h19M150 119h1M93 120h2M148 120h1M186 120h3M195 120h3M98 121h2M187 121h3M0 122h1M25 122h1M99 122h1M143 122h1M205 122h2M95 123h2M157 123h1M87 124h5M154 124h1M24 125h1M88 125h5M186 125h1M192 125h2M24 126h1M89 126h4M140 126h1M155 126h1M187 126h2M96 127h2M139 127h1M147 127h1M159 127h1M210 127h5M102 128h1M103 129h2M140 129h1M100 130h1M187 130h2M95 131h2M154 131h1M187 131h2M0 132h1M24 132h1M95 132h2M224 132h4M24 133h1M95 133h2M135 133h2M156 133h2M5 134h1M100 134h2M137 134h2M150 134h1M159 134h1M3 135h1M108 135h1M134 135h1M139 135h1M141 135h1M147 135h1M2 136h1M25 136h1M111 136h1M144 136h1M187 136h1M1 137h1M107 137h2M224 137h5M0 138h1M98 138h2M155 138h1M24 139h1M97 139h3M151 139h1M6 140h2M98 140h3M4 141h2M108 141h3M138 141h1M143 141h1M159 141h1M187 141h1M25 142h1M231 142h5M121 143h1M134 143h1M142 143h1M160 143h1M134 144h1M107 145h4M137 145h1M39 146h1M106 146h4M136 146h1M187 146h1M202 146h13M230 146h6M39 147h1M108 147h5M39 148h1M116 148h3M39 149h1M143 149h1M161 149h1M139 150h1M161 150h2M25 151h1M186 151h1M24 152h1M40 152h1M111 152h3M156 152h1M227 152h9M5 153h1M40 153h1M101 153h7M1 154h1M40 154h2M47 154h7M87 154h14M7 155h1M40 155h3M105 155h3M148 155h1M2 156h1M40 156h1M116 156h2M141 156h1M160 156h1M185 156h1M40 157h1M117 157h2M138 157h1M185 157h2M192 157h7M0 158h1M41 158h2M109 158h4M42 159h4M150 159h2M42 160h3M176 160h1M176 161h1M182 161h2M179 162h1"/><path stroke="#1e9371" d="M155 50h1M153 51h3M152 52h2M152 53h1M151 54h1M155 56h2M54 57h1M156 57h1M74 58h8M152 58h1M10 59h14M153 60h1M152 61h1M149 62h1M151 62h1M148 63h1M150 63h1M157 63h1M199 63h4M52 64h18M147 64h1M149 64h1M153 64h1M54 65h29M147 65h2M10 66h14M146 66h2M145 67h2M192 67h5M145 68h1M149 68h1M197 68h8M148 69h1M205 69h6M147 70h1M43 71h11M55 71h20M42 72h4M52 72h5M83 72h1M148 72h1M189 72h9M9 73h1M42 73h4M147 73h1M195 73h3M203 73h5M41 74h5M146 74h1M154 74h1M203 74h11M41 75h6M145 75h1M40 76h7M40 77h8M187 77h5M196 77h3M40 78h13M59 78h20M152 78h1M193 78h2M205 78h5M40 79h3M44 79h8M83 79h2M151 79h1M157 79h1M202 79h3M212 79h6M40 80h2M45 80h3M77 80h6M144 80h1M147 80h1M150 80h1M156 80h1M179 80h1M13 81h11M40 81h1M45 81h3M146 81h1M178 81h8M46 82h2M144 82h1M178 82h2M183 82h4M197 82h2M46 83h3M177 83h4M191 83h2M209 83h3M47 84h2M177 84h4M200 84h2M217 84h5M39 85h1M76 85h7M152 85h1M176 85h6M39 86h1M85 86h1M144 86h1M148 86h1M176 86h2M184 86h3M8 87h1M24 87h1M39 87h1M48 87h3M53 87h15M83 87h2M147 87h1M176 87h2M181 87h1M198 87h2M8 88h16M39 88h1M48 88h2M155 88h1M176 88h1M181 88h2M189 88h2M211 88h4M48 89h2M144 89h1M153 89h1M176 89h1M181 89h2M198 89h2M222 89h4M48 90h3M146 90h1M182 90h1M49 91h6M145 91h1M185 91h3M83 92h1M144 92h1M149 92h1M199 92h2M24 93h1M87 93h2M183 93h5M214 93h4M86 94h1M143 94h1M149 94h1M183 94h1M195 94h3M225 94h4M50 95h9M143 95h1M145 95h1M183 95h1M50 96h8M153 96h1M186 96h3M4 97h1M51 97h8M200 97h1M4 98h1M6 98h1M54 98h7M216 98h5M4 99h1M84 99h2M149 99h1M184 99h1M193 99h2M228 99h4M7 100h1M89 100h2M143 100h1M150 100h1M158 100h1M184 100h2M6 101h1M88 101h2M146 101h1M157 101h1M186 101h3M5 102h1M55 102h7M78 102h5M143 102h2M200 102h2M55 103h5M153 103h1M219 103h4M5 104h1M7 104h1M55 104h5M184 104h3M190 104h3M232 104h4M56 105h5M184 105h3M205 105h19M84 106h3M186 106h4M8 107h1M91 107h2M147 107h1M200 107h2M7 108h1M91 108h2M142 108h1M148 108h1M223 108h3M6 109h1M24 109h1M57 109h24M82 109h4M156 109h1M185 109h6M5 110h1M8 110h1M53 110h7M145 110h1M185 110h2M203 110h2M221 110h9M4 111h1M7 111h1M53 111h7M186 111h3M3 112h1M5 112h1M55 112h7M150 112h1M201 112h2M8 113h1M89 113h2M142 113h1M148 113h1M151 113h1M226 113h3M2 114h1M6 114h1M95 114h1M185 114h3M2 115h2M95 115h1M141 115h1M144 115h1M185 115h1M201 115h2M230 115h6M88 116h4M185 116h3M24 117h1M52 117h7M144 117h1M202 117h2M2 118h1M52 118h7M231 118h3M7 119h1M53 119h18M155 119h1M1 120h1M5 120h2M24 120h1M91 120h2M151 120h1M184 120h2M198 120h3M97 121h1M140 121h1M159 121h1M185 121h2M3 122h1M98 122h1M140 122h3M203 122h2M0 123h1M2 123h1M93 123h2M24 124h1M52 124h35M143 124h1M0 125h2M53 125h35M185 125h1M194 125h2M0 126h1M7 126h2M83 126h6M149 126h1M157 126h1M185 126h2M0 127h1M5 127h2M94 127h2M206 127h4M100 128h2M139 128h1M144 128h1M148 128h1M25 129h1M102 129h1M98 130h2M186 130h1M189 130h2M1 131h1M24 131h1M92 131h3M186 131h1M92 132h3M140 132h1M218 132h6M0 133h1M6 133h4M92 133h3M139 133h1M4 134h1M6 134h1M24 134h1M98 134h2M135 134h2M106 135h2M137 135h1M140 135h1M109 136h2M134 136h1M186 136h1M0 137h1M105 137h2M134 137h1M142 137h1M217 137h7M24 138h1M95 138h3M154 138h1M8 139h6M94 139h3M5 140h1M8 140h16M94 140h4M138 140h1M147 140h1M6 141h1M106 141h2M142 141h1M150 141h1M186 141h1M2 142h2M119 142h1M134 142h1M146 142h1M160 142h1M225 142h6M1 143h1M39 143h1M120 143h1M0 144h1M39 144h1M118 144h2M137 144h1M39 145h1M103 145h4M135 145h2M138 145h1M155 145h1M7 146h1M100 146h6M150 146h1M186 146h1M215 146h15M103 147h5M145 147h1M231 147h5M4 148h1M114 148h2M149 148h1M159 148h1M1 149h1M25 149h1M121 149h1M122 150h1M40 151h2M120 151h1M159 151h1M185 151h1M41 152h6M105 152h6M155 152h1M214 152h13M41 153h13M84 153h17M138 153h1M147 153h1M0 154h1M42 154h5M54 154h33M8 155h16M43 155h3M101 155h4M149 155h2M3 156h1M41 156h1M114 156h2M184 156h1M1 157h1M41 157h1M115 157h2M160 157h1M184 157h1M1 158h1M43 158h2M106 158h3M140 159h2M147 159h3M176 159h1M177 160h1M183 160h6M177 161h5"/><path stroke="#1e996c" d="M154 57h1M153 58h1M152 59h1M154 59h1M151 60h2M150 61h2M150 62h1M149 63h1M155 63h2M148 64h1M152 65h1M156 65h1M151 66h1M155 66h1M150 67h1M153 67h1M152 68h1M151 69h1M148 70h1M150 70h1M155 70h1M157 70h1M54 71h1M147 71h1M149 71h1M153 71h1M157 71h1M57 72h26M146 72h2M10 73h14M145 73h2M198 73h5M145 74h1M147 77h1M150 77h1M157 77h1M192 77h4M53 78h6M146 78h1M149 78h1M195 78h10M43 79h1M52 79h15M82 79h1M145 79h1M148 79h1M205 79h7M9 80h11M42 80h3M41 81h4M144 81h2M149 81h1M154 81h1M40 82h6M148 82h1M187 82h10M40 83h6M147 83h1M193 83h3M203 83h6M40 84h2M44 84h3M146 84h1M150 84h1M202 84h4M210 84h7M40 85h1M45 85h8M57 85h19M145 85h1M149 85h1M40 86h1M46 86h5M84 86h1M151 86h1M157 86h1M178 86h6M9 87h1M46 87h2M68 87h15M144 87h1M156 87h1M178 87h3M182 87h6M195 87h3M46 88h2M144 88h2M177 88h4M191 88h2M206 88h5M39 89h1M46 89h2M177 89h4M200 89h3M215 89h7M39 90h1M47 90h1M176 90h6M39 91h1M47 91h2M150 91h1M176 91h3M183 91h2M39 92h1M73 92h10M152 92h1M158 92h1M176 92h2M180 92h2M197 92h2M8 93h1M39 93h1M85 93h2M176 93h2M180 93h3M188 93h3M210 93h4M7 94h1M48 94h6M84 94h2M146 94h1M176 94h1M181 94h2M198 94h2M220 94h5M6 95h1M48 95h2M144 95h1M148 95h1M155 95h1M176 95h1M181 95h2M5 96h1M48 96h2M147 96h1M176 96h1M183 96h3M5 97h1M7 97h1M48 97h3M176 97h1M197 97h3M5 98h1M48 98h6M150 98h1M182 98h6M212 98h4M81 99h3M152 99h1M182 99h2M195 99h3M224 99h4M87 100h2M147 100h1M182 100h2M86 101h2M143 101h1M149 101h1M184 101h2M49 102h6M198 102h2M5 103h1M8 103h1M49 103h6M146 103h1M215 103h4M6 104h1M49 104h6M183 104h1M193 104h2M228 104h4M49 105h7M150 105h1M155 105h1M183 105h1M83 106h1M143 106h1M184 106h2M9 107h15M89 107h2M150 107h1M198 107h2M24 108h1M89 108h2M145 108h1M218 108h5M7 109h1M49 109h8M81 109h1M147 109h1M183 109h2M191 109h2M232 109h4M6 110h2M50 110h3M153 110h1M183 110h2M205 110h16M5 111h2M50 111h3M144 111h1M184 111h2M4 112h1M50 112h5M143 112h1M155 112h1M198 112h3M3 113h2M86 113h3M222 113h4M3 114h1M94 114h1M146 114h1M183 114h2M188 114h3M5 115h1M94 115h1M142 115h2M183 115h2M203 115h5M213 115h17M51 116h14M85 116h3M146 116h1M156 116h1M184 116h1M3 117h1M50 117h2M153 117h1M199 117h3M8 118h16M50 118h2M143 118h1M227 118h4M2 119h1M6 119h1M8 119h16M51 119h2M142 119h1M156 119h2M184 119h4M7 120h1M88 120h3M141 120h1M147 120h1M183 120h1M201 120h2M231 120h5M1 121h1M4 121h2M96 121h1M145 121h1M149 121h1M184 121h1M1 122h1M96 122h2M147 122h1M158 122h1M201 122h2M1 123h1M3 123h1M90 123h3M145 123h1M232 123h4M0 124h3M51 124h1M8 125h16M51 125h2M142 125h1M151 125h1M184 125h1M196 125h3M1 126h1M6 126h1M9 126h15M51 126h32M156 126h1M184 126h1M24 127h1M92 127h2M151 127h1M204 127h2M0 128h1M4 128h1M99 128h1M142 128h2M159 128h1M3 129h1M101 129h1M146 129h1M1 130h2M96 130h2M157 130h1M185 130h1M191 130h2M0 131h1M87 131h5M142 131h1M185 131h1M1 132h1M8 132h16M87 132h5M151 132h1M212 132h6M5 133h1M10 133h14M87 133h5M148 133h1M0 134h1M96 134h2M139 134h1M145 134h1M0 135h1M2 135h1M4 135h1M105 135h1M135 135h2M186 135h2M0 136h2M3 136h1M107 136h2M137 136h1M159 136h1M185 136h1M103 137h2M209 137h8M1 138h1M39 138h1M90 138h5M134 138h1M140 138h1M0 139h1M14 139h10M39 139h1M87 139h7M134 139h1M39 140h1M88 140h6M134 140h1M3 141h1M24 141h1M39 141h1M104 141h2M134 141h1M139 141h1M141 141h1M39 142h1M117 142h2M217 142h8M0 143h1M25 143h1M137 143h1M116 144h2M135 144h2M158 144h1M24 145h1M40 145h1M98 145h5M154 145h1M40 146h1M48 146h5M93 146h7M185 146h1M4 147h1M40 147h2M47 147h5M94 147h9M138 147h1M144 147h1M224 147h7M2 148h1M5 148h1M40 148h2M112 148h2M40 149h1M0 150h1M40 150h1M121 150h1M42 151h2M138 151h1M184 151h1M10 152h12M47 152h6M96 152h9M154 152h1M203 152h11M4 153h1M54 153h30M146 153h1M46 155h4M96 155h5M151 155h1M158 155h1M176 155h1M42 156h1M112 156h2M142 156h1M176 156h1M183 156h1M2 157h1M42 157h1M113 157h2M176 157h2M182 157h2M2 158h1M24 158h1M45 158h1M104 158h2M138 158h1M176 158h1M142 159h5M177 159h1M178 160h5M189 160h6M227 160h9"/><path stroke="#1ea068" d="M155 57h1M154 58h2M153 59h1M154 64h1M156 64h1M152 66h1M154 66h1M151 67h2M150 68h2M149 69h2M149 70h1M156 70h1M148 71h1M152 72h1M156 72h1M151 73h1M155 73h1M150 74h1M153 74h1M149 75h1M152 75h1M148 76h1M151 76h1M155 77h2M147 78h2M153 78h1M157 78h1M67 79h15M146 79h2M20 80h4M145 80h2M152 82h1M151 83h1M196 83h7M42 84h2M155 84h3M206 84h4M41 85h4M53 85h4M153 85h1M41 86h5M51 86h3M82 86h2M147 86h1M10 87h14M40 87h6M146 87h1M150 87h1M188 87h7M40 88h2M44 88h2M149 88h1M154 88h1M193 88h4M201 88h5M40 89h1M44 89h2M148 89h1M203 89h12M45 90h2M151 90h1M45 91h2M155 91h1M157 91h1M179 91h4M46 92h8M55 92h18M178 92h2M182 92h15M9 93h15M46 93h4M84 93h1M144 93h1M147 93h1M151 93h1M178 93h2M191 93h2M205 93h5M39 94h1M46 94h2M54 94h30M144 94h1M177 94h4M200 94h3M214 94h6M24 95h1M39 95h1M46 95h2M177 95h4M6 96h1M8 96h1M39 96h1M46 96h2M177 96h6M6 97h1M39 97h1M47 97h1M146 97h1M151 97h1M177 97h7M193 97h4M39 98h1M47 98h1M155 98h3M176 98h6M188 98h3M207 98h5M39 99h1M49 99h2M60 99h21M144 99h1M148 99h1M158 99h1M176 99h6M198 99h3M219 99h5M24 100h1M39 100h1M85 100h2M176 100h2M180 100h2M39 101h1M47 101h8M84 101h2M145 101h1M176 101h2M182 101h2M6 102h1M24 102h1M39 102h1M47 102h2M148 102h1M155 102h1M176 102h2M195 102h3M6 103h2M39 103h1M47 103h2M176 103h1M181 103h7M210 103h5M39 104h1M47 104h2M145 104h1M151 104h1M176 104h1M181 104h2M195 104h3M223 104h5M39 105h1M47 105h2M144 105h1M156 105h2M176 105h1M181 105h2M39 106h1M64 106h19M148 106h1M152 106h1M176 106h1M183 106h1M39 107h1M87 107h2M143 107h1M146 107h1M158 107h1M176 107h1M195 107h3M8 108h1M39 108h1M49 108h1M87 108h2M143 108h2M157 108h1M176 108h1M213 108h5M8 109h16M39 109h1M48 109h1M176 109h1M181 109h2M193 109h3M227 109h5M39 110h1M48 110h2M176 110h1M181 110h2M39 111h1M48 111h2M151 111h1M176 111h1M183 111h1M39 112h1M48 112h2M156 112h2M176 112h1M196 112h2M39 113h1M84 113h2M152 113h1M176 113h1M217 113h5M7 114h1M39 114h1M92 114h2M142 114h1M150 114h1M176 114h1M182 114h1M191 114h2M232 114h4M39 115h1M93 115h1M148 115h1M176 115h1M182 115h1M208 115h5M4 116h1M39 116h1M49 116h2M65 116h20M182 116h2M9 117h15M39 117h1M49 117h1M197 117h2M39 118h1M49 118h1M151 118h1M176 118h1M223 118h4M39 119h1M49 119h2M149 119h1M176 119h1M182 119h2M188 119h2M2 120h1M9 120h15M39 120h1M85 120h3M176 120h1M182 120h1M203 120h3M207 120h1M218 120h13M2 121h2M6 121h1M39 121h1M94 121h2M141 121h2M182 121h2M2 122h1M4 122h1M95 122h1M198 122h3M50 123h6M86 123h4M156 123h1M228 123h4M10 124h14M50 124h1M153 124h1M184 124h1M50 125h1M182 125h2M199 125h2M50 126h1M141 126h1M183 126h1M1 127h1M7 127h1M10 127h7M89 127h3M140 127h1M146 127h1M201 127h3M3 128h1M5 128h1M98 128h1M140 128h2M149 128h1M0 129h1M2 129h1M99 129h2M0 130h1M94 130h2M144 130h1M183 130h2M193 130h2M10 131h14M39 131h1M50 131h37M153 131h1M184 131h1M39 132h1M50 132h37M206 132h6M1 133h1M39 133h1M50 133h37M3 134h1M7 134h1M9 134h15M39 134h1M94 134h2M144 134h1M151 134h1M1 135h1M5 135h1M39 135h1M103 135h2M148 135h1M185 135h1M188 135h2M39 136h1M106 136h1M135 136h2M145 136h1M184 136h1M2 137h1M39 137h1M101 137h2M137 137h1M205 137h4M9 138h15M49 138h41M137 138h1M153 138h1M7 139h1M49 139h38M137 139h1M139 139h1M150 139h1M49 140h39M137 140h1M146 140h1M185 140h5M7 141h1M102 141h2M137 141h1M140 141h1M151 141h1M185 141h1M1 142h1M115 142h2M137 142h1M147 142h1M207 142h10M2 143h1M119 143h1M135 143h2M143 143h1M40 144h2M114 144h2M140 144h1M10 145h9M41 145h2M45 145h9M89 145h9M153 145h1M6 146h1M41 146h7M53 146h40M149 146h1M184 146h1M42 147h5M52 147h42M143 147h1M212 147h12M6 148h1M24 148h1M42 148h3M107 148h5M150 148h1M0 149h1M2 149h1M41 149h1M120 149h1M144 149h1M160 149h1M41 150h1M140 150h1M160 150h1M44 151h1M118 151h2M183 151h1M9 152h1M22 152h2M53 152h43M153 152h1M176 152h1M188 152h3M197 152h6M3 153h1M139 153h1M145 153h1M176 154h1M50 155h4M72 155h24M152 155h1M177 155h1M4 156h1M43 156h2M108 156h4M143 156h1M177 156h6M43 157h1M110 157h3M139 157h1M178 157h4M3 158h1M46 158h2M101 158h3M158 158h1M177 158h2M178 159h1M195 160h32"/><path stroke="#1ea663" d="M155 64h1M153 65h3M153 66h1M154 71h1M156 71h1M152 73h1M154 73h1M151 74h2M150 75h2M149 76h2M148 77h2M154 78h1M152 79h1M156 79h1M151 80h1M155 80h1M150 81h1M153 81h1M149 82h1M148 83h1M147 84h1M149 84h1M146 85h3M157 85h1M54 86h28M145 86h2M145 87h1M42 88h2M197 88h4M41 89h3M152 89h1M40 90h5M147 90h1M40 91h5M146 91h1M149 91h1M156 91h1M40 92h2M44 92h2M54 92h1M145 92h1M148 92h1M153 92h1M40 93h1M44 93h2M50 93h4M82 93h2M146 93h1M157 93h1M193 93h12M8 94h1M24 94h1M40 94h1M45 94h1M145 94h1M150 94h1M156 94h1M203 94h11M7 95h1M45 95h1M149 95h1M154 95h1M7 96h1M45 96h1M152 96h1M45 97h2M184 97h9M45 98h2M145 98h1M149 98h1M191 98h3M202 98h5M46 99h3M51 99h9M153 99h1M201 99h4M211 99h8M8 100h1M10 100h3M46 100h5M84 100h1M144 100h1M146 100h1M151 100h1M178 100h2M7 101h1M46 101h1M55 101h29M144 101h1M178 101h4M7 102h1M46 102h1M154 102h1M178 102h17M46 103h1M147 103h1M177 103h4M188 103h3M205 103h5M46 104h1M177 104h4M198 104h4M216 104h7M46 105h1M149 105h1M177 105h4M46 106h18M158 106h1M177 106h6M85 107h2M177 107h5M186 107h9M9 108h15M46 108h3M50 108h4M84 108h3M149 108h1M177 108h11M207 108h6M46 109h2M155 109h1M177 109h4M196 109h3M222 109h5M46 110h2M146 110h1M177 110h4M46 111h2M177 111h6M47 112h1M149 112h1M177 112h2M190 112h6M77 113h7M143 113h1M147 113h1M158 113h1M177 113h8M211 113h6M24 114h1M90 114h2M143 114h1M145 114h1M158 114h1M177 114h5M193 114h2M227 114h5M90 115h3M177 115h5M48 116h1M176 116h6M48 117h1M145 117h1M176 117h2M193 117h4M3 118h1M7 118h1M48 118h1M177 118h4M217 118h6M5 119h1M48 119h1M177 119h5M190 119h2M233 119h3M3 120h2M8 120h1M83 120h2M142 120h1M152 120h1M177 120h5M206 120h1M208 120h10M93 121h1M143 121h2M176 121h6M39 122h1M94 122h1M176 122h2M195 122h3M39 123h1M49 123h1M56 123h23M83 123h3M176 123h3M224 123h4M9 124h1M39 124h1M49 124h1M144 124h1M176 124h8M185 124h3M2 125h1M7 125h1M39 125h1M49 125h1M176 125h6M201 125h3M227 125h9M5 126h1M39 126h1M49 126h1M148 126h1M176 126h2M181 126h2M4 127h1M9 127h1M17 127h7M39 127h1M85 127h4M141 127h1M152 127h1M176 127h1M199 127h2M1 128h2M39 128h1M96 128h2M176 128h1M235 128h1M1 129h1M39 129h1M98 129h1M158 129h1M176 129h1M39 130h1M50 130h2M91 130h3M176 130h1M182 130h1M195 130h2M2 131h1M9 131h1M49 131h1M176 131h1M183 131h1M7 132h1M49 132h1M141 132h1M150 132h1M204 132h2M49 133h1M140 133h1M147 133h1M1 134h2M8 134h1M91 134h3M140 134h1M142 134h2M176 134h1M101 135h2M159 135h1M183 135h2M190 135h2M104 136h2M183 136h1M99 137h2M135 137h2M143 137h1M157 137h1M202 137h3M40 138h1M48 138h1M135 138h1M141 138h1M1 139h1M6 139h1M40 139h1M47 139h2M0 140h1M4 140h1M40 140h2M47 140h2M139 140h1M184 140h1M190 140h2M0 141h1M2 141h1M9 141h15M40 141h2M99 141h3M135 141h2M184 141h1M0 142h1M4 142h1M40 142h1M113 142h2M135 142h2M204 142h3M40 143h1M117 143h2M159 143h1M1 144h1M42 144h2M112 144h2M0 145h1M9 145h1M19 145h5M43 145h2M54 145h35M139 145h1M138 146h1M148 146h1M183 146h1M3 147h1M139 147h1M142 147h1M205 147h7M1 148h1M45 148h1M103 148h4M151 148h1M42 149h1M119 149h1M145 149h1M25 150h1M42 150h1M120 150h1M176 150h1M45 151h1M116 151h2M176 151h2M182 151h1M8 152h1M138 152h1M152 152h1M177 152h1M183 152h5M191 152h6M0 153h3M142 153h3M176 153h1M177 154h1M54 155h18M153 155h3M157 155h1M178 155h12M5 156h1M45 156h1M105 156h3M159 156h1M3 157h1M44 157h1M107 157h3M4 158h20M48 158h3M98 158h3M139 158h1M179 158h1M179 159h1"/><path stroke="#1eac5e" d="M155 71h1M153 72h3M153 73h1M156 78h1M153 79h1M152 80h1M154 80h1M151 81h2M150 82h2M149 83h2M148 84h1M154 85h1M152 86h1M156 86h1M151 87h1M155 87h1M150 88h1M153 88h1M149 89h1M148 90h1M150 90h1M147 91h2M42 92h2M146 92h2M154 92h1M157 92h1M41 93h3M54 93h28M145 93h1M152 93h1M41 94h4M8 95h16M40 95h5M153 95h1M40 96h5M148 96h1M40 97h2M43 97h2M147 97h1M150 97h1M40 98h2M44 98h1M146 98h1M194 98h8M40 99h1M44 99h2M145 99h1M147 99h1M205 99h6M9 100h1M13 100h11M40 100h1M44 100h2M51 100h33M145 100h1M157 100h1M24 101h1M40 101h1M44 101h2M150 101h1M156 101h1M8 102h16M40 102h1M44 102h2M40 103h1M44 103h2M152 103h1M191 103h5M198 103h7M40 104h1M44 104h2M146 104h1M150 104h1M202 104h14M40 105h1M44 105h2M40 106h1M44 106h2M144 106h1M147 106h1M153 106h1M40 107h1M44 107h8M83 107h2M144 107h2M151 107h1M182 107h4M40 108h1M44 108h2M54 108h27M82 108h2M188 108h4M202 108h5M40 109h1M44 109h2M148 109h1M154 109h1M199 109h4M213 109h9M40 110h2M44 110h2M152 110h1M40 111h2M44 111h2M145 111h1M150 111h1M40 112h2M45 112h2M144 112h1M179 112h11M40 113h2M45 113h8M56 113h21M153 113h1M185 113h4M205 113h6M40 114h2M88 114h2M144 114h1M195 114h4M221 114h6M6 115h1M40 115h2M46 115h5M88 115h2M149 115h1M157 115h1M5 116h1M24 116h1M40 116h1M46 116h2M147 116h1M155 116h1M4 117h1M8 117h1M40 117h1M46 117h2M152 117h1M178 117h4M183 117h10M6 118h1M40 118h1M47 118h1M144 118h1M150 118h1M181 118h3M211 118h6M3 119h2M40 119h1M47 119h1M143 119h1M148 119h1M192 119h3M228 119h5M40 120h1M49 120h2M64 120h19M146 120h1M153 120h1M158 120h1M40 121h1M91 121h2M150 121h1M5 122h1M40 122h1M92 122h2M148 122h1M178 122h2M187 122h8M40 123h1M48 123h1M79 123h4M146 123h1M179 123h2M218 123h6M3 124h1M48 124h1M188 124h3M48 125h1M143 125h1M150 125h1M204 125h23M2 126h1M48 126h1M142 126h1M178 126h3M2 127h2M8 127h1M82 127h3M142 127h1M145 127h1M158 127h1M177 127h1M196 127h3M6 128h1M95 128h1M177 128h1M230 128h5M4 129h1M96 129h2M147 129h1M177 129h5M3 130h1M40 130h1M48 130h2M52 130h3M87 130h4M156 130h1M177 130h5M197 130h3M40 131h1M48 131h1M143 131h1M177 131h6M2 132h1M6 132h1M40 132h1M47 132h2M176 132h1M201 132h3M2 133h1M4 133h1M40 133h1M47 133h2M176 133h1M40 134h1M87 134h4M141 134h1M152 134h1M158 134h1M177 134h1M6 135h1M40 135h1M100 135h1M149 135h1M176 135h2M181 135h2M192 135h2M40 136h1M102 136h2M146 136h1M176 136h2M182 136h1M40 137h2M97 137h2M176 137h1M199 137h3M2 138h1M8 138h1M41 138h2M45 138h3M136 138h1M176 138h1M5 139h1M41 139h6M135 139h2M149 139h1M176 139h1M1 140h1M3 140h1M42 140h5M135 140h2M145 140h1M176 140h1M182 140h2M192 140h3M1 141h1M8 141h1M42 141h2M97 141h2M152 141h1M158 141h1M176 141h1M182 141h2M41 142h1M111 142h2M148 142h1M159 142h1M176 142h1M200 142h4M41 143h1M115 143h2M144 143h1M44 144h1M109 144h3M141 144h1M176 144h1M176 145h2M184 145h3M5 146h1M176 146h2M182 146h1M140 147h2M176 147h1M200 147h5M0 148h1M7 148h1M10 148h10M46 148h2M97 148h6M158 148h1M3 149h1M43 149h1M118 149h1M176 149h1M1 150h1M43 150h1M141 150h1M177 150h10M0 151h1M46 151h1M114 151h2M139 151h1M158 151h1M178 151h4M178 152h5M140 153h2M177 153h1M156 155h1M190 155h4M6 156h1M24 156h1M46 156h1M103 156h2M144 156h1M4 157h1M45 157h1M104 157h3M140 157h1M159 157h1M51 158h3M95 158h3M180 158h2M228 158h8M180 159h2"/><path stroke="#1eb359" d="M155 78h1M154 79h2M153 80h1M155 85h2M153 86h1M152 87h1M154 87h1M151 88h2M150 89h2M149 90h1M156 92h1M156 93h1M9 94h15M151 94h1M155 94h1M150 95h1M149 96h1M151 96h1M42 97h1M148 97h2M42 98h2M147 98h2M41 99h3M146 99h1M154 99h1M157 99h1M41 100h3M152 100h1M8 101h1M41 101h3M41 102h3M149 102h1M153 102h1M41 103h3M148 103h1M196 103h2M41 104h3M147 104h1M41 105h3M145 105h2M148 105h1M41 106h3M145 106h2M154 106h1M41 107h3M52 107h31M41 108h3M81 108h1M150 108h1M156 108h1M192 108h10M41 109h3M203 109h10M42 110h2M147 110h1M42 111h2M42 112h3M148 112h1M42 113h3M53 113h3M144 113h1M146 113h1M154 113h1M189 113h5M199 113h6M8 114h16M42 114h5M86 114h2M151 114h1M199 114h6M211 114h10M42 115h4M51 115h2M85 115h3M41 116h5M154 116h1M5 117h1M41 117h5M146 117h1M182 117h1M4 118h2M41 118h6M184 118h4M204 118h7M41 119h6M195 119h3M222 119h6M41 120h2M45 120h4M51 120h13M143 120h1M145 120h1M154 120h1M7 121h1M41 121h2M88 121h3M158 121h1M41 122h2M48 122h2M89 122h3M157 122h1M180 122h7M4 123h1M41 123h1M46 123h2M155 123h1M181 123h2M210 123h8M8 124h1M40 124h2M46 124h2M152 124h1M191 124h2M231 124h5M3 125h1M6 125h1M40 125h2M46 125h2M3 126h2M40 126h2M46 126h2M147 126h1M40 127h2M47 127h7M56 127h26M143 127h2M153 127h1M178 127h2M189 127h7M40 128h2M93 128h2M150 128h1M178 128h2M225 128h5M40 129h2M94 129h2M182 129h4M41 130h1M46 130h2M55 130h32M145 130h1M200 130h3M232 130h4M8 131h1M41 131h2M46 131h2M152 131h1M5 132h1M41 132h2M45 132h2M142 132h1M149 132h1M177 132h1M199 132h2M3 133h1M41 133h6M141 133h1M146 133h1M177 133h1M41 134h3M48 134h2M82 134h5M153 134h1M178 134h2M41 135h2M98 135h2M178 135h3M194 135h3M4 136h1M41 136h2M101 136h1M178 136h4M3 137h1M42 137h10M94 137h3M156 137h1M177 137h1M195 137h4M43 138h2M142 138h1M152 138h1M177 138h1M2 139h1M140 139h1M148 139h1M177 139h3M2 140h1M140 140h5M177 140h5M195 140h3M44 141h2M93 141h4M153 141h1M177 141h5M5 142h1M109 142h2M177 142h1M196 142h4M3 143h1M42 143h1M113 143h2M176 143h1M45 144h2M106 144h3M157 144h1M177 144h1M1 145h1M8 145h1M152 145h1M178 145h6M187 145h3M0 146h1M139 146h1M147 146h1M178 146h4M0 147h1M2 147h1M177 147h2M190 147h10M8 148h2M20 148h4M48 148h4M84 148h13M152 148h2M176 148h1M44 149h1M116 149h2M146 149h1M177 149h1M44 150h1M119 150h1M187 150h4M47 151h3M110 151h4M0 152h1M6 152h2M151 152h1M178 153h1M178 154h2M194 155h10M224 155h12M7 156h2M47 156h1M100 156h3M145 156h2M5 157h2M24 157h1M46 157h1M102 157h2M141 157h1M54 158h41M140 158h1M157 158h1M182 158h10M205 158h23M182 159h4"/><path stroke="#1eb954" d="M154 86h2M153 87h1M155 92h1M153 93h1M152 94h3M151 95h2M150 96h1M155 99h2M156 100h1M9 101h12M151 101h1M155 101h1M150 102h1M152 102h1M149 103h3M148 104h2M147 105h1M155 106h1M157 106h1M152 107h1M157 107h1M149 109h1M153 109h1M148 110h1M151 110h1M146 111h1M149 111h1M145 112h3M145 113h1M157 113h1M194 113h5M47 114h5M84 114h2M205 114h6M7 115h1M53 115h20M83 115h2M150 115h1M156 115h1M6 116h2M9 116h9M148 116h1M6 117h2M151 117h1M145 118h1M149 118h1M188 118h7M198 118h6M144 119h1M147 119h1M198 119h7M211 119h11M43 120h2M144 120h1M24 121h1M43 121h5M86 121h2M151 121h1M6 122h1M43 122h5M50 122h3M86 122h3M149 122h1M24 123h1M42 123h4M147 123h1M154 123h1M183 123h5M204 123h6M4 124h1M42 124h4M145 124h1M193 124h3M225 124h6M4 125h2M42 125h4M149 125h1M42 126h4M143 126h1M146 126h1M42 127h5M54 127h2M154 127h1M180 127h9M42 128h3M90 128h3M180 128h1M219 128h6M5 129h1M42 129h5M92 129h2M148 129h1M186 129h3M42 130h4M155 130h1M203 130h29M3 131h1M43 131h3M3 132h1M43 132h2M178 132h1M195 132h4M142 133h2M145 133h1M44 134h4M50 134h4M55 134h27M154 134h1M180 134h1M7 135h1M24 135h1M43 135h2M96 135h2M150 135h1M197 135h3M5 136h1M43 136h2M99 136h2M147 136h1M158 136h1M24 137h1M52 137h2M89 137h5M144 137h1M178 137h2M185 137h10M3 138h1M7 138h1M178 138h1M231 138h5M3 139h2M141 139h1M180 139h2M198 140h4M233 140h3M46 141h2M87 141h6M154 141h1M6 142h1M42 142h1M106 142h3M149 142h1M178 142h2M185 142h11M111 143h2M145 143h1M2 144h1M47 144h1M103 144h3M142 144h1M178 144h1M140 145h1M151 145h1M190 145h3M1 146h1M4 146h1M146 146h1M1 147h1M179 147h3M183 147h7M52 148h32M154 148h1M177 148h1M45 149h1M114 149h2M147 149h1M159 149h1M178 149h1M117 150h2M142 150h1M159 150h1M191 150h3M1 151h1M50 151h3M103 151h7M1 152h1M5 152h1M139 152h1M150 152h1M179 153h1M180 154h1M204 155h20M9 156h15M48 156h3M96 156h4M147 156h1M7 157h2M47 157h2M99 157h3M141 158h1M156 158h1M192 158h13M186 159h7M224 159h12"/><path stroke="#1ec04f" d="M154 93h2M153 100h2M21 101h3M152 101h3M151 102h1M156 106h1M153 107h1M156 107h1M151 108h1M155 108h1M150 109h1M152 109h1M149 110h2M147 111h2M155 113h2M52 114h32M152 114h1M157 114h1M8 115h1M24 115h1M73 115h10M8 116h1M18 116h6M149 116h1M153 116h1M147 117h1M146 118h3M195 118h3M145 119h2M205 119h6M155 120h3M8 121h1M48 121h4M83 121h3M53 122h16M83 122h3M5 123h1M153 123h1M188 123h7M197 123h7M5 124h3M146 124h1M151 124h1M196 124h6M214 124h11M144 125h1M148 125h1M144 126h2M155 127h3M7 128h1M24 128h1M45 128h4M87 128h3M151 128h1M158 128h1M181 128h1M211 128h8M47 129h4M89 129h3M157 129h1M189 129h2M234 129h2M4 130h1M24 130h1M146 130h1M154 130h1M4 131h1M7 131h1M144 131h1M151 131h1M4 132h1M143 132h1M148 132h1M179 132h2M186 132h9M144 133h1M178 133h1M230 133h6M54 134h1M155 134h3M181 134h1M45 135h1M94 135h2M200 135h3M230 135h6M45 136h2M97 136h2M4 137h1M54 137h27M82 137h7M155 137h1M180 137h5M5 138h2M143 138h1M151 138h1M179 138h1M225 138h6M142 139h1M147 139h1M182 139h3M202 140h31M48 141h4M74 141h13M155 141h3M43 142h1M104 142h2M180 142h5M43 143h1M108 143h3M177 143h1M48 144h3M99 144h4M156 144h1M179 144h1M2 145h1M7 145h1M193 145h3M2 146h2M140 146h1M145 146h1M182 147h1M155 148h3M4 149h1M110 149h4M179 149h1M2 150h1M45 150h1M114 150h3M143 150h1M194 150h5M53 151h50M140 151h1M157 151h1M2 152h3M148 152h2M180 153h1M227 153h9M181 154h1M51 156h3M73 156h23M148 156h1M158 156h1M9 157h15M49 157h3M96 157h3M142 157h1M142 158h2M152 158h4M193 159h31"/><path stroke="#1ec64a" d="M155 100h1M154 107h2M152 108h3M151 109h1M153 114h1M156 114h1M9 115h8M151 115h1M155 115h1M150 116h3M148 117h3M9 121h15M52 121h31M152 121h1M157 121h1M7 122h1M24 122h1M69 122h14M150 122h1M156 122h1M6 123h18M148 123h1M195 123h2M147 124h1M150 124h1M202 124h12M145 125h3M8 128h1M49 128h3M83 128h4M182 128h5M204 128h7M6 129h1M51 129h3M85 129h4M149 129h1M191 129h3M227 129h7M5 130h1M147 130h1M153 130h1M5 131h2M145 131h1M150 131h1M144 132h1M146 132h2M181 132h5M179 133h1M225 133h5M182 134h3M8 135h16M46 135h2M90 135h4M151 135h1M158 135h1M203 135h27M6 136h1M47 136h2M94 136h3M148 136h1M5 137h1M9 137h15M81 137h1M145 137h1M154 137h1M4 138h1M150 138h1M180 138h1M216 138h9M143 139h1M146 139h1M185 139h4M52 141h22M7 142h1M24 142h1M44 142h1M101 142h3M150 142h1M4 143h1M44 143h1M106 143h2M146 143h1M158 143h1M178 143h1M234 143h2M3 144h1M24 144h1M51 144h2M94 144h5M143 144h1M155 144h1M180 144h1M5 145h2M141 145h1M150 145h1M196 145h5M141 146h4M178 148h1M5 149h1M46 149h2M104 149h6M148 149h1M180 149h1M46 150h1M112 150h2M199 150h37M2 151h1M24 151h1M141 151h1M140 152h2M147 152h1M181 153h6M208 153h19M182 154h4M54 156h19M149 156h2M52 157h44M143 157h1M158 157h1M144 158h8"/><path stroke="#1ecc45" d="M154 114h2M17 115h7M152 115h3M153 121h2M156 121h1M8 122h1M151 122h1M155 122h1M149 123h4M148 124h2M9 128h15M52 128h31M152 128h2M157 128h1M187 128h17M7 129h1M54 129h31M150 129h1M156 129h1M194 129h6M218 129h9M6 130h18M148 130h1M152 130h1M146 131h4M145 132h1M180 133h1M217 133h8M185 134h3M48 135h3M85 135h5M152 135h1M7 136h1M24 136h1M49 136h2M90 136h4M149 136h1M157 136h1M6 137h3M146 137h1M153 137h1M144 138h1M149 138h1M181 138h3M205 138h11M144 139h2M189 139h4M228 139h8M8 142h1M45 142h1M99 142h2M151 142h1M158 142h1M5 143h1M45 143h1M103 143h3M147 143h1M179 143h1M227 143h7M53 144h27M83 144h11M144 144h1M154 144h1M181 144h1M3 145h2M142 145h1M148 145h2M201 145h35M179 148h2M228 148h8M6 149h1M48 149h3M97 149h7M149 149h1M181 149h1M3 150h1M47 150h3M105 150h7M144 150h1M3 151h1M142 151h1M155 151h2M142 152h5M187 153h21M186 154h6M227 154h9M151 156h2M157 156h1M144 157h2"/><path stroke="#1ed340" d="M155 121h1M9 122h10M152 122h3M154 128h1M156 128h1M24 129h1M151 129h1M155 129h1M200 129h18M149 130h3M181 133h2M207 133h10M188 134h3M233 134h3M51 135h3M56 135h29M153 135h1M157 135h1M8 136h5M51 136h3M85 136h5M150 136h1M156 136h1M147 137h1M152 137h1M145 138h4M184 138h10M197 138h8M193 139h7M215 139h13M9 142h15M46 142h1M96 142h3M152 142h1M6 143h1M24 143h1M46 143h1M100 143h3M148 143h1M180 143h1M217 143h10M4 144h20M80 144h3M145 144h1M153 144h1M182 144h2M143 145h1M147 145h1M181 148h1M215 148h13M7 149h1M24 149h1M51 149h3M72 149h25M150 149h1M158 149h1M182 149h3M50 150h3M97 150h8M145 150h1M158 150h1M4 151h1M8 151h16M143 151h1M153 151h2M192 154h35M153 156h4M146 157h3M157 157h1"/><path stroke="#1ed93b" d="M19 122h5M155 128h1M8 129h5M152 129h3M183 133h7M200 133h7M191 134h4M225 134h8M54 135h2M154 135h3M13 136h11M54 136h31M151 136h2M155 136h1M148 137h4M194 138h3M200 139h15M47 142h3M91 142h5M153 142h2M157 142h1M7 143h1M47 143h3M96 143h4M149 143h1M157 143h1M181 143h4M204 143h13M146 144h2M151 144h2M184 144h4M144 145h3M182 148h9M200 148h15M8 149h1M54 149h18M151 149h1M185 149h5M234 149h2M4 150h1M53 150h44M146 150h1M5 151h3M144 151h1M152 151h1M149 157h8"/><path stroke="#1edf36" d="M13 129h11M190 133h10M195 134h9M211 134h14M153 136h2M50 142h3M83 142h8M155 142h2M8 143h16M50 143h2M91 143h5M150 143h3M155 143h2M185 143h19M148 144h3M188 144h5M228 144h8M191 148h9M9 149h15M152 149h2M157 149h1M190 149h5M222 149h12M5 150h2M24 150h1M147 150h2M145 151h7"/><path stroke="#1ee632" d="M204 134h7M53 142h30M52 143h39M153 143h2M193 144h35M154 149h3M195 149h27M7 150h2M149 150h2M157 150h1"/><path stroke="#1eec2d" d="M9 150h15M151 150h6"/></g><defs><g id="nz" fill="none" stroke-width="1"><path stroke="#0a2a2a" stroke-opacity="0.3" d="M16 0h1M55 0h1M19 1h1M19 2h1M42 2h1M52 4h1M13 5h1M33 5h1M18 6h1M55 6h1M35 7h1M55 7h1M22 8h1M35 8h1M6 9h1M23 9h1M6 10h1M11 10h1M2 11h1M10 11h2M38 11h1M48 11h1M39 12h1M39 13h1M9 14h1M45 14h1M43 16h1M32 17h1M43 17h1M32 18h1M34 18h1M21 19h1M21 20h1M6 21h2M6 22h2M10 22h1M17 22h1M55 22h1M1 23h1M6 23h2M25 23h1M0 24h1M7 24h1M25 24h1M27 24h1M15 25h1M19 25h1M27 25h1M54 25h1M27 26h1M44 27h1M9 28h1M20 28h1M14 30h1M12 31h1M14 31h1M31 31h1M48 32h1M2 33h1M6 33h1M48 33h1M48 34h1M57 34h1M18 35h1M25 35h1M0 36h1M10 36h1M10 37h1M13 37h1M28 37h1M27 39h1M25 40h1M38 40h1M24 41h1M1 42h1M10 42h1M48 42h1M48 43h1M54 43h1M33 44h1M54 44h1M10 45h1M26 45h1M31 45h1M54 45h1M31 46h1M13 47h1M33 47h1M13 48h1M44 48h1M32 49h1M44 49h1M35 50h1M44 50h1M54 51h1M37 52h3M57 52h1M7 53h1M37 53h1M48 53h1M7 54h1M16 54h1M37 54h1M48 54h1M50 54h1M55 54h1"/><path stroke="#0a2a2a" stroke-opacity="0.18" d="M1 0h1M6 0h1M14 0h1M24 0h2M30 0h1M37 0h2M40 0h1M11 1h1M14 1h1M16 1h1M24 1h2M37 1h1M42 1h1M25 2h1M45 2h2M53 2h1M1 3h1M19 3h1M40 3h1M42 3h1M45 3h2M52 3h2M9 4h1M13 4h1M42 4h1M48 4h1M53 4h1M56 4h1M14 5h1M18 5h1M26 5h1M41 5h1M52 5h1M2 6h1M10 6h1M13 6h1M57 6h1M2 7h1M13 7h1M20 7h1M22 7h1M57 7h1M0 8h1M13 8h1M15 8h1M19 8h1M23 8h1M26 8h1M39 8h1M55 8h1M57 8h1M3 9h1M11 9h1M13 9h1M36 9h1M38 9h1M57 9h1M1 10h1M18 10h1M36 10h1M38 10h1M48 10h1M54 10h1M1 11h1M19 11h1M36 11h1M39 11h1M58 11h1M10 12h1M13 12h1M19 12h1M40 12h1M53 12h1M9 13h2M13 13h1M24 13h1M45 13h2M5 14h1M7 14h1M23 14h1M46 14h1M48 14h1M7 15h1M11 15h1M25 15h1M28 15h1M43 15h1M49 15h1M18 16h1M28 16h1M47 16h2M53 16h1M18 17h1M24 17h1M31 17h1M34 17h1M50 17h1M53 17h1M58 17h1M18 18h1M21 18h1M23 18h2M50 18h1M57 18h1M4 19h1M7 19h1M15 19h2M18 19h1M24 19h2M27 19h1M31 19h1M48 19h1M6 20h2M19 20h1M26 20h1M48 20h2M5 21h1M11 21h1M17 21h1M19 21h1M21 21h1M51 21h1M55 21h1M1 22h1M5 22h1M24 22h1M40 22h1M58 22h1M0 23h1M5 23h1M9 23h1M27 23h1M30 23h1M33 23h1M35 23h1M51 23h1M41 24h1M5 25h1M10 25h1M14 25h1M30 25h1M49 25h1M19 26h1M36 26h1M44 26h1M49 26h1M53 26h2M58 26h1M4 27h1M9 27h1M19 27h2M27 27h1M33 27h1M49 27h1M52 27h1M5 28h1M32 28h1M46 28h1M51 28h1M14 29h1M20 29h1M23 29h1M32 29h1M40 29h1M51 29h1M3 30h2M23 30h1M43 30h1M51 30h1M57 30h1M23 31h2M30 31h1M49 31h1M57 31h1M6 32h1M14 32h1M25 32h1M36 32h1M56 32h2M0 33h1M5 33h1M14 33h1M25 33h1M57 33h1M0 34h1M14 34h1M18 34h1M20 34h1M25 34h1M37 34h1M44 34h1M0 35h1M10 35h1M20 35h2M24 35h1M45 35h1M7 36h1M9 36h1M21 36h1M28 36h1M45 36h1M9 37h1M21 37h1M41 37h1M54 37h1M13 38h1M17 38h1M24 38h1M27 38h1M41 38h1M54 38h1M18 39h1M38 39h1M40 39h2M54 39h1M3 40h2M9 40h1M18 40h1M27 40h1M40 40h1M1 41h1M3 41h1M10 41h2M22 41h1M25 41h1M31 41h1M40 41h1M48 41h1M22 42h1M35 42h1M52 42h1M54 42h1M57 42h1M0 43h2M10 43h1M16 43h1M27 43h1M35 43h1M57 43h1M10 44h1M26 44h1M30 44h2M35 44h1M42 44h1M55 44h1M57 44h1M17 45h1M20 45h1M23 45h1M29 45h1M33 45h3M37 45h1M7 46h1M10 46h1M13 46h1M17 46h1M23 46h1M26 46h1M33 46h1M39 46h1M54 46h1M11 47h1M15 47h1M23 47h2M44 47h1M15 48h1M19 48h1M32 48h1M38 48h1M6 49h1M10 49h1M47 49h1M58 49h1M50 50h1M54 50h2M58 50h1M22 51h1M25 51h2M30 51h1M35 51h1M45 51h1M57 51h2M7 52h1M35 52h1M41 52h2M49 52h1M17 53h1M28 53h2M41 53h1M50 53h1M8 54h1M29 54h2M34 54h1"/><path stroke="#0a2a2a" stroke-opacity="0.09" d="M0 0h1M4 0h2M7 0h1M17 0h1M19 0h1M28 0h2M34 0h1M50 0h1M53 0h1M56 0h1M4 1h1M17 1h2M33 1h1M38 1h1M40 1h1M53 1h1M55 1h1M14 2h1M17 2h1M24 2h1M40 2h1M49 2h1M52 2h1M55 2h1M0 3h1M8 3h2M13 3h2M20 3h1M34 3h1M36 3h1M39 3h1M49 3h1M55 3h1M8 4h1M14 4h1M20 4h1M23 4h1M25 4h1M30 4h1M36 4h1M46 4h1M49 4h1M17 5h1M20 5h1M23 5h1M37 5h2M42 5h1M46 5h2M54 5h4M5 6h1M14 6h1M17 6h1M20 6h1M23 6h1M25 6h1M30 6h1M33 6h1M35 6h1M46 6h1M50 6h1M0 7h1M10 7h1M19 7h1M23 7h1M32 7h1M39 7h1M44 7h1M6 8h1M14 8h1M32 8h1M34 8h1M36 8h1M42 8h1M44 8h1M50 8h1M1 9h1M7 9h1M16 9h1M19 9h1M26 9h1M39 9h1M42 9h3M48 9h1M50 9h1M52 9h1M2 10h1M4 10h2M7 10h1M13 10h1M19 10h2M32 10h1M39 10h1M43 10h1M47 10h1M52 10h1M57 10h2M13 11h1M32 11h1M35 11h1M40 11h1M43 11h1M54 11h1M0 12h1M9 12h1M11 12h1M38 12h1M43 12h1M47 12h2M58 12h1M21 13h1M23 13h1M43 13h1M48 13h1M58 13h1M10 14h2M13 14h1M15 14h1M25 14h1M43 14h1M49 14h2M56 14h1M4 15h1M9 15h1M16 15h1M30 15h1M36 15h1M42 15h1M45 15h1M47 15h2M50 15h1M53 15h1M55 15h1M4 16h1M8 16h1M16 16h1M21 16h1M24 16h2M30 16h1M32 16h1M37 16h1M50 16h2M56 16h1M0 17h1M6 17h1M17 17h1M20 17h2M23 17h1M33 17h1M47 17h2M6 18h1M15 18h2M31 18h1M44 18h1M48 18h1M1 19h1M3 19h1M6 19h1M19 19h1M22 19h1M35 19h1M40 19h1M44 19h1M47 19h1M49 19h1M15 20h2M18 20h1M24 20h1M35 20h1M39 20h1M55 20h2M1 21h1M10 21h1M15 21h1M18 21h1M24 21h1M43 21h1M49 21h1M57 21h2M2 22h1M18 22h1M25 22h1M30 22h1M33 22h1M42 22h1M44 22h1M51 22h1M57 22h1M2 23h1M26 23h1M40 23h1M44 23h1M55 23h1M58 23h1M1 24h1M5 24h2M12 24h4M19 24h1M30 24h1M45 24h1M47 24h1M49 24h1M51 24h1M54 24h1M0 25h2M6 25h1M24 25h1M31 25h1M36 25h1M38 25h1M44 25h4M53 25h1M57 25h2M0 26h1M10 26h2M16 26h1M20 26h1M33 26h1M38 26h1M46 26h2M57 26h1M7 27h1M23 27h1M28 27h2M32 27h1M38 27h1M51 27h1M4 28h1M14 28h2M17 28h1M21 28h3M30 28h1M33 28h1M3 29h3M13 29h1M22 29h1M26 29h1M30 29h1M37 29h1M39 29h1M41 29h1M43 29h1M46 29h1M12 30h1M26 30h1M30 30h3M37 30h1M46 30h2M49 30h1M19 31h1M25 31h1M29 31h1M32 31h1M48 31h1M55 31h2M2 32h1M12 32h2M22 32h1M37 32h1M55 32h1M8 33h1M22 33h1M33 33h1M37 33h1M55 33h1M5 34h1M19 34h1M21 34h2M24 34h1M41 34h1M52 34h1M7 35h1M19 35h1M34 35h1M41 35h1M47 35h1M51 35h3M55 35h1M11 36h1M13 36h1M18 36h1M20 36h1M25 36h1M41 36h1M53 36h1M2 37h1M16 37h1M23 37h2M26 37h1M43 37h1M52 37h1M6 38h1M9 38h1M11 38h1M14 38h1M16 38h1M18 38h1M26 38h1M33 38h3M42 38h2M4 39h1M6 39h2M9 39h1M11 39h1M16 39h1M24 39h1M34 39h2M42 39h1M55 39h1M8 40h1M11 40h1M15 40h2M24 40h1M31 40h1M53 40h1M0 41h1M8 41h1M15 41h1M30 41h1M37 41h3M57 41h2M0 42h1M2 42h2M8 42h1M24 42h1M26 42h2M36 42h1M40 42h1M4 43h1M26 43h1M30 43h1M33 43h2M43 43h1M50 43h1M52 43h2M0 44h2M14 44h1M27 44h1M29 44h1M34 44h1M44 44h1M47 44h1M0 45h1M13 45h1M28 45h1M42 45h1M47 45h1M52 45h1M0 46h1M8 46h1M11 46h1M15 46h1M22 46h1M32 46h1M35 46h3M40 46h2M5 47h1M8 47h1M32 47h1M37 47h1M48 47h1M51 47h1M1 48h1M4 48h1M6 48h1M37 48h1M55 48h1M58 48h1M13 49h1M15 49h1M34 49h2M37 49h1M55 49h1M57 49h1M10 50h1M17 50h1M22 50h1M25 50h3M30 50h1M41 50h1M51 50h1M57 50h1M9 51h2M17 51h1M19 51h1M37 51h3M41 51h1M50 51h1M55 51h1M13 52h3M17 52h1M22 52h1M26 52h1M29 52h2M48 52h1M55 52h2M2 53h1M8 53h1M13 53h1M15 53h2M20 53h3M26 53h1M30 53h1M34 53h2M38 53h1M52 53h2M55 53h2M1 54h1M12 54h1M14 54h1M20 54h2M24 54h3M28 54h1M32 54h1M35 54h1M38 54h1M53 54h1"/><path stroke="#3ce0b0" stroke-opacity="0.1" d="M8 0h1M12 0h1M22 0h1M31 0h1M35 0h2M39 0h1M45 0h3M51 0h1M54 0h1M58 0h1M2 1h1M8 1h3M12 1h2M20 1h1M31 1h1M35 1h2M51 1h1M54 1h1M58 1h1M2 2h2M8 2h1M10 2h4M21 2h1M23 2h1M31 2h3M43 2h2M47 2h1M51 2h1M57 2h1M2 3h1M4 3h1M6 3h2M10 3h1M12 3h1M18 3h1M21 3h1M23 3h1M29 3h1M31 3h3M38 3h1M43 3h2M47 3h1M51 3h1M57 3h2M1 4h2M4 4h1M6 4h1M10 4h1M28 4h1M31 4h1M39 4h2M43 4h2M51 4h1M0 5h1M4 5h1M15 5h2M24 5h1M28 5h1M40 5h1M43 5h1M45 5h1M48 5h1M51 5h1M1 6h1M3 6h1M6 6h2M9 6h1M16 6h1M28 6h1M31 6h1M34 6h1M36 6h3M40 6h2M43 6h1M45 6h1M47 6h2M56 6h1M1 7h1M3 7h2M7 7h1M9 7h1M16 7h1M30 7h2M34 7h1M37 7h2M41 7h1M43 7h1M45 7h1M48 7h2M53 7h2M2 8h1M4 8h1M9 8h1M12 8h1M25 8h1M30 8h1M33 8h1M37 8h1M41 8h1M49 8h1M51 8h1M53 8h2M56 8h1M2 9h1M8 9h1M12 9h1M25 9h1M29 9h1M33 9h2M45 9h1M51 9h1M53 9h1M56 9h1M8 10h1M12 10h1M14 10h1M17 10h1M21 10h1M24 10h4M29 10h2M34 10h1M37 10h1M42 10h1M49 10h1M51 10h1M53 10h1M56 10h1M4 11h1M7 11h1M12 11h1M14 11h2M17 11h1M21 11h1M24 11h2M29 11h2M37 11h1M42 11h1M50 11h1M57 11h1M4 12h1M7 12h1M12 12h1M14 12h1M16 12h2M22 12h1M26 12h4M31 12h1M33 12h1M37 12h1M50 12h3M54 12h1M57 12h1M0 13h2M4 13h1M6 13h1M12 13h1M16 13h2M22 13h1M26 13h4M32 13h2M41 13h2M51 13h2M54 13h1M57 13h1M0 14h2M4 14h1M6 14h1M8 14h1M12 14h1M17 14h1M19 14h1M26 14h2M29 14h1M32 14h2M35 14h1M39 14h1M41 14h1M44 14h1M52 14h1M57 14h2M5 15h2M14 15h1M19 15h1M27 15h1M33 15h1M35 15h1M39 15h1M41 15h1M44 15h1M52 15h1M57 15h1M1 16h1M3 16h1M5 16h2M9 16h3M19 16h1M27 16h1M35 16h2M42 16h1M44 16h1M46 16h1M57 16h1M1 17h3M7 17h1M9 17h3M13 17h1M27 17h1M36 17h1M42 17h1M45 17h2M49 17h1M56 17h1M2 18h1M5 18h1M9 18h1M11 18h2M20 18h1M29 18h2M36 18h2M42 18h1M45 18h2M51 18h1M53 18h1M2 19h1M5 19h1M20 19h1M23 19h1M28 19h2M37 19h1M42 19h1M45 19h2M50 19h4M58 19h1M20 20h1M23 20h1M28 20h1M31 20h2M34 20h1M38 20h1M42 20h1M45 20h3M50 20h1M52 20h3M8 21h1M13 21h1M16 21h1M22 21h2M32 21h1M34 21h1M38 21h2M41 21h1M45 21h1M47 21h1M54 21h1M13 22h4M20 22h1M22 22h1M28 22h1M31 22h2M34 22h1M37 22h1M39 22h1M41 22h1M45 22h1M48 22h1M50 22h1M56 22h1M4 23h1M17 23h1M20 23h1M22 23h1M28 23h1M31 23h1M37 23h1M39 23h1M43 23h1M46 23h1M50 23h1M56 23h1M3 24h2M17 24h2M22 24h2M28 24h1M39 24h1M50 24h1M52 24h1M56 24h1M2 25h3M12 25h1M18 25h1M21 25h1M28 25h1M32 25h1M48 25h1M50 25h1M55 25h1M1 26h3M8 26h1M12 26h1M18 26h1M21 26h1M34 26h1M41 26h1M43 26h1M48 26h1M50 26h1M0 27h4M8 27h1M10 27h1M12 27h1M18 27h1M24 27h1M34 27h1M36 27h1M40 27h2M43 27h1M45 27h1M47 27h1M54 27h1M0 28h2M7 28h2M10 28h1M12 28h1M24 28h1M28 28h1M34 28h1M36 28h1M41 28h1M45 28h1M47 28h1M50 28h1M52 28h4M57 28h2M0 29h2M6 29h2M16 29h1M18 29h1M21 29h1M24 29h1M28 29h1M34 29h1M36 29h1M42 29h1M48 29h1M52 29h5M58 29h1M0 30h3M6 30h1M15 30h4M28 30h1M34 30h1M38 30h1M40 30h1M42 30h1M52 30h3M0 31h1M7 31h1M15 31h3M20 31h1M26 31h1M28 31h1M33 31h1M35 31h1M38 31h1M40 31h2M44 31h1M58 31h1M4 32h1M7 32h1M10 32h1M16 32h2M20 32h1M26 32h1M28 32h1M34 32h1M38 32h1M40 32h1M43 32h2M46 32h2M53 32h1M58 32h1M1 33h1M3 33h1M7 33h1M10 33h1M17 33h1M26 33h2M29 33h1M32 33h1M34 33h3M40 33h1M42 33h1M46 33h2M50 33h1M53 33h1M58 33h1M1 34h1M3 34h1M11 34h1M13 34h1M16 34h2M27 34h1M32 34h1M34 34h3M40 34h1M42 34h1M46 34h1M49 34h2M1 35h3M13 35h5M22 35h1M27 35h1M30 35h1M32 35h1M35 35h3M39 35h2M42 35h1M46 35h1M49 35h2M58 35h1M12 36h1M14 36h2M27 36h1M29 36h2M35 36h3M39 36h2M48 36h3M5 37h1M12 37h1M15 37h1M25 37h1M35 37h3M40 37h1M44 37h1M47 37h1M51 37h1M55 37h1M58 37h1M0 38h1M8 38h1M12 38h1M19 38h1M22 38h1M25 38h1M29 38h1M32 38h1M37 38h1M44 38h2M47 38h1M50 38h2M55 38h1M57 38h2M12 39h2M17 39h1M19 39h2M22 39h1M26 39h1M29 39h1M44 39h1M49 39h1M51 39h2M57 39h2M12 40h3M17 40h1M19 40h2M23 40h1M29 40h1M43 40h2M47 40h1M49 40h1M51 40h1M55 40h1M57 40h1M9 41h1M12 41h1M14 41h1M19 41h2M23 41h1M29 41h1M32 41h2M42 41h1M44 41h1M47 41h1M49 41h1M51 41h1M55 41h1M7 42h1M9 42h1M12 42h1M15 42h1M23 42h1M32 42h1M38 42h1M44 42h1M47 42h1M49 42h1M6 43h1M8 43h1M11 43h2M15 43h1M18 43h2M23 43h1M37 43h2M2 44h1M5 44h1M8 44h1M11 44h2M18 44h2M22 44h1M24 44h1M38 44h1M45 44h1M51 44h1M53 44h1M58 44h1M1 45h2M4 45h2M12 45h1M18 45h2M24 45h2M38 45h1M45 45h1M50 45h2M53 45h1M58 45h1M4 46h1M9 46h1M12 46h1M18 46h1M20 46h1M25 46h1M38 46h1M46 46h2M50 46h1M53 46h1M55 46h2M58 46h1M12 47h1M18 47h1M20 47h1M27 47h1M30 47h1M41 47h1M45 47h3M49 47h2M53 47h2M56 47h1M3 48h1M7 48h1M11 48h2M20 48h1M23 48h1M25 48h1M27 48h1M33 48h1M40 48h1M45 48h1M47 48h1M50 48h1M53 48h1M56 48h1M0 49h1M2 49h1M5 49h1M11 49h2M16 49h1M18 49h1M20 49h1M25 49h1M29 49h1M33 49h1M40 49h1M45 49h1M49 49h1M0 50h3M6 50h1M16 50h1M24 50h1M28 50h2M32 50h1M36 50h1M43 50h1M46 50h3M52 50h1M0 51h3M6 51h1M8 51h1M11 51h2M24 51h1M28 51h1M32 51h1M36 51h1M40 51h1M43 51h1M46 51h2M52 51h1M5 52h1M12 52h1M32 52h1M36 52h1M40 52h1M43 52h2M46 52h1M54 52h1M3 53h1M11 53h1M23 53h1M33 53h1M40 53h1M43 53h1M46 53h1M51 53h1M58 53h1M3 54h1M18 54h1M22 54h2M31 54h1M43 54h4M51 54h2M54 54h1M58 54h1"/></g></defs><g transform="translate(75,879.5) scale(3.95339,1)" shape-rendering="crispEdges"><use href="#nz" x="0" y="0"/><use href="#nz" x="59" y="0"/><use href="#nz" x="118" y="0"/><use href="#nz" x="177" y="0"/><use href="#nz" x="0" y="55"/><use href="#nz" x="59" y="55"/><use href="#nz" x="118" y="55"/><use href="#nz" x="177" y="55"/><use href="#nz" x="0" y="110"/><use href="#nz" x="59" y="110"/><use href="#nz" x="118" y="110"/><use href="#nz" x="177" y="110"/></g><g transform="translate(75,879.5) scale(3.95339,1)" shape-rendering="crispEdges" fill="none" stroke-width="1" stroke-opacity="0.55"><path stroke="#1eb359" d="M155 78h1M154 79h2M153 80h1M155 85h2M153 86h1M152 87h1M154 87h1M151 88h2M150 89h2M149 90h1M156 92h1M156 93h1M9 94h15M151 94h1M155 94h1M150 95h1M149 96h1M151 96h1M42 97h1M148 97h2M42 98h2M147 98h2M41 99h3M146 99h1M154 99h1M157 99h1M41 100h3M152 100h1M8 101h1M41 101h3M41 102h3M149 102h1M153 102h1M41 103h3M148 103h1M196 103h2M41 104h3M147 104h1M41 105h3M145 105h2M148 105h1M41 106h3M145 106h2M154 106h1M41 107h3M52 107h31M41 108h3M81 108h1M150 108h1M156 108h1M192 108h10M41 109h3M203 109h10M42 110h2M147 110h1M42 111h2M42 112h3M148 112h1M42 113h3M53 113h3M144 113h1M146 113h1M154 113h1M189 113h5M199 113h6M8 114h16M42 114h5M86 114h2M151 114h1M199 114h6M211 114h10M42 115h4M51 115h2M85 115h3M41 116h5M154 116h1M5 117h1M41 117h5M146 117h1M182 117h1M4 118h2M41 118h6M184 118h4M204 118h7M41 119h6M195 119h3M222 119h6M41 120h2M45 120h4M51 120h13M143 120h1M145 120h1M154 120h1M7 121h1M41 121h2M88 121h3M158 121h1M41 122h2M48 122h2M89 122h3M157 122h1M180 122h7M4 123h1M41 123h1M46 123h2M155 123h1M181 123h2M210 123h8M8 124h1M40 124h2M46 124h2M152 124h1M191 124h2M231 124h5M3 125h1M6 125h1M40 125h2M46 125h2M3 126h2M40 126h2M46 126h2M147 126h1M40 127h2M47 127h7M56 127h26M143 127h2M153 127h1M178 127h2M189 127h7M40 128h2M93 128h2M150 128h1M178 128h2M225 128h5M40 129h2M94 129h2M182 129h4M41 130h1M46 130h2M55 130h32M145 130h1M200 130h3M232 130h4M8 131h1M41 131h2M46 131h2M152 131h1M5 132h1M41 132h2M45 132h2M142 132h1M149 132h1M177 132h1M199 132h2M3 133h1M41 133h6M141 133h1M146 133h1M177 133h1M41 134h3M48 134h2M82 134h5M153 134h1M178 134h2M41 135h2M98 135h2M178 135h3M194 135h3M4 136h1M41 136h2M101 136h1M178 136h4M3 137h1M42 137h10M94 137h3M156 137h1M177 137h1M195 137h4M43 138h2M142 138h1M152 138h1M177 138h1M2 139h1M140 139h1M148 139h1M177 139h3M2 140h1M140 140h5M177 140h5M195 140h3M44 141h2M93 141h4M153 141h1M177 141h5M5 142h1M109 142h2M177 142h1M196 142h4M3 143h1M42 143h1M113 143h2M176 143h1M45 144h2M106 144h3M157 144h1M177 144h1M1 145h1M8 145h1M152 145h1M178 145h6M187 145h3M0 146h1M139 146h1M147 146h1M178 146h4M0 147h1M2 147h1M177 147h2M190 147h10M8 148h2M20 148h4M48 148h4M84 148h13M152 148h2M176 148h1M44 149h1M116 149h2M146 149h1M177 149h1M44 150h1M119 150h1M187 150h4M47 151h3M110 151h4M0 152h1M6 152h2M151 152h1M178 153h1M178 154h2M194 155h10M224 155h12M7 156h2M47 156h1M100 156h3M145 156h2M5 157h2M24 157h1M46 157h1M102 157h2M141 157h1M54 158h41M140 158h1M157 158h1M182 158h10M205 158h23M182 159h4"/><path stroke="#1eb954" d="M154 86h2M153 87h1M155 92h1M153 93h1M152 94h3M151 95h2M150 96h1M155 99h2M156 100h1M9 101h12M151 101h1M155 101h1M150 102h1M152 102h1M149 103h3M148 104h2M147 105h1M155 106h1M157 106h1M152 107h1M157 107h1M149 109h1M153 109h1M148 110h1M151 110h1M146 111h1M149 111h1M145 112h3M145 113h1M157 113h1M194 113h5M47 114h5M84 114h2M205 114h6M7 115h1M53 115h20M83 115h2M150 115h1M156 115h1M6 116h2M9 116h9M148 116h1M6 117h2M151 117h1M145 118h1M149 118h1M188 118h7M198 118h6M144 119h1M147 119h1M198 119h7M211 119h11M43 120h2M144 120h1M24 121h1M43 121h5M86 121h2M151 121h1M6 122h1M43 122h5M50 122h3M86 122h3M149 122h1M24 123h1M42 123h4M147 123h1M154 123h1M183 123h5M204 123h6M4 124h1M42 124h4M145 124h1M193 124h3M225 124h6M4 125h2M42 125h4M149 125h1M42 126h4M143 126h1M146 126h1M42 127h5M54 127h2M154 127h1M180 127h9M42 128h3M90 128h3M180 128h1M219 128h6M5 129h1M42 129h5M92 129h2M148 129h1M186 129h3M42 130h4M155 130h1M203 130h29M3 131h1M43 131h3M3 132h1M43 132h2M178 132h1M195 132h4M142 133h2M145 133h1M44 134h4M50 134h4M55 134h27M154 134h1M180 134h1M7 135h1M24 135h1M43 135h2M96 135h2M150 135h1M197 135h3M5 136h1M43 136h2M99 136h2M147 136h1M158 136h1M24 137h1M52 137h2M89 137h5M144 137h1M178 137h2M185 137h10M3 138h1M7 138h1M178 138h1M231 138h5M3 139h2M141 139h1M180 139h2M198 140h4M233 140h3M46 141h2M87 141h6M154 141h1M6 142h1M42 142h1M106 142h3M149 142h1M178 142h2M185 142h11M111 143h2M145 143h1M2 144h1M47 144h1M103 144h3M142 144h1M178 144h1M140 145h1M151 145h1M190 145h3M1 146h1M4 146h1M146 146h1M1 147h1M179 147h3M183 147h7M52 148h32M154 148h1M177 148h1M45 149h1M114 149h2M147 149h1M159 149h1M178 149h1M117 150h2M142 150h1M159 150h1M191 150h3M1 151h1M50 151h3M103 151h7M1 152h1M5 152h1M139 152h1M150 152h1M179 153h1M180 154h1M204 155h20M9 156h15M48 156h3M96 156h4M147 156h1M7 157h2M47 157h2M99 157h3M141 158h1M156 158h1M192 158h13M186 159h7M224 159h12"/><path stroke="#1ec04f" d="M154 93h2M153 100h2M21 101h3M152 101h3M151 102h1M156 106h1M153 107h1M156 107h1M151 108h1M155 108h1M150 109h1M152 109h1M149 110h2M147 111h2M155 113h2M52 114h32M152 114h1M157 114h1M8 115h1M24 115h1M73 115h10M8 116h1M18 116h6M149 116h1M153 116h1M147 117h1M146 118h3M195 118h3M145 119h2M205 119h6M155 120h3M8 121h1M48 121h4M83 121h3M53 122h16M83 122h3M5 123h1M153 123h1M188 123h7M197 123h7M5 124h3M146 124h1M151 124h1M196 124h6M214 124h11M144 125h1M148 125h1M144 126h2M155 127h3M7 128h1M24 128h1M45 128h4M87 128h3M151 128h1M158 128h1M181 128h1M211 128h8M47 129h4M89 129h3M157 129h1M189 129h2M234 129h2M4 130h1M24 130h1M146 130h1M154 130h1M4 131h1M7 131h1M144 131h1M151 131h1M4 132h1M143 132h1M148 132h1M179 132h2M186 132h9M144 133h1M178 133h1M230 133h6M54 134h1M155 134h3M181 134h1M45 135h1M94 135h2M200 135h3M230 135h6M45 136h2M97 136h2M4 137h1M54 137h27M82 137h7M155 137h1M180 137h5M5 138h2M143 138h1M151 138h1M179 138h1M225 138h6M142 139h1M147 139h1M182 139h3M202 140h31M48 141h4M74 141h13M155 141h3M43 142h1M104 142h2M180 142h5M43 143h1M108 143h3M177 143h1M48 144h3M99 144h4M156 144h1M179 144h1M2 145h1M7 145h1M193 145h3M2 146h2M140 146h1M145 146h1M182 147h1M155 148h3M4 149h1M110 149h4M179 149h1M2 150h1M45 150h1M114 150h3M143 150h1M194 150h5M53 151h50M140 151h1M157 151h1M2 152h3M148 152h2M180 153h1M227 153h9M181 154h1M51 156h3M73 156h23M148 156h1M158 156h1M9 157h15M49 157h3M96 157h3M142 157h1M142 158h2M152 158h4M193 159h31"/><path stroke="#1ec64a" d="M155 100h1M154 107h2M152 108h3M151 109h1M153 114h1M156 114h1M9 115h8M151 115h1M155 115h1M150 116h3M148 117h3M9 121h15M52 121h31M152 121h1M157 121h1M7 122h1M24 122h1M69 122h14M150 122h1M156 122h1M6 123h18M148 123h1M195 123h2M147 124h1M150 124h1M202 124h12M145 125h3M8 128h1M49 128h3M83 128h4M182 128h5M204 128h7M6 129h1M51 129h3M85 129h4M149 129h1M191 129h3M227 129h7M5 130h1M147 130h1M153 130h1M5 131h2M145 131h1M150 131h1M144 132h1M146 132h2M181 132h5M179 133h1M225 133h5M182 134h3M8 135h16M46 135h2M90 135h4M151 135h1M158 135h1M203 135h27M6 136h1M47 136h2M94 136h3M148 136h1M5 137h1M9 137h15M81 137h1M145 137h1M154 137h1M4 138h1M150 138h1M180 138h1M216 138h9M143 139h1M146 139h1M185 139h4M52 141h22M7 142h1M24 142h1M44 142h1M101 142h3M150 142h1M4 143h1M44 143h1M106 143h2M146 143h1M158 143h1M178 143h1M234 143h2M3 144h1M24 144h1M51 144h2M94 144h5M143 144h1M155 144h1M180 144h1M5 145h2M141 145h1M150 145h1M196 145h5M141 146h4M178 148h1M5 149h1M46 149h2M104 149h6M148 149h1M180 149h1M46 150h1M112 150h2M199 150h37M2 151h1M24 151h1M141 151h1M140 152h2M147 152h1M181 153h6M208 153h19M182 154h4M54 156h19M149 156h2M52 157h44M143 157h1M158 157h1M144 158h8"/><path stroke="#1ecc45" d="M154 114h2M17 115h7M152 115h3M153 121h2M156 121h1M8 122h1M151 122h1M155 122h1M149 123h4M148 124h2M9 128h15M52 128h31M152 128h2M157 128h1M187 128h17M7 129h1M54 129h31M150 129h1M156 129h1M194 129h6M218 129h9M6 130h18M148 130h1M152 130h1M146 131h4M145 132h1M180 133h1M217 133h8M185 134h3M48 135h3M85 135h5M152 135h1M7 136h1M24 136h1M49 136h2M90 136h4M149 136h1M157 136h1M6 137h3M146 137h1M153 137h1M144 138h1M149 138h1M181 138h3M205 138h11M144 139h2M189 139h4M228 139h8M8 142h1M45 142h1M99 142h2M151 142h1M158 142h1M5 143h1M45 143h1M103 143h3M147 143h1M179 143h1M227 143h7M53 144h27M83 144h11M144 144h1M154 144h1M181 144h1M3 145h2M142 145h1M148 145h2M201 145h35M179 148h2M228 148h8M6 149h1M48 149h3M97 149h7M149 149h1M181 149h1M3 150h1M47 150h3M105 150h7M144 150h1M3 151h1M142 151h1M155 151h2M142 152h5M187 153h21M186 154h6M227 154h9M151 156h2M157 156h1M144 157h2"/><path stroke="#1ed340" d="M155 121h1M9 122h10M152 122h3M154 128h1M156 128h1M24 129h1M151 129h1M155 129h1M200 129h18M149 130h3M181 133h2M207 133h10M188 134h3M233 134h3M51 135h3M56 135h29M153 135h1M157 135h1M8 136h5M51 136h3M85 136h5M150 136h1M156 136h1M147 137h1M152 137h1M145 138h4M184 138h10M197 138h8M193 139h7M215 139h13M9 142h15M46 142h1M96 142h3M152 142h1M6 143h1M24 143h1M46 143h1M100 143h3M148 143h1M180 143h1M217 143h10M4 144h20M80 144h3M145 144h1M153 144h1M182 144h2M143 145h1M147 145h1M181 148h1M215 148h13M7 149h1M24 149h1M51 149h3M72 149h25M150 149h1M158 149h1M182 149h3M50 150h3M97 150h8M145 150h1M158 150h1M4 151h1M8 151h16M143 151h1M153 151h2M192 154h35M153 156h4M146 157h3M157 157h1"/><path stroke="#1ed93b" d="M19 122h5M155 128h1M8 129h5M152 129h3M183 133h7M200 133h7M191 134h4M225 134h8M54 135h2M154 135h3M13 136h11M54 136h31M151 136h2M155 136h1M148 137h4M194 138h3M200 139h15M47 142h3M91 142h5M153 142h2M157 142h1M7 143h1M47 143h3M96 143h4M149 143h1M157 143h1M181 143h4M204 143h13M146 144h2M151 144h2M184 144h4M144 145h3M182 148h9M200 148h15M8 149h1M54 149h18M151 149h1M185 149h5M234 149h2M4 150h1M53 150h44M146 150h1M5 151h3M144 151h1M152 151h1M149 157h8"/><path stroke="#1edf36" d="M13 129h11M190 133h10M195 134h9M211 134h14M153 136h2M50 142h3M83 142h8M155 142h2M8 143h16M50 143h2M91 143h5M150 143h3M155 143h2M185 143h19M148 144h3M188 144h5M228 144h8M191 148h9M9 149h15M152 149h2M157 149h1M190 149h5M222 149h12M5 150h2M24 150h1M147 150h2M145 151h7"/><path stroke="#1ee632" d="M204 134h7M53 142h30M52 143h39M153 143h2M193 144h35M154 149h3M195 149h27M7 150h2M149 150h2M157 150h1"/><path stroke="#1eec2d" d="M9 150h15M151 150h6"/></g></g></g><!--/spec-->
  <g class="pt" font-size="12" text-anchor="middle">
    <text x="77" y="1057">0</text><text x="274" y="1057">0.5</text><text x="470.500" y="1057">1</text><text x="668" y="1057">1.5</text><text x="864.500" y="1057">2</text>
  </g>
  <g class="pt" font-size="12" text-anchor="end">
    <text x="74.300" y="884">8</text><text x="74.300" y="925">6</text><text x="74.300" y="966">4</text><text x="74.300" y="1007">2</text><text x="74.300" y="1048">0</text>
  </g>
  <text class="pt" font-size="16" text-anchor="middle" x="541.500" y="874">Spectrogram</text>
  <text class="pt" font-size="14" text-anchor="middle" x="541.900" y="1081.500" letter-spacing="0.35">Time, s</text>
  <text class="pt" font-size="14" text-anchor="middle" transform="translate(42,961.800) rotate(-90)" letter-spacing="0.12">Frequency, kHz</text>
  <!-- colorbar -->
  <defs>
    <linearGradient id="cb" x1="0" y1="1" x2="0" y2="0">
      <stop offset="0" stop-color="#1e3e3e"/><stop offset="0.5" stop-color="#1e8080"/><stop offset="1" stop-color="#1eff1e"/>
    </linearGradient>
  </defs>
  <rect x="1037" y="856" width="30" height="200" fill="url(#cb)"/>
  <g class="pt" font-size="12">
    <text x="1070" y="860">0 dB</text><text x="1070" y="900">−20 dB</text><text x="1070" y="940">−40 dB</text><text x="1070" y="980">−60 dB</text><text x="1070" y="1020">−80 dB</text><text x="1070" y="1060">−100 dB</text>
  </g>
</svg>
</body>
</html>
